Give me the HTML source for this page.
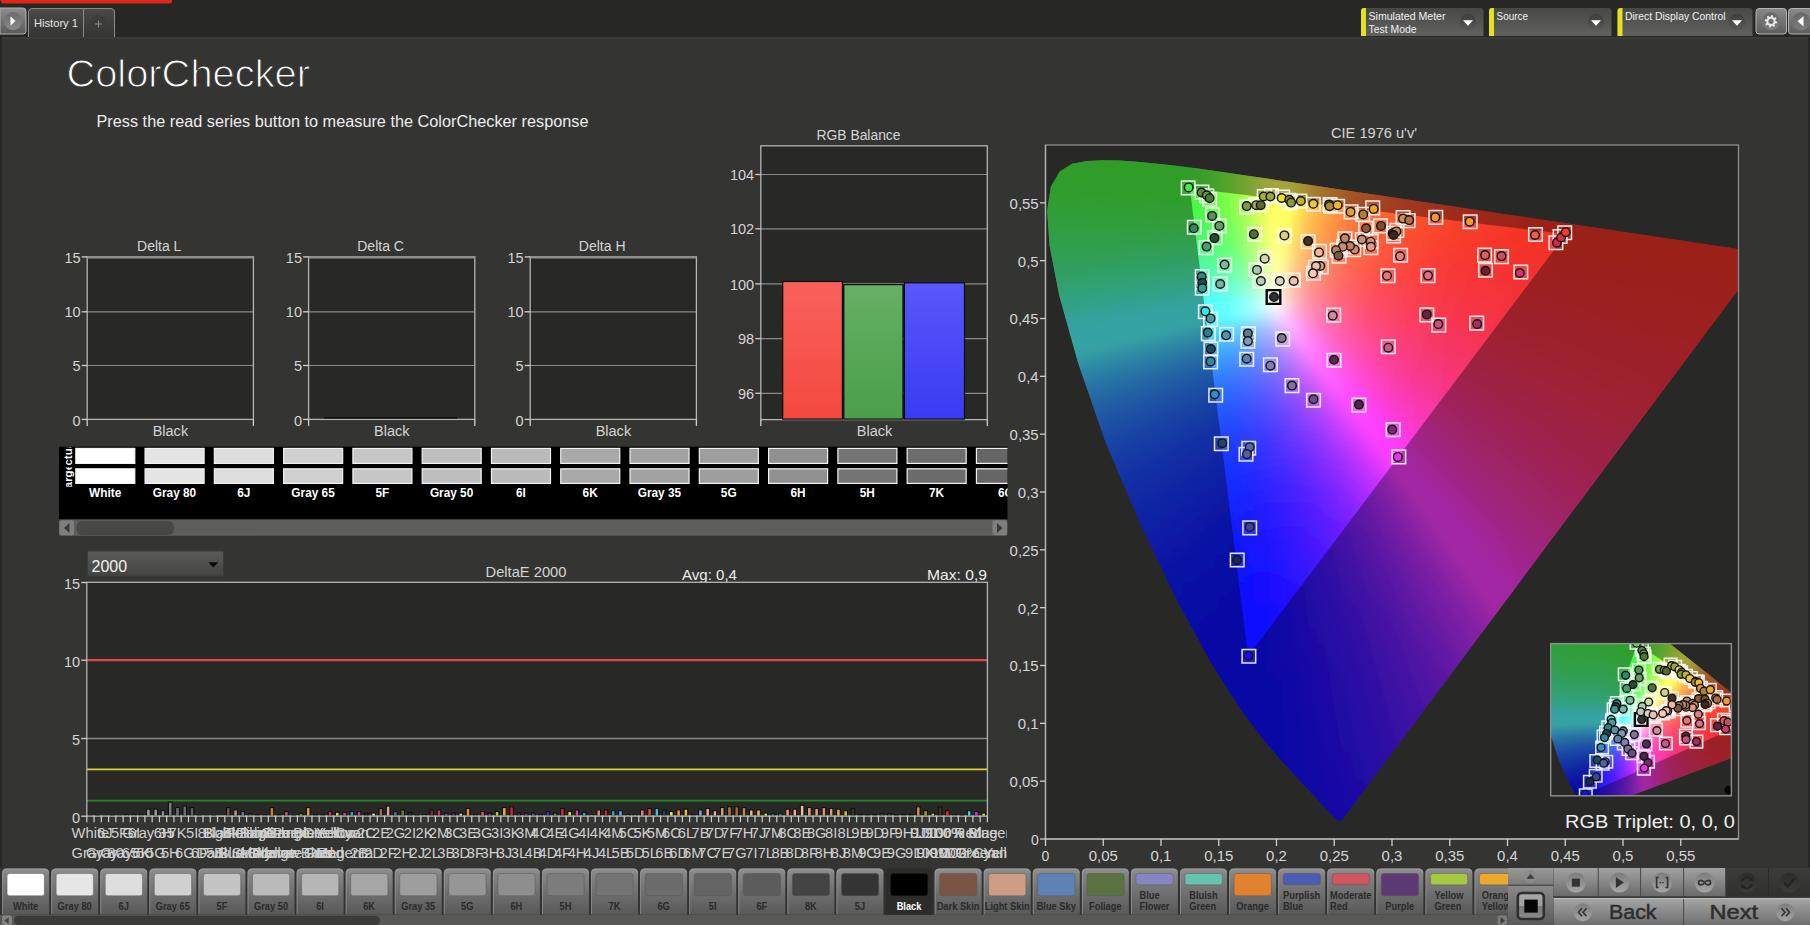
<!DOCTYPE html>
<html><head><meta charset="utf-8"><title>ColorChecker</title><style>*{margin:0;padding:0}html,body{width:1810px;height:925px;overflow:hidden;background:#343433}
svg{display:block;position:absolute;left:0;top:0}
svg text{font-family:"Liberation Sans",sans-serif}</style></head><body>
<svg width="1810" height="925" viewBox="0 0 1810 925">
<defs><linearGradient id="v1" x1="0" y1="0" x2="0" y2="1"><stop offset="0" stop-color="#8e8e8e"/><stop offset="1" stop-color="#5a5a5a"/></linearGradient>
<linearGradient id="v2" x1="0" y1="0" x2="0" y2="1"><stop offset="0" stop-color="#6a6a6a"/><stop offset="1" stop-color="#8a8a8a"/></linearGradient>
<linearGradient id="v3" x1="0" y1="0" x2="0" y2="1"><stop offset="0" stop-color="#4a4a49"/><stop offset="1" stop-color="#343433"/></linearGradient>
<linearGradient id="v4" x1="0" y1="0" x2="0" y2="1"><stop offset="0" stop-color="#484847"/><stop offset="1" stop-color="#616160"/></linearGradient>
<linearGradient id="v5" x1="0" y1="0" x2="0" y2="1"><stop offset="0" stop-color="#3e3e3d"/><stop offset="1" stop-color="#5a5a59"/></linearGradient>
<linearGradient id="v6" x1="0" y1="0" x2="0" y2="1"><stop offset="0" stop-color="#484847"/><stop offset="1" stop-color="#616160"/></linearGradient>
<linearGradient id="v7" x1="0" y1="0" x2="0" y2="1"><stop offset="0" stop-color="#3e3e3d"/><stop offset="1" stop-color="#5a5a59"/></linearGradient>
<linearGradient id="v8" x1="0" y1="0" x2="0" y2="1"><stop offset="0" stop-color="#484847"/><stop offset="1" stop-color="#616160"/></linearGradient>
<linearGradient id="v9" x1="0" y1="0" x2="0" y2="1"><stop offset="0" stop-color="#3e3e3d"/><stop offset="1" stop-color="#5a5a59"/></linearGradient>
<linearGradient id="v10" x1="0" y1="0" x2="0" y2="1"><stop offset="0" stop-color="#8a8a8a"/><stop offset="1" stop-color="#5c5c5c"/></linearGradient>
<linearGradient id="v11" x1="0" y1="0" x2="0" y2="1"><stop offset="0" stop-color="#666"/><stop offset="1" stop-color="#7c7c7c"/></linearGradient>
<linearGradient id="v12" x1="0" y1="0" x2="0" y2="1"><stop offset="0" stop-color="#666"/><stop offset="1" stop-color="#7c7c7c"/></linearGradient>
<linearGradient id="v13" x1="0" y1="0" x2="0" y2="1"><stop offset="0" stop-color="#fa615c"/><stop offset="1" stop-color="#f4483f"/></linearGradient>
<linearGradient id="v14" x1="0" y1="0" x2="0" y2="1"><stop offset="0" stop-color="#65b065"/><stop offset="1" stop-color="#4a9e4a"/></linearGradient>
<linearGradient id="v15" x1="0" y1="0" x2="0" y2="1"><stop offset="0" stop-color="#5858fb"/><stop offset="1" stop-color="#3a3af4"/></linearGradient>
<clipPath id="swc"><rect x="59" y="446.7" width="948.5" height="72.3"/></clipPath>
<clipPath id="ra"><rect x="59" y="447.4" width="16" height="18.2"/></clipPath><clipPath id="rb"><rect x="59" y="467.2" width="16" height="19.6"/></clipPath>
<linearGradient id="v16" x1="0" y1="0" x2="0" y2="1"><stop offset="0" stop-color="#5c5c5b"/><stop offset="1" stop-color="#434342"/></linearGradient>
<clipPath id="xl"><rect x="60" y="820" width="947" height="45"/></clipPath>
<linearGradient id="g0" gradientUnits="userSpaceOnUse" x1="198.7" y1="462" x2="14.2" y2="458.1"><stop offset="0" stop-color="#ffffff"/><stop offset="0.04" stop-color="#d8ffff"/><stop offset="0.083" stop-color="#b4ffff"/><stop offset="0.132" stop-color="#92ffff"/><stop offset="0.198" stop-color="#70ffff"/><stop offset="0.264" stop-color="#5affff"/><stop offset="0.331" stop-color="#52fdff"/><stop offset="0.551" stop-color="#51fcf3"/><stop offset="0.772" stop-color="#51fbe3"/><stop offset="1" stop-color="#50fbd6"/></linearGradient>
<linearGradient id="g1" gradientUnits="userSpaceOnUse" x1="198.7" y1="462" x2="16.5" y2="450.5"><stop offset="0" stop-color="#ffffff"/><stop offset="0.04" stop-color="#d8ffff"/><stop offset="0.083" stop-color="#b4ffff"/><stop offset="0.133" stop-color="#93ffff"/><stop offset="0.2" stop-color="#71ffff"/><stop offset="0.266" stop-color="#5affff"/><stop offset="0.333" stop-color="#52fdff"/><stop offset="0.553" stop-color="#52fdff"/><stop offset="0.773" stop-color="#51fcf3"/><stop offset="1" stop-color="#51fce8"/></linearGradient>
<linearGradient id="g2" gradientUnits="userSpaceOnUse" x1="198.7" y1="462" x2="18.7" y2="443.1"><stop offset="0" stop-color="#ffffff"/><stop offset="0.04" stop-color="#d8ffff"/><stop offset="0.084" stop-color="#b5ffff"/><stop offset="0.134" stop-color="#93ffff"/><stop offset="0.201" stop-color="#71ffff"/><stop offset="0.268" stop-color="#5bffff"/><stop offset="0.335" stop-color="#53feff"/><stop offset="0.555" stop-color="#52fdff"/><stop offset="0.774" stop-color="#52fdff"/><stop offset="1" stop-color="#52fcfa"/></linearGradient>
<linearGradient id="g3" gradientUnits="userSpaceOnUse" x1="198.7" y1="462" x2="20.9" y2="435.7"><stop offset="0" stop-color="#ffffff"/><stop offset="0.041" stop-color="#d9ffff"/><stop offset="0.084" stop-color="#b5ffff"/><stop offset="0.135" stop-color="#94ffff"/><stop offset="0.203" stop-color="#72ffff"/><stop offset="0.27" stop-color="#5bffff"/><stop offset="0.338" stop-color="#53feff"/><stop offset="0.556" stop-color="#53feff"/><stop offset="0.775" stop-color="#53fdff"/><stop offset="1" stop-color="#52fdff"/></linearGradient>
<linearGradient id="g4" gradientUnits="userSpaceOnUse" x1="198.7" y1="462" x2="23.1" y2="428.5"><stop offset="0" stop-color="#ffffff"/><stop offset="0.041" stop-color="#d9ffff"/><stop offset="0.085" stop-color="#b6ffff"/><stop offset="0.136" stop-color="#94ffff"/><stop offset="0.204" stop-color="#72ffff"/><stop offset="0.272" stop-color="#5cffff"/><stop offset="0.34" stop-color="#54ffff"/><stop offset="0.558" stop-color="#53feff"/><stop offset="1" stop-color="#53feff"/></linearGradient>
<linearGradient id="g5" gradientUnits="userSpaceOnUse" x1="198.7" y1="462" x2="25.3" y2="421.3"><stop offset="0" stop-color="#ffffff"/><stop offset="0.041" stop-color="#d9ffff"/><stop offset="0.086" stop-color="#b6ffff"/><stop offset="0.137" stop-color="#95ffff"/><stop offset="0.206" stop-color="#72ffff"/><stop offset="0.274" stop-color="#5cffff"/><stop offset="0.343" stop-color="#54ffff"/><stop offset="1" stop-color="#54ffff"/></linearGradient>
<linearGradient id="g6" gradientUnits="userSpaceOnUse" x1="198.7" y1="462" x2="27.5" y2="414.2"><stop offset="0" stop-color="#ffffff"/><stop offset="0.041" stop-color="#d9ffff"/><stop offset="0.086" stop-color="#b5ffff"/><stop offset="0.138" stop-color="#93ffff"/><stop offset="0.207" stop-color="#71ffff"/><stop offset="0.276" stop-color="#5afcff"/><stop offset="0.345" stop-color="#52f7ff"/><stop offset="0.561" stop-color="#50f3ff"/><stop offset="0.777" stop-color="#50f0ff"/><stop offset="1" stop-color="#4fedff"/></linearGradient>
<linearGradient id="g7" gradientUnits="userSpaceOnUse" x1="198.7" y1="462" x2="29.7" y2="407.1"><stop offset="0" stop-color="#ffffff"/><stop offset="0.042" stop-color="#d8ffff"/><stop offset="0.087" stop-color="#b4ffff"/><stop offset="0.139" stop-color="#92ffff"/><stop offset="0.209" stop-color="#6ffbff"/><stop offset="0.278" stop-color="#58f3ff"/><stop offset="0.348" stop-color="#4fedff"/><stop offset="0.563" stop-color="#4ce5ff"/><stop offset="0.778" stop-color="#4bdfff"/><stop offset="1" stop-color="#49dbff"/></linearGradient>
<linearGradient id="g8" gradientUnits="userSpaceOnUse" x1="198.7" y1="462" x2="32.1" y2="400"><stop offset="0" stop-color="#ffffff"/><stop offset="0.042" stop-color="#d7ffff"/><stop offset="0.088" stop-color="#b3ffff"/><stop offset="0.14" stop-color="#90fcff"/><stop offset="0.211" stop-color="#6df4ff"/><stop offset="0.281" stop-color="#55ebff"/><stop offset="0.351" stop-color="#4ce4ff"/><stop offset="0.565" stop-color="#49d9ff"/><stop offset="0.779" stop-color="#46d0ff"/><stop offset="1" stop-color="#44caff"/></linearGradient>
<linearGradient id="g9" gradientUnits="userSpaceOnUse" x1="198.7" y1="462" x2="34.4" y2="392.9"><stop offset="0" stop-color="#ffffff"/><stop offset="0.042" stop-color="#d6ffff"/><stop offset="0.088" stop-color="#b1fdff"/><stop offset="0.141" stop-color="#8ef7ff"/><stop offset="0.212" stop-color="#6beeff"/><stop offset="0.283" stop-color="#53e3ff"/><stop offset="0.354" stop-color="#49dbff"/><stop offset="0.567" stop-color="#45cdff"/><stop offset="0.78" stop-color="#42c2ff"/><stop offset="1" stop-color="#3fbaff"/></linearGradient>
<linearGradient id="g10" gradientUnits="userSpaceOnUse" x1="198.7" y1="462" x2="36.7" y2="385.8"><stop offset="0" stop-color="#ffffff"/><stop offset="0.043" stop-color="#d6feff"/><stop offset="0.089" stop-color="#b0faff"/><stop offset="0.143" stop-color="#8df3ff"/><stop offset="0.214" stop-color="#69e7ff"/><stop offset="0.285" stop-color="#51dcff"/><stop offset="0.357" stop-color="#46d2ff"/><stop offset="0.569" stop-color="#42c2ff"/><stop offset="0.781" stop-color="#3eb6ff"/><stop offset="1" stop-color="#3bacff"/></linearGradient>
<linearGradient id="g11" gradientUnits="userSpaceOnUse" x1="198.7" y1="462" x2="39" y2="378.5"><stop offset="0" stop-color="#ffffff"/><stop offset="0.043" stop-color="#d5fcff"/><stop offset="0.09" stop-color="#aff6ff"/><stop offset="0.144" stop-color="#8beeff"/><stop offset="0.216" stop-color="#67e1ff"/><stop offset="0.288" stop-color="#4fd4ff"/><stop offset="0.36" stop-color="#44c9ff"/><stop offset="0.571" stop-color="#3eb7ff"/><stop offset="0.782" stop-color="#3aaaff"/><stop offset="1" stop-color="#379fff"/></linearGradient>
<linearGradient id="g12" gradientUnits="userSpaceOnUse" x1="198.7" y1="462" x2="41.3" y2="371.1"><stop offset="0" stop-color="#ffffff"/><stop offset="0.044" stop-color="#d4fbff"/><stop offset="0.091" stop-color="#adf3ff"/><stop offset="0.145" stop-color="#89e9ff"/><stop offset="0.218" stop-color="#65dbff"/><stop offset="0.29" stop-color="#4dcdff"/><stop offset="0.363" stop-color="#41c1ff"/><stop offset="0.573" stop-color="#3badff"/><stop offset="0.783" stop-color="#379eff"/><stop offset="1" stop-color="#3493ff"/></linearGradient>
<linearGradient id="g13" gradientUnits="userSpaceOnUse" x1="198.7" y1="462" x2="43.7" y2="363.7"><stop offset="0" stop-color="#ffffff"/><stop offset="0.044" stop-color="#d3f9ff"/><stop offset="0.091" stop-color="#acf0ff"/><stop offset="0.146" stop-color="#87e5ff"/><stop offset="0.219" stop-color="#63d5ff"/><stop offset="0.293" stop-color="#4ac5ff"/><stop offset="0.366" stop-color="#3fb9ff"/><stop offset="0.575" stop-color="#38a3ff"/><stop offset="0.784" stop-color="#3494ff"/><stop offset="1" stop-color="#3088ff"/></linearGradient>
<linearGradient id="g14" gradientUnits="userSpaceOnUse" x1="198.7" y1="462" x2="46.2" y2="356"><stop offset="0" stop-color="#ffffff"/><stop offset="0.044" stop-color="#d2f7ff"/><stop offset="0.092" stop-color="#aaedff"/><stop offset="0.148" stop-color="#85e0ff"/><stop offset="0.221" stop-color="#61ceff"/><stop offset="0.295" stop-color="#48beff"/><stop offset="0.369" stop-color="#3db1ff"/><stop offset="0.577" stop-color="#369aff"/><stop offset="0.785" stop-color="#318aff"/><stop offset="1" stop-color="#2d7eff"/></linearGradient>
<linearGradient id="g15" gradientUnits="userSpaceOnUse" x1="198.7" y1="462" x2="48.7" y2="348.1"><stop offset="0" stop-color="#ffffff"/><stop offset="0.045" stop-color="#d1f6ff"/><stop offset="0.093" stop-color="#a9eaff"/><stop offset="0.149" stop-color="#84dbff"/><stop offset="0.224" stop-color="#5fc8ff"/><stop offset="0.298" stop-color="#46b7ff"/><stop offset="0.373" stop-color="#3aa9ff"/><stop offset="0.58" stop-color="#3391ff"/><stop offset="0.787" stop-color="#2e80ff"/><stop offset="1" stop-color="#2a74ff"/></linearGradient>
<linearGradient id="g16" gradientUnits="userSpaceOnUse" x1="198.7" y1="462" x2="51.7" y2="340.4"><stop offset="0" stop-color="#ffffff"/><stop offset="0.045" stop-color="#d0f4ff"/><stop offset="0.094" stop-color="#a7e6ff"/><stop offset="0.151" stop-color="#82d6ff"/><stop offset="0.226" stop-color="#5dc2ff"/><stop offset="0.302" stop-color="#44b0ff"/><stop offset="0.377" stop-color="#38a1ff"/><stop offset="0.583" stop-color="#3088ff"/><stop offset="0.788" stop-color="#2b78ff"/><stop offset="1" stop-color="#276bff"/></linearGradient>
<linearGradient id="g17" gradientUnits="userSpaceOnUse" x1="198.7" y1="462" x2="54.8" y2="332.4"><stop offset="0" stop-color="#ffffff"/><stop offset="0.046" stop-color="#cff2ff"/><stop offset="0.096" stop-color="#a6e3ff"/><stop offset="0.153" stop-color="#80d1ff"/><stop offset="0.229" stop-color="#5bbcff"/><stop offset="0.306" stop-color="#42a9ff"/><stop offset="0.382" stop-color="#359aff"/><stop offset="0.586" stop-color="#2e80ff"/><stop offset="0.79" stop-color="#296fff"/><stop offset="1" stop-color="#2562ff"/></linearGradient>
<linearGradient id="g18" gradientUnits="userSpaceOnUse" x1="198.7" y1="462" x2="58.1" y2="324.3"><stop offset="0" stop-color="#ffffff"/><stop offset="0.047" stop-color="#cef0ff"/><stop offset="0.097" stop-color="#a4dfff"/><stop offset="0.155" stop-color="#7eccff"/><stop offset="0.233" stop-color="#58b5ff"/><stop offset="0.31" stop-color="#40a1ff"/><stop offset="0.388" stop-color="#3392ff"/><stop offset="0.59" stop-color="#2b78ff"/><stop offset="0.792" stop-color="#2667ff"/><stop offset="1" stop-color="#225aff"/></linearGradient>
<linearGradient id="g19" gradientUnits="userSpaceOnUse" x1="198.7" y1="462" x2="61.4" y2="315.8"><stop offset="0" stop-color="#ffffff"/><stop offset="0.047" stop-color="#cdeeff"/><stop offset="0.098" stop-color="#a2dbff"/><stop offset="0.157" stop-color="#7cc7ff"/><stop offset="0.236" stop-color="#56afff"/><stop offset="0.315" stop-color="#3d9aff"/><stop offset="0.393" stop-color="#318aff"/><stop offset="0.594" stop-color="#2971ff"/><stop offset="0.794" stop-color="#245fff"/><stop offset="1" stop-color="#2053ff"/></linearGradient>
<linearGradient id="g20" gradientUnits="userSpaceOnUse" x1="198.7" y1="462" x2="64.9" y2="307"><stop offset="0" stop-color="#ffffff"/><stop offset="0.048" stop-color="#ccecff"/><stop offset="0.1" stop-color="#a0d7ff"/><stop offset="0.16" stop-color="#79c1ff"/><stop offset="0.24" stop-color="#54a8ff"/><stop offset="0.32" stop-color="#3b93ff"/><stop offset="0.4" stop-color="#2f83ff"/><stop offset="0.598" stop-color="#2769ff"/><stop offset="0.796" stop-color="#2258ff"/><stop offset="1" stop-color="#1e4cff"/></linearGradient>
<linearGradient id="g21" gradientUnits="userSpaceOnUse" x1="198.7" y1="462" x2="68.6" y2="297.8"><stop offset="0" stop-color="#ffffff"/><stop offset="0.049" stop-color="#cbe9ff"/><stop offset="0.102" stop-color="#9ed3ff"/><stop offset="0.162" stop-color="#77bcff"/><stop offset="0.244" stop-color="#52a1ff"/><stop offset="0.325" stop-color="#398cff"/><stop offset="0.406" stop-color="#2c7bff"/><stop offset="0.602" stop-color="#2562ff"/><stop offset="0.798" stop-color="#2051ff"/><stop offset="1" stop-color="#1c45ff"/></linearGradient>
<linearGradient id="g22" gradientUnits="userSpaceOnUse" x1="198.7" y1="462" x2="72.4" y2="288.2"><stop offset="0" stop-color="#ffffff"/><stop offset="0.05" stop-color="#c9e7ff"/><stop offset="0.103" stop-color="#9ccfff"/><stop offset="0.165" stop-color="#75b6ff"/><stop offset="0.248" stop-color="#4f9aff"/><stop offset="0.331" stop-color="#3784ff"/><stop offset="0.413" stop-color="#2a73ff"/><stop offset="0.607" stop-color="#225aff"/><stop offset="0.801" stop-color="#1e4aff"/><stop offset="1" stop-color="#1a3eff"/></linearGradient>
<linearGradient id="g23" gradientUnits="userSpaceOnUse" x1="198.7" y1="462" x2="76.5" y2="278"><stop offset="0" stop-color="#ffffff"/><stop offset="0.051" stop-color="#c8e4ff"/><stop offset="0.105" stop-color="#9acaff"/><stop offset="0.169" stop-color="#72b0ff"/><stop offset="0.253" stop-color="#4d93ff"/><stop offset="0.337" stop-color="#347cff"/><stop offset="0.421" stop-color="#286bff"/><stop offset="0.612" stop-color="#2053ff"/><stop offset="0.803" stop-color="#1b43ff"/><stop offset="1" stop-color="#1838ff"/></linearGradient>
<linearGradient id="g24" gradientUnits="userSpaceOnUse" x1="198.7" y1="462" x2="80.9" y2="267.6"><stop offset="0" stop-color="#ffffff"/><stop offset="0.052" stop-color="#c6e1ff"/><stop offset="0.108" stop-color="#97c5ff"/><stop offset="0.172" stop-color="#6fa9ff"/><stop offset="0.258" stop-color="#4a8bff"/><stop offset="0.345" stop-color="#3275ff"/><stop offset="0.431" stop-color="#2564ff"/><stop offset="0.619" stop-color="#1e4cff"/><stop offset="0.806" stop-color="#1a3dff"/><stop offset="1" stop-color="#1632ff"/></linearGradient>
<linearGradient id="g25" gradientUnits="userSpaceOnUse" x1="198.7" y1="462" x2="85.8" y2="256.7"><stop offset="0" stop-color="#ffffff"/><stop offset="0.053" stop-color="#c4deff"/><stop offset="0.11" stop-color="#95bfff"/><stop offset="0.177" stop-color="#6ca2ff"/><stop offset="0.265" stop-color="#4784ff"/><stop offset="0.353" stop-color="#2f6dff"/><stop offset="0.442" stop-color="#235cff"/><stop offset="0.626" stop-color="#1c45ff"/><stop offset="0.81" stop-color="#1837ff"/><stop offset="1" stop-color="#152dff"/></linearGradient>
<linearGradient id="g26" gradientUnits="userSpaceOnUse" x1="198.7" y1="462" x2="91" y2="245.1"><stop offset="0" stop-color="#ffffff"/><stop offset="0.054" stop-color="#c2dbff"/><stop offset="0.114" stop-color="#92baff"/><stop offset="0.182" stop-color="#699bff"/><stop offset="0.272" stop-color="#447bff"/><stop offset="0.363" stop-color="#2d64ff"/><stop offset="0.454" stop-color="#2054ff"/><stop offset="0.634" stop-color="#1a3fff"/><stop offset="0.814" stop-color="#1631ff"/><stop offset="1" stop-color="#1327ff"/></linearGradient>
<linearGradient id="g27" gradientUnits="userSpaceOnUse" x1="198.7" y1="462" x2="96.6" y2="232.7"><stop offset="0" stop-color="#ffffff"/><stop offset="0.056" stop-color="#c0d7ff"/><stop offset="0.117" stop-color="#8fb3ff"/><stop offset="0.187" stop-color="#6693ff"/><stop offset="0.281" stop-color="#4173ff"/><stop offset="0.374" stop-color="#2a5cff"/><stop offset="0.468" stop-color="#1e4bff"/><stop offset="0.644" stop-color="#1838ff"/><stop offset="0.819" stop-color="#142bff"/><stop offset="1" stop-color="#1222ff"/></linearGradient>
<linearGradient id="g28" gradientUnits="userSpaceOnUse" x1="198.7" y1="462" x2="102.6" y2="219.3"><stop offset="0" stop-color="#ffffff"/><stop offset="0.058" stop-color="#bed2ff"/><stop offset="0.121" stop-color="#8bacff"/><stop offset="0.194" stop-color="#628bff"/><stop offset="0.29" stop-color="#3e6aff"/><stop offset="0.387" stop-color="#2753ff"/><stop offset="0.484" stop-color="#1b43ff"/><stop offset="0.654" stop-color="#1631ff"/><stop offset="0.825" stop-color="#1326ff"/><stop offset="1" stop-color="#101eff"/></linearGradient>
<linearGradient id="g29" gradientUnits="userSpaceOnUse" x1="198.7" y1="462" x2="109.2" y2="205"><stop offset="0" stop-color="#ffffff"/><stop offset="0.06" stop-color="#bbcdff"/><stop offset="0.126" stop-color="#87a5ff"/><stop offset="0.201" stop-color="#5e82ff"/><stop offset="0.302" stop-color="#3a61ff"/><stop offset="0.403" stop-color="#244aff"/><stop offset="0.503" stop-color="#193bff"/><stop offset="0.667" stop-color="#142bff"/><stop offset="0.831" stop-color="#1120ff"/><stop offset="1" stop-color="#0f19ff"/></linearGradient>
<linearGradient id="g30" gradientUnits="userSpaceOnUse" x1="198.7" y1="462" x2="116.7" y2="190.4"><stop offset="0" stop-color="#ffffff"/><stop offset="0.063" stop-color="#b8c8ff"/><stop offset="0.132" stop-color="#839cff"/><stop offset="0.211" stop-color="#5978ff"/><stop offset="0.317" stop-color="#3657ff"/><stop offset="0.422" stop-color="#2141ff"/><stop offset="0.528" stop-color="#1632ff"/><stop offset="0.684" stop-color="#1224ff"/><stop offset="0.84" stop-color="#0f1bff"/><stop offset="1" stop-color="#0d15ff"/></linearGradient>
<linearGradient id="g31" gradientUnits="userSpaceOnUse" x1="198.7" y1="462" x2="124.9" y2="174.6"><stop offset="0" stop-color="#ffffff"/><stop offset="0.067" stop-color="#b4c1ff"/><stop offset="0.14" stop-color="#7e93ff"/><stop offset="0.223" stop-color="#546dff"/><stop offset="0.335" stop-color="#324dff"/><stop offset="0.446" stop-color="#1e37ff"/><stop offset="0.558" stop-color="#142aff"/><stop offset="0.704" stop-color="#101eff"/><stop offset="0.85" stop-color="#0e17ff"/><stop offset="1" stop-color="#0c11ff"/></linearGradient>
<linearGradient id="g32" gradientUnits="userSpaceOnUse" x1="198.7" y1="462" x2="133.9" y2="157.2"><stop offset="0" stop-color="#ffffff"/><stop offset="0.071" stop-color="#afbaff"/><stop offset="0.149" stop-color="#7888ff"/><stop offset="0.238" stop-color="#4f62ff"/><stop offset="0.357" stop-color="#2e42ff"/><stop offset="0.476" stop-color="#1b2eff"/><stop offset="0.595" stop-color="#1121ff"/><stop offset="0.729" stop-color="#0e18ff"/><stop offset="0.862" stop-color="#0d12ff"/><stop offset="1" stop-color="#0b0eff"/></linearGradient>
<linearGradient id="g33" gradientUnits="userSpaceOnUse" x1="198.7" y1="462" x2="144.2" y2="139.6"><stop offset="0" stop-color="#ffffff"/><stop offset="0.077" stop-color="#aab0ff"/><stop offset="0.161" stop-color="#717bff"/><stop offset="0.258" stop-color="#4955ff"/><stop offset="0.387" stop-color="#2936ff"/><stop offset="0.517" stop-color="#1724ff"/><stop offset="0.646" stop-color="#0f19ff"/><stop offset="0.763" stop-color="#0d12ff"/><stop offset="0.88" stop-color="#0b0eff"/><stop offset="1" stop-color="#0b0bff"/></linearGradient>
<linearGradient id="g34" gradientUnits="userSpaceOnUse" x1="198.7" y1="462" x2="155.6" y2="120.7"><stop offset="0" stop-color="#ffffff"/><stop offset="0.086" stop-color="#a3a5ff"/><stop offset="0.178" stop-color="#696dff"/><stop offset="0.286" stop-color="#4147ff"/><stop offset="0.428" stop-color="#242aff"/><stop offset="0.571" stop-color="#141aff"/><stop offset="0.714" stop-color="#0c11ff"/><stop offset="0.808" stop-color="#0b0dff"/><stop offset="0.903" stop-color="#0a0bff"/><stop offset="1" stop-color="#0a0aff"/></linearGradient>
<linearGradient id="g35" gradientUnits="userSpaceOnUse" x1="198.7" y1="462" x2="166.5" y2="107.3"><stop offset="0" stop-color="#ffffff"/><stop offset="0.096" stop-color="#9b99ff"/><stop offset="0.2" stop-color="#615fff"/><stop offset="0.32" stop-color="#3a3aff"/><stop offset="0.48" stop-color="#1f20ff"/><stop offset="0.64" stop-color="#1112ff"/><stop offset="0.8" stop-color="#0b0cff"/><stop offset="0.866" stop-color="#0a0aff"/><stop offset="1" stop-color="#0a0aff"/></linearGradient>
<linearGradient id="g36" gradientUnits="userSpaceOnUse" x1="198.7" y1="462" x2="180.2" y2="82.4"><stop offset="0" stop-color="#ffffff"/><stop offset="0.092" stop-color="#9e96ff"/><stop offset="0.192" stop-color="#655cff"/><stop offset="0.308" stop-color="#3f37ff"/><stop offset="0.462" stop-color="#241eff"/><stop offset="0.616" stop-color="#1511ff"/><stop offset="0.77" stop-color="#0d0bff"/><stop offset="0.846" stop-color="#0b0aff"/><stop offset="0.922" stop-color="#0a0aff"/><stop offset="1" stop-color="#0a0aff"/></linearGradient>
<linearGradient id="g37" gradientUnits="userSpaceOnUse" x1="198.7" y1="462" x2="198.7" y2="63"><stop offset="0" stop-color="#ffffff"/><stop offset="0.082" stop-color="#a99aff"/><stop offset="0.171" stop-color="#7360ff"/><stop offset="0.274" stop-color="#4d3bff"/><stop offset="0.411" stop-color="#3121ff"/><stop offset="0.548" stop-color="#2013ff"/><stop offset="0.685" stop-color="#170dff"/><stop offset="0.789" stop-color="#120cff"/><stop offset="0.893" stop-color="#0f0bff"/><stop offset="1" stop-color="#0d0bff"/></linearGradient>
<linearGradient id="g38" gradientUnits="userSpaceOnUse" x1="198.7" y1="462" x2="216.2" y2="43.2"><stop offset="0" stop-color="#ffffff"/><stop offset="0.074" stop-color="#b29dff"/><stop offset="0.155" stop-color="#7e64ff"/><stop offset="0.247" stop-color="#593fff"/><stop offset="0.371" stop-color="#3c24ff"/><stop offset="0.494" stop-color="#2b15ff"/><stop offset="0.618" stop-color="#200fff"/><stop offset="0.744" stop-color="#1a0dff"/><stop offset="0.87" stop-color="#150cff"/><stop offset="1" stop-color="#120cff"/></linearGradient>
<linearGradient id="g39" gradientUnits="userSpaceOnUse" x1="198.7" y1="462" x2="235.7" y2="21.1"><stop offset="0" stop-color="#ffffff"/><stop offset="0.067" stop-color="#baa0ff"/><stop offset="0.139" stop-color="#8968ff"/><stop offset="0.223" stop-color="#6642ff"/><stop offset="0.335" stop-color="#4827ff"/><stop offset="0.446" stop-color="#3618ff"/><stop offset="0.558" stop-color="#2b11ff"/><stop offset="0.704" stop-color="#230fff"/><stop offset="0.85" stop-color="#1d0eff"/><stop offset="1" stop-color="#180dff"/></linearGradient>
<linearGradient id="g40" gradientUnits="userSpaceOnUse" x1="198.7" y1="462" x2="255.1" y2="15.9"><stop offset="0" stop-color="#ffffff"/><stop offset="0.063" stop-color="#c1a3ff"/><stop offset="0.131" stop-color="#946bff"/><stop offset="0.21" stop-color="#7245ff"/><stop offset="0.315" stop-color="#5529ff"/><stop offset="0.42" stop-color="#421aff"/><stop offset="0.525" stop-color="#3713ff"/><stop offset="0.682" stop-color="#2d11ff"/><stop offset="0.838" stop-color="#2610ff"/><stop offset="1" stop-color="#210fff"/></linearGradient>
<linearGradient id="g41" gradientUnits="userSpaceOnUse" x1="198.7" y1="462" x2="272.3" y2="26.7"><stop offset="0" stop-color="#ffffff"/><stop offset="0.062" stop-color="#c9a6ff"/><stop offset="0.128" stop-color="#9f6eff"/><stop offset="0.205" stop-color="#7e49ff"/><stop offset="0.308" stop-color="#612cff"/><stop offset="0.41" stop-color="#4f1dff"/><stop offset="0.513" stop-color="#4316ff"/><stop offset="0.674" stop-color="#3814ff"/><stop offset="0.834" stop-color="#3112ff"/><stop offset="1" stop-color="#2c11ff"/></linearGradient>
<linearGradient id="g42" gradientUnits="userSpaceOnUse" x1="198.7" y1="462" x2="286.9" y2="47"><stop offset="0" stop-color="#ffffff"/><stop offset="0.062" stop-color="#cfa8ff"/><stop offset="0.128" stop-color="#a971ff"/><stop offset="0.205" stop-color="#8a4cff"/><stop offset="0.308" stop-color="#6e2fff"/><stop offset="0.411" stop-color="#5c20ff"/><stop offset="0.514" stop-color="#5019ff"/><stop offset="0.674" stop-color="#4516ff"/><stop offset="0.835" stop-color="#3e15ff"/><stop offset="1" stop-color="#3914ff"/></linearGradient>
<linearGradient id="g43" gradientUnits="userSpaceOnUse" x1="198.7" y1="462" x2="300.4" y2="65.9"><stop offset="0" stop-color="#ffffff"/><stop offset="0.062" stop-color="#d6aaff"/><stop offset="0.129" stop-color="#b374ff"/><stop offset="0.206" stop-color="#964fff"/><stop offset="0.309" stop-color="#7c32ff"/><stop offset="0.412" stop-color="#6a23ff"/><stop offset="0.515" stop-color="#5e1cff"/><stop offset="0.675" stop-color="#5319ff"/><stop offset="0.835" stop-color="#4c18ff"/><stop offset="1" stop-color="#4717ff"/></linearGradient>
<linearGradient id="g44" gradientUnits="userSpaceOnUse" x1="198.7" y1="462" x2="313" y2="83.5"><stop offset="0" stop-color="#ffffff"/><stop offset="0.062" stop-color="#ddacff"/><stop offset="0.129" stop-color="#bd77ff"/><stop offset="0.206" stop-color="#a252ff"/><stop offset="0.309" stop-color="#8935ff"/><stop offset="0.412" stop-color="#7826ff"/><stop offset="0.516" stop-color="#6d1eff"/><stop offset="0.675" stop-color="#621cff"/><stop offset="0.835" stop-color="#5b1bff"/><stop offset="1" stop-color="#561aff"/></linearGradient>
<linearGradient id="g45" gradientUnits="userSpaceOnUse" x1="198.7" y1="462" x2="324.8" y2="99.9"><stop offset="0" stop-color="#ffffff"/><stop offset="0.062" stop-color="#e3afff"/><stop offset="0.129" stop-color="#c77aff"/><stop offset="0.207" stop-color="#af55ff"/><stop offset="0.31" stop-color="#9738ff"/><stop offset="0.413" stop-color="#8629ff"/><stop offset="0.516" stop-color="#7c22ff"/><stop offset="0.676" stop-color="#7220ff"/><stop offset="0.836" stop-color="#6b1eff"/><stop offset="1" stop-color="#651dff"/></linearGradient>
<linearGradient id="g46" gradientUnits="userSpaceOnUse" x1="198.7" y1="462" x2="335.9" y2="115.5"><stop offset="0" stop-color="#ffffff"/><stop offset="0.062" stop-color="#e9b1ff"/><stop offset="0.129" stop-color="#d17dff"/><stop offset="0.207" stop-color="#bb58ff"/><stop offset="0.31" stop-color="#a53bff"/><stop offset="0.414" stop-color="#962cff"/><stop offset="0.517" stop-color="#8b25ff"/><stop offset="0.676" stop-color="#8223ff"/><stop offset="0.836" stop-color="#7b22ff"/><stop offset="1" stop-color="#7721ff"/></linearGradient>
<linearGradient id="g47" gradientUnits="userSpaceOnUse" x1="198.7" y1="462" x2="346.4" y2="130.2"><stop offset="0" stop-color="#ffffff"/><stop offset="0.062" stop-color="#efb2ff"/><stop offset="0.129" stop-color="#db7fff"/><stop offset="0.207" stop-color="#c75bff"/><stop offset="0.311" stop-color="#b33eff"/><stop offset="0.414" stop-color="#a52fff"/><stop offset="0.518" stop-color="#9c28ff"/><stop offset="0.677" stop-color="#9326ff"/><stop offset="0.836" stop-color="#8d25ff"/><stop offset="1" stop-color="#8924ff"/></linearGradient>
<linearGradient id="g48" gradientUnits="userSpaceOnUse" x1="198.7" y1="462" x2="356.5" y2="144.2"><stop offset="0" stop-color="#ffffff"/><stop offset="0.062" stop-color="#f4b4ff"/><stop offset="0.13" stop-color="#e582ff"/><stop offset="0.207" stop-color="#d45eff"/><stop offset="0.311" stop-color="#c241ff"/><stop offset="0.415" stop-color="#b532ff"/><stop offset="0.519" stop-color="#ad2cff"/><stop offset="0.677" stop-color="#a52aff"/><stop offset="0.836" stop-color="#a029ff"/><stop offset="1" stop-color="#9c28ff"/></linearGradient>
<linearGradient id="g49" gradientUnits="userSpaceOnUse" x1="198.7" y1="462" x2="366" y2="157.6"><stop offset="0" stop-color="#ffffff"/><stop offset="0.062" stop-color="#fab6ff"/><stop offset="0.13" stop-color="#ee85ff"/><stop offset="0.208" stop-color="#e161ff"/><stop offset="0.312" stop-color="#d245ff"/><stop offset="0.415" stop-color="#c635ff"/><stop offset="0.519" stop-color="#bf2fff"/><stop offset="0.678" stop-color="#b92eff"/><stop offset="0.837" stop-color="#b52dff"/><stop offset="1" stop-color="#b12dff"/></linearGradient>
<linearGradient id="g50" gradientUnits="userSpaceOnUse" x1="198.7" y1="462" x2="375.3" y2="170.4"><stop offset="0" stop-color="#ffffff"/><stop offset="0.062" stop-color="#ffb8ff"/><stop offset="0.13" stop-color="#f887ff"/><stop offset="0.208" stop-color="#ee64ff"/><stop offset="0.312" stop-color="#e148ff"/><stop offset="0.416" stop-color="#d839ff"/><stop offset="0.52" stop-color="#d133ff"/><stop offset="0.678" stop-color="#cd32ff"/><stop offset="0.837" stop-color="#ca32ff"/><stop offset="1" stop-color="#c831ff"/></linearGradient>
<linearGradient id="g51" gradientUnits="userSpaceOnUse" x1="198.7" y1="462" x2="384.2" y2="182.9"><stop offset="0" stop-color="#ffffff"/><stop offset="0.062" stop-color="#ffbaff"/><stop offset="0.13" stop-color="#ff8aff"/><stop offset="0.208" stop-color="#fb67ff"/><stop offset="0.312" stop-color="#f24bff"/><stop offset="0.416" stop-color="#ea3dff"/><stop offset="0.52" stop-color="#e537ff"/><stop offset="0.679" stop-color="#e337ff"/><stop offset="0.837" stop-color="#e137ff"/><stop offset="1" stop-color="#e036ff"/></linearGradient>
<linearGradient id="g52" gradientUnits="userSpaceOnUse" x1="198.7" y1="462" x2="392.8" y2="194.9"><stop offset="0" stop-color="#ffffff"/><stop offset="0.063" stop-color="#ffbbff"/><stop offset="0.13" stop-color="#ff8cff"/><stop offset="0.208" stop-color="#ff6aff"/><stop offset="0.313" stop-color="#ff4eff"/><stop offset="0.417" stop-color="#fd40ff"/><stop offset="0.521" stop-color="#fa3cff"/><stop offset="1" stop-color="#fa3cff"/></linearGradient>
<linearGradient id="g53" gradientUnits="userSpaceOnUse" x1="198.7" y1="462" x2="401.1" y2="206.6"><stop offset="0" stop-color="#ffffff"/><stop offset="0.063" stop-color="#ffbaff"/><stop offset="0.13" stop-color="#ff8bff"/><stop offset="0.209" stop-color="#ff68ff"/><stop offset="0.313" stop-color="#ff4eff"/><stop offset="0.417" stop-color="#ff40ff"/><stop offset="0.522" stop-color="#fc3bff"/><stop offset="0.837" stop-color="#fc3bff"/><stop offset="1" stop-color="#fb3bff"/></linearGradient>
<linearGradient id="g54" gradientUnits="userSpaceOnUse" x1="198.7" y1="462" x2="409.3" y2="218"><stop offset="0" stop-color="#ffffff"/><stop offset="0.063" stop-color="#ffb8ff"/><stop offset="0.131" stop-color="#ff89ff"/><stop offset="0.209" stop-color="#ff66ff"/><stop offset="0.313" stop-color="#ff4cff"/><stop offset="0.418" stop-color="#fe3fff"/><stop offset="0.522" stop-color="#fb3bfe"/><stop offset="0.68" stop-color="#fb3afa"/><stop offset="0.838" stop-color="#fb3af8"/><stop offset="1" stop-color="#fb3af5"/></linearGradient>
<linearGradient id="g55" gradientUnits="userSpaceOnUse" x1="198.7" y1="462" x2="417.3" y2="229.2"><stop offset="0" stop-color="#ffffff"/><stop offset="0.063" stop-color="#ffb7ff"/><stop offset="0.131" stop-color="#ff87ff"/><stop offset="0.209" stop-color="#ff65fd"/><stop offset="0.314" stop-color="#ff4bf6"/><stop offset="0.418" stop-color="#fd3ef0"/><stop offset="0.523" stop-color="#fa3aed"/><stop offset="0.68" stop-color="#fa3ae7"/><stop offset="0.838" stop-color="#fa3ae4"/><stop offset="1" stop-color="#fa39e1"/></linearGradient>
<linearGradient id="g56" gradientUnits="userSpaceOnUse" x1="198.7" y1="462" x2="425.2" y2="240.2"><stop offset="0" stop-color="#ffffff"/><stop offset="0.063" stop-color="#ffb5ff"/><stop offset="0.131" stop-color="#ff85fa"/><stop offset="0.209" stop-color="#ff63f2"/><stop offset="0.314" stop-color="#ff4ae9"/><stop offset="0.419" stop-color="#fd3de1"/><stop offset="0.523" stop-color="#fa39dd"/><stop offset="0.681" stop-color="#f939d6"/><stop offset="0.838" stop-color="#f939d2"/><stop offset="1" stop-color="#f939ce"/></linearGradient>
<linearGradient id="g57" gradientUnits="userSpaceOnUse" x1="198.7" y1="462" x2="433" y2="251"><stop offset="0" stop-color="#ffffff"/><stop offset="0.063" stop-color="#ffb4fc"/><stop offset="0.131" stop-color="#ff83f3"/><stop offset="0.21" stop-color="#ff62e8"/><stop offset="0.314" stop-color="#ff49dc"/><stop offset="0.419" stop-color="#fc3dd4"/><stop offset="0.524" stop-color="#f939ce"/><stop offset="0.681" stop-color="#f938c7"/><stop offset="0.838" stop-color="#f838c2"/><stop offset="1" stop-color="#f838be"/></linearGradient>
<linearGradient id="g58" gradientUnits="userSpaceOnUse" x1="198.7" y1="462" x2="440.7" y2="261.8"><stop offset="0" stop-color="#ffffff"/><stop offset="0.063" stop-color="#ffb2f7"/><stop offset="0.131" stop-color="#ff82eb"/><stop offset="0.21" stop-color="#ff61de"/><stop offset="0.315" stop-color="#ff48d1"/><stop offset="0.42" stop-color="#fc3cc7"/><stop offset="0.524" stop-color="#f838c1"/><stop offset="0.681" stop-color="#f838b9"/><stop offset="0.838" stop-color="#f838b3"/><stop offset="1" stop-color="#f837af"/></linearGradient>
<linearGradient id="g59" gradientUnits="userSpaceOnUse" x1="198.7" y1="462" x2="448.3" y2="272.5"><stop offset="0" stop-color="#ffffff"/><stop offset="0.063" stop-color="#ffb1f3"/><stop offset="0.131" stop-color="#ff80e4"/><stop offset="0.21" stop-color="#ff5fd5"/><stop offset="0.315" stop-color="#ff47c6"/><stop offset="0.42" stop-color="#fb3cbc"/><stop offset="0.525" stop-color="#f838b5"/><stop offset="0.682" stop-color="#f837ac"/><stop offset="0.838" stop-color="#f737a6"/><stop offset="1" stop-color="#f737a1"/></linearGradient>
<linearGradient id="g60" gradientUnits="userSpaceOnUse" x1="198.7" y1="462" x2="456.4" y2="282.9"><stop offset="0" stop-color="#ffffff"/><stop offset="0.063" stop-color="#ffafef"/><stop offset="0.131" stop-color="#ff7edd"/><stop offset="0.21" stop-color="#ff5ecd"/><stop offset="0.315" stop-color="#ff46bc"/><stop offset="0.42" stop-color="#fb3bb1"/><stop offset="0.525" stop-color="#f837a9"/><stop offset="0.682" stop-color="#f737a0"/><stop offset="0.838" stop-color="#f7379a"/><stop offset="1" stop-color="#f73695"/></linearGradient>
<linearGradient id="g61" gradientUnits="userSpaceOnUse" x1="198.7" y1="462" x2="464.6" y2="293.3"><stop offset="0" stop-color="#ffffff"/><stop offset="0.063" stop-color="#ffaeeb"/><stop offset="0.131" stop-color="#ff7dd7"/><stop offset="0.21" stop-color="#ff5dc4"/><stop offset="0.315" stop-color="#ff46b3"/><stop offset="0.419" stop-color="#fa3aa7"/><stop offset="0.524" stop-color="#f7379f"/><stop offset="0.681" stop-color="#f73695"/><stop offset="0.838" stop-color="#f6368e"/><stop offset="1" stop-color="#f63689"/></linearGradient>
<linearGradient id="g62" gradientUnits="userSpaceOnUse" x1="198.7" y1="462" x2="472.8" y2="303.7"><stop offset="0" stop-color="#ffffff"/><stop offset="0.063" stop-color="#ffade7"/><stop offset="0.131" stop-color="#ff7cd0"/><stop offset="0.209" stop-color="#ff5cbc"/><stop offset="0.314" stop-color="#ff45aa"/><stop offset="0.419" stop-color="#fa3a9d"/><stop offset="0.524" stop-color="#f73695"/><stop offset="0.681" stop-color="#f6368b"/><stop offset="0.838" stop-color="#f63684"/><stop offset="1" stop-color="#f6367f"/></linearGradient>
<linearGradient id="g63" gradientUnits="userSpaceOnUse" x1="198.7" y1="462" x2="481.2" y2="314.3"><stop offset="0" stop-color="#ffffff"/><stop offset="0.063" stop-color="#ffabe3"/><stop offset="0.131" stop-color="#ff7aca"/><stop offset="0.209" stop-color="#ff5ab5"/><stop offset="0.314" stop-color="#fe44a1"/><stop offset="0.419" stop-color="#f93994"/><stop offset="0.523" stop-color="#f6368c"/><stop offset="0.681" stop-color="#f63681"/><stop offset="0.838" stop-color="#f6357a"/><stop offset="1" stop-color="#f53575"/></linearGradient>
<linearGradient id="g64" gradientUnits="userSpaceOnUse" x1="198.7" y1="462" x2="489.7" y2="325.1"><stop offset="0" stop-color="#ffffff"/><stop offset="0.063" stop-color="#ffaadf"/><stop offset="0.131" stop-color="#ff79c4"/><stop offset="0.209" stop-color="#ff59ad"/><stop offset="0.314" stop-color="#fe4399"/><stop offset="0.418" stop-color="#f9398c"/><stop offset="0.523" stop-color="#f63683"/><stop offset="0.68" stop-color="#f63579"/><stop offset="0.838" stop-color="#f53572"/><stop offset="1" stop-color="#f5356c"/></linearGradient>
<linearGradient id="g65" gradientUnits="userSpaceOnUse" x1="198.7" y1="462" x2="498.3" y2="336"><stop offset="0" stop-color="#ffffff"/><stop offset="0.063" stop-color="#ffa8db"/><stop offset="0.131" stop-color="#ff77be"/><stop offset="0.209" stop-color="#ff58a6"/><stop offset="0.313" stop-color="#fd4391"/><stop offset="0.418" stop-color="#f83983"/><stop offset="0.522" stop-color="#f6357a"/><stop offset="0.68" stop-color="#f53570"/><stop offset="0.838" stop-color="#f53569"/><stop offset="1" stop-color="#f53464"/></linearGradient>
<linearGradient id="g66" gradientUnits="userSpaceOnUse" x1="198.7" y1="462" x2="507.2" y2="347.3"><stop offset="0" stop-color="#ffffff"/><stop offset="0.063" stop-color="#ffa7d8"/><stop offset="0.13" stop-color="#ff76b8"/><stop offset="0.209" stop-color="#ff579f"/><stop offset="0.313" stop-color="#fd4289"/><stop offset="0.417" stop-color="#f8387c"/><stop offset="0.522" stop-color="#f53573"/><stop offset="0.68" stop-color="#f53568"/><stop offset="0.837" stop-color="#f53461"/><stop offset="1" stop-color="#f4345c"/></linearGradient>
<linearGradient id="g67" gradientUnits="userSpaceOnUse" x1="198.7" y1="462" x2="516.2" y2="358.8"><stop offset="0" stop-color="#ffffff"/><stop offset="0.063" stop-color="#ffa6d4"/><stop offset="0.13" stop-color="#ff75b2"/><stop offset="0.209" stop-color="#ff5698"/><stop offset="0.313" stop-color="#fd4182"/><stop offset="0.417" stop-color="#f83874"/><stop offset="0.521" stop-color="#f5356b"/><stop offset="0.679" stop-color="#f53461"/><stop offset="0.837" stop-color="#f4345a"/><stop offset="1" stop-color="#f43455"/></linearGradient>
<linearGradient id="g68" gradientUnits="userSpaceOnUse" x1="198.7" y1="462" x2="525.6" y2="370.7"><stop offset="0" stop-color="#ffffff"/><stop offset="0.062" stop-color="#ffa4d0"/><stop offset="0.13" stop-color="#ff73ad"/><stop offset="0.208" stop-color="#ff5592"/><stop offset="0.312" stop-color="#fc417b"/><stop offset="0.417" stop-color="#f7376d"/><stop offset="0.521" stop-color="#f53464"/><stop offset="0.679" stop-color="#f4345a"/><stop offset="0.837" stop-color="#f43453"/><stop offset="1" stop-color="#f4344e"/></linearGradient>
<linearGradient id="g69" gradientUnits="userSpaceOnUse" x1="198.7" y1="462" x2="535.3" y2="383"><stop offset="0" stop-color="#ffffff"/><stop offset="0.062" stop-color="#ffa3cc"/><stop offset="0.13" stop-color="#ff72a7"/><stop offset="0.208" stop-color="#ff548b"/><stop offset="0.312" stop-color="#fc4074"/><stop offset="0.416" stop-color="#f73766"/><stop offset="0.52" stop-color="#f4345d"/><stop offset="0.679" stop-color="#f43453"/><stop offset="0.837" stop-color="#f4344c"/><stop offset="1" stop-color="#f43348"/></linearGradient>
<linearGradient id="g70" gradientUnits="userSpaceOnUse" x1="198.7" y1="462" x2="545.4" y2="395.8"><stop offset="0" stop-color="#ffffff"/><stop offset="0.062" stop-color="#ffa2c8"/><stop offset="0.13" stop-color="#ff70a1"/><stop offset="0.208" stop-color="#ff5385"/><stop offset="0.312" stop-color="#fb406e"/><stop offset="0.416" stop-color="#f7375f"/><stop offset="0.52" stop-color="#f43457"/><stop offset="0.678" stop-color="#f4344d"/><stop offset="0.837" stop-color="#f43346"/><stop offset="1" stop-color="#f33342"/></linearGradient>
<linearGradient id="g71" gradientUnits="userSpaceOnUse" x1="198.7" y1="462" x2="556" y2="409.2"><stop offset="0" stop-color="#ffffff"/><stop offset="0.062" stop-color="#ffa0c4"/><stop offset="0.13" stop-color="#ff6f9b"/><stop offset="0.208" stop-color="#ff527e"/><stop offset="0.311" stop-color="#fb3f67"/><stop offset="0.415" stop-color="#f63659"/><stop offset="0.519" stop-color="#f43450"/><stop offset="0.678" stop-color="#f43347"/><stop offset="0.836" stop-color="#f33341"/><stop offset="1" stop-color="#f3333c"/></linearGradient>
<linearGradient id="g72" gradientUnits="userSpaceOnUse" x1="198.7" y1="462" x2="567" y2="423.3"><stop offset="0" stop-color="#ffffff"/><stop offset="0.062" stop-color="#ff9fbf"/><stop offset="0.13" stop-color="#ff6e96"/><stop offset="0.207" stop-color="#ff5178"/><stop offset="0.311" stop-color="#fb3e61"/><stop offset="0.415" stop-color="#f63653"/><stop offset="0.518" stop-color="#f4334a"/><stop offset="0.677" stop-color="#f33341"/><stop offset="0.836" stop-color="#f3333b"/><stop offset="1" stop-color="#f33337"/></linearGradient>
<linearGradient id="g73" gradientUnits="userSpaceOnUse" x1="198.7" y1="462" x2="578.7" y2="438.1"><stop offset="0" stop-color="#ffffff"/><stop offset="0.062" stop-color="#ff9dbb"/><stop offset="0.129" stop-color="#ff6c90"/><stop offset="0.207" stop-color="#ff5072"/><stop offset="0.311" stop-color="#fa3e5a"/><stop offset="0.414" stop-color="#f6364d"/><stop offset="0.518" stop-color="#f33345"/><stop offset="0.677" stop-color="#f3333c"/><stop offset="0.836" stop-color="#f33336"/><stop offset="1" stop-color="#f33232"/></linearGradient>
<linearGradient id="g74" gradientUnits="userSpaceOnUse" x1="198.7" y1="462" x2="591.1" y2="453.8"><stop offset="0" stop-color="#ffffff"/><stop offset="0.062" stop-color="#ff9bb7"/><stop offset="0.129" stop-color="#ff6b8a"/><stop offset="0.207" stop-color="#ff4f6c"/><stop offset="0.31" stop-color="#fa3d54"/><stop offset="0.414" stop-color="#f63547"/><stop offset="0.517" stop-color="#f3333f"/><stop offset="0.676" stop-color="#f33337"/><stop offset="0.836" stop-color="#f33231"/><stop offset="1" stop-color="#f3322e"/></linearGradient>
<linearGradient id="g75" gradientUnits="userSpaceOnUse" x1="198.7" y1="462" x2="604.2" y2="470.5"><stop offset="0" stop-color="#ffffff"/><stop offset="0.062" stop-color="#ff9ab2"/><stop offset="0.129" stop-color="#ff6984"/><stop offset="0.207" stop-color="#ff4e65"/><stop offset="0.31" stop-color="#fa3d4e"/><stop offset="0.413" stop-color="#f53542"/><stop offset="0.516" stop-color="#f3333a"/><stop offset="0.676" stop-color="#f33232"/><stop offset="0.836" stop-color="#f3322d"/><stop offset="1" stop-color="#f2322a"/></linearGradient>
<linearGradient id="g76" gradientUnits="userSpaceOnUse" x1="198.7" y1="462" x2="618.3" y2="488.4"><stop offset="0" stop-color="#ffffff"/><stop offset="0.062" stop-color="#ff98ad"/><stop offset="0.129" stop-color="#ff687e"/><stop offset="0.206" stop-color="#ff4d5f"/><stop offset="0.309" stop-color="#f93c49"/><stop offset="0.412" stop-color="#f5353c"/><stop offset="0.516" stop-color="#f33335"/><stop offset="0.675" stop-color="#f3322e"/><stop offset="0.835" stop-color="#f2322a"/><stop offset="1" stop-color="#f23227"/></linearGradient>
<linearGradient id="g77" gradientUnits="userSpaceOnUse" x1="198.7" y1="462" x2="623.4" y2="506.6"><stop offset="0" stop-color="#ffffff"/><stop offset="0.063" stop-color="#ff96a8"/><stop offset="0.132" stop-color="#ff6678"/><stop offset="0.211" stop-color="#ff4c59"/><stop offset="0.316" stop-color="#f93c43"/><stop offset="0.422" stop-color="#f53437"/><stop offset="0.527" stop-color="#f33231"/><stop offset="0.683" stop-color="#f2322a"/><stop offset="0.839" stop-color="#f23227"/><stop offset="1" stop-color="#f23226"/></linearGradient>
<linearGradient id="g78" gradientUnits="userSpaceOnUse" x1="198.7" y1="462" x2="589" y2="519.6"><stop offset="0" stop-color="#ffffff"/><stop offset="0.071" stop-color="#ff94a3"/><stop offset="0.149" stop-color="#ff6571"/><stop offset="0.238" stop-color="#ff4b53"/><stop offset="0.356" stop-color="#f83b3d"/><stop offset="0.475" stop-color="#f53432"/><stop offset="0.594" stop-color="#f3322c"/><stop offset="0.728" stop-color="#f23228"/><stop offset="0.862" stop-color="#f23226"/><stop offset="1" stop-color="#f23226"/></linearGradient>
<linearGradient id="g79" gradientUnits="userSpaceOnUse" x1="198.7" y1="462" x2="536.3" y2="526.4"><stop offset="0" stop-color="#ffffff"/><stop offset="0.086" stop-color="#ff929e"/><stop offset="0.178" stop-color="#ff636b"/><stop offset="0.285" stop-color="#fe4a4c"/><stop offset="0.428" stop-color="#f83a38"/><stop offset="0.57" stop-color="#f4342e"/><stop offset="0.713" stop-color="#f23229"/><stop offset="0.808" stop-color="#f23227"/><stop offset="0.902" stop-color="#f23226"/><stop offset="1" stop-color="#f23226"/></linearGradient>
<linearGradient id="g80" gradientUnits="userSpaceOnUse" x1="198.7" y1="462" x2="496" y2="529.5"><stop offset="0" stop-color="#ffffff"/><stop offset="0.1" stop-color="#ff9199"/><stop offset="0.209" stop-color="#ff6265"/><stop offset="0.335" stop-color="#fe4947"/><stop offset="0.502" stop-color="#f83a34"/><stop offset="0.669" stop-color="#f4342a"/><stop offset="0.836" stop-color="#f23227"/><stop offset="0.89" stop-color="#f23226"/><stop offset="1" stop-color="#f23226"/></linearGradient>
<linearGradient id="g81" gradientUnits="userSpaceOnUse" x1="198.7" y1="462" x2="472.7" y2="536.4"><stop offset="0" stop-color="#ffffff"/><stop offset="0.102" stop-color="#ff969b"/><stop offset="0.212" stop-color="#ff6767"/><stop offset="0.34" stop-color="#ff4d48"/><stop offset="0.51" stop-color="#f93d34"/><stop offset="0.68" stop-color="#f5362a"/><stop offset="0.85" stop-color="#f33326"/><stop offset="0.899" stop-color="#f23226"/><stop offset="1" stop-color="#f23226"/></linearGradient>
<linearGradient id="g82" gradientUnits="userSpaceOnUse" x1="198.7" y1="462" x2="436.2" y2="539.2"><stop offset="0" stop-color="#ffffff"/><stop offset="0.104" stop-color="#ff9fa1"/><stop offset="0.216" stop-color="#ff706d"/><stop offset="0.345" stop-color="#ff564d"/><stop offset="0.518" stop-color="#fb4436"/><stop offset="0.69" stop-color="#f63b2c"/><stop offset="0.863" stop-color="#f43727"/><stop offset="0.908" stop-color="#f33627"/><stop offset="0.953" stop-color="#f33527"/><stop offset="1" stop-color="#f33426"/></linearGradient>
<linearGradient id="g83" gradientUnits="userSpaceOnUse" x1="198.7" y1="462" x2="413.9" y2="542"><stop offset="0" stop-color="#ffffff"/><stop offset="0.103" stop-color="#ffa6a5"/><stop offset="0.215" stop-color="#ff7871"/><stop offset="0.345" stop-color="#ff5d50"/><stop offset="0.517" stop-color="#fc4a39"/><stop offset="0.689" stop-color="#f8402d"/><stop offset="0.862" stop-color="#f53b28"/><stop offset="0.907" stop-color="#f43928"/><stop offset="0.953" stop-color="#f43827"/><stop offset="1" stop-color="#f43727"/></linearGradient>
<linearGradient id="g84" gradientUnits="userSpaceOnUse" x1="198.7" y1="462" x2="394.9" y2="544.5"><stop offset="0" stop-color="#ffffff"/><stop offset="0.103" stop-color="#ffaca9"/><stop offset="0.215" stop-color="#ff7f76"/><stop offset="0.344" stop-color="#ff6454"/><stop offset="0.517" stop-color="#fe503b"/><stop offset="0.689" stop-color="#f9452f"/><stop offset="0.861" stop-color="#f63f29"/><stop offset="0.907" stop-color="#f63d29"/><stop offset="0.953" stop-color="#f53c28"/><stop offset="1" stop-color="#f53a28"/></linearGradient>
<linearGradient id="g85" gradientUnits="userSpaceOnUse" x1="198.7" y1="462" x2="378.4" y2="546.6"><stop offset="0" stop-color="#ffffff"/><stop offset="0.103" stop-color="#ffb2ad"/><stop offset="0.215" stop-color="#ff867a"/><stop offset="0.344" stop-color="#ff6a57"/><stop offset="0.516" stop-color="#ff563d"/><stop offset="0.688" stop-color="#fb4a30"/><stop offset="0.86" stop-color="#f7432a"/><stop offset="0.906" stop-color="#f7412a"/><stop offset="0.952" stop-color="#f64029"/><stop offset="1" stop-color="#f63e29"/></linearGradient>
<linearGradient id="g86" gradientUnits="userSpaceOnUse" x1="198.7" y1="462" x2="364" y2="548.4"><stop offset="0" stop-color="#ffffff"/><stop offset="0.103" stop-color="#ffb7b0"/><stop offset="0.215" stop-color="#ff8d7d"/><stop offset="0.344" stop-color="#ff715a"/><stop offset="0.516" stop-color="#ff5c40"/><stop offset="0.687" stop-color="#fc4f32"/><stop offset="0.859" stop-color="#f9482b"/><stop offset="0.906" stop-color="#f8462b"/><stop offset="0.952" stop-color="#f8442a"/><stop offset="1" stop-color="#f7422a"/></linearGradient>
<linearGradient id="g87" gradientUnits="userSpaceOnUse" x1="198.7" y1="462" x2="351.2" y2="550.1"><stop offset="0" stop-color="#ffffff"/><stop offset="0.103" stop-color="#ffbcb3"/><stop offset="0.215" stop-color="#ff9381"/><stop offset="0.343" stop-color="#ff775d"/><stop offset="0.515" stop-color="#ff6242"/><stop offset="0.687" stop-color="#fe5533"/><stop offset="0.859" stop-color="#fa4d2d"/><stop offset="0.905" stop-color="#fa4a2c"/><stop offset="0.952" stop-color="#f9482c"/><stop offset="1" stop-color="#f8462b"/></linearGradient>
<linearGradient id="g88" gradientUnits="userSpaceOnUse" x1="198.7" y1="462" x2="339.8" y2="551.5"><stop offset="0" stop-color="#ffffff"/><stop offset="0.103" stop-color="#ffc1b6"/><stop offset="0.214" stop-color="#ff9984"/><stop offset="0.343" stop-color="#ff7e60"/><stop offset="0.515" stop-color="#ff6844"/><stop offset="0.686" stop-color="#ff5a35"/><stop offset="0.858" stop-color="#fc522e"/><stop offset="0.905" stop-color="#fb4f2d"/><stop offset="0.952" stop-color="#fa4d2d"/><stop offset="1" stop-color="#fa4b2c"/></linearGradient>
<linearGradient id="g89" gradientUnits="userSpaceOnUse" x1="198.7" y1="462" x2="329.5" y2="552.9"><stop offset="0" stop-color="#ffffff"/><stop offset="0.103" stop-color="#ffc5b8"/><stop offset="0.214" stop-color="#ff9f87"/><stop offset="0.343" stop-color="#ff8463"/><stop offset="0.514" stop-color="#ff6e46"/><stop offset="0.686" stop-color="#ff6036"/><stop offset="0.857" stop-color="#fd572f"/><stop offset="0.904" stop-color="#fd552f"/><stop offset="0.951" stop-color="#fc522e"/><stop offset="1" stop-color="#fb502d"/></linearGradient>
<linearGradient id="g90" gradientUnits="userSpaceOnUse" x1="198.7" y1="462" x2="320" y2="554.1"><stop offset="0" stop-color="#ffffff"/><stop offset="0.103" stop-color="#ffc9bb"/><stop offset="0.214" stop-color="#ffa58a"/><stop offset="0.343" stop-color="#ff8a66"/><stop offset="0.514" stop-color="#ff7449"/><stop offset="0.685" stop-color="#ff6638"/><stop offset="0.857" stop-color="#ff5d31"/><stop offset="0.904" stop-color="#fe5a30"/><stop offset="0.951" stop-color="#fe572f"/><stop offset="1" stop-color="#fd552f"/></linearGradient>
<linearGradient id="g91" gradientUnits="userSpaceOnUse" x1="198.7" y1="462" x2="311.3" y2="555.2"><stop offset="0" stop-color="#ffffff"/><stop offset="0.103" stop-color="#ffcdbd"/><stop offset="0.214" stop-color="#ffaa8d"/><stop offset="0.343" stop-color="#ff9069"/><stop offset="0.514" stop-color="#ff7a4b"/><stop offset="0.685" stop-color="#ff6c3a"/><stop offset="0.856" stop-color="#ff6232"/><stop offset="0.904" stop-color="#ff5f31"/><stop offset="0.951" stop-color="#ff5d31"/><stop offset="1" stop-color="#fe5a30"/></linearGradient>
<linearGradient id="g92" gradientUnits="userSpaceOnUse" x1="198.7" y1="462" x2="303.3" y2="556.2"><stop offset="0" stop-color="#ffffff"/><stop offset="0.103" stop-color="#ffd1bf"/><stop offset="0.214" stop-color="#ffb090"/><stop offset="0.342" stop-color="#ff966c"/><stop offset="0.514" stop-color="#ff804d"/><stop offset="0.685" stop-color="#ff723c"/><stop offset="0.856" stop-color="#ff6834"/><stop offset="0.904" stop-color="#ff6533"/><stop offset="0.951" stop-color="#ff6232"/><stop offset="1" stop-color="#ff6031"/></linearGradient>
<linearGradient id="g93" gradientUnits="userSpaceOnUse" x1="198.7" y1="462" x2="295.9" y2="557.2"><stop offset="0" stop-color="#ffffff"/><stop offset="0.103" stop-color="#ffd4c1"/><stop offset="0.214" stop-color="#ffb593"/><stop offset="0.342" stop-color="#ff9c6e"/><stop offset="0.513" stop-color="#ff874f"/><stop offset="0.685" stop-color="#ff783d"/><stop offset="0.856" stop-color="#ff6e35"/><stop offset="0.903" stop-color="#ff6b34"/><stop offset="0.951" stop-color="#ff6834"/><stop offset="1" stop-color="#ff6533"/></linearGradient>
<linearGradient id="g94" gradientUnits="userSpaceOnUse" x1="198.7" y1="462" x2="288.9" y2="558.1"><stop offset="0" stop-color="#ffffff"/><stop offset="0.103" stop-color="#ffd8c3"/><stop offset="0.214" stop-color="#ffba95"/><stop offset="0.342" stop-color="#ffa271"/><stop offset="0.513" stop-color="#ff8d51"/><stop offset="0.684" stop-color="#ff7f3f"/><stop offset="0.855" stop-color="#ff7537"/><stop offset="0.903" stop-color="#ff7136"/><stop offset="0.951" stop-color="#ff6e35"/><stop offset="1" stop-color="#ff6c34"/></linearGradient>
<linearGradient id="g95" gradientUnits="userSpaceOnUse" x1="198.7" y1="462" x2="282.3" y2="558.9"><stop offset="0" stop-color="#ffffff"/><stop offset="0.103" stop-color="#ffdbc5"/><stop offset="0.214" stop-color="#ffbf98"/><stop offset="0.342" stop-color="#ffa873"/><stop offset="0.513" stop-color="#ff9354"/><stop offset="0.684" stop-color="#ff8541"/><stop offset="0.855" stop-color="#ff7b38"/><stop offset="0.903" stop-color="#ff7837"/><stop offset="0.951" stop-color="#ff7537"/><stop offset="1" stop-color="#ff7236"/></linearGradient>
<linearGradient id="g96" gradientUnits="userSpaceOnUse" x1="198.7" y1="462" x2="276.1" y2="559.7"><stop offset="0" stop-color="#ffffff"/><stop offset="0.103" stop-color="#ffdec6"/><stop offset="0.214" stop-color="#ffc49a"/><stop offset="0.342" stop-color="#ffae76"/><stop offset="0.513" stop-color="#ff9a56"/><stop offset="0.684" stop-color="#ff8c43"/><stop offset="0.855" stop-color="#ff823a"/><stop offset="0.903" stop-color="#ff7f39"/><stop offset="0.951" stop-color="#ff7c38"/><stop offset="1" stop-color="#ff7938"/></linearGradient>
<linearGradient id="g97" gradientUnits="userSpaceOnUse" x1="198.7" y1="462" x2="270.2" y2="560.5"><stop offset="0" stop-color="#ffffff"/><stop offset="0.103" stop-color="#ffe1c8"/><stop offset="0.214" stop-color="#ffc99c"/><stop offset="0.342" stop-color="#ffb578"/><stop offset="0.513" stop-color="#ffa158"/><stop offset="0.683" stop-color="#ff9345"/><stop offset="0.854" stop-color="#ff893c"/><stop offset="0.902" stop-color="#ff863b"/><stop offset="0.95" stop-color="#ff833a"/><stop offset="1" stop-color="#ff8039"/></linearGradient>
<linearGradient id="g98" gradientUnits="userSpaceOnUse" x1="198.7" y1="462" x2="264.6" y2="561.2"><stop offset="0" stop-color="#ffffff"/><stop offset="0.102" stop-color="#ffe4ca"/><stop offset="0.213" stop-color="#ffce9f"/><stop offset="0.342" stop-color="#ffbb7b"/><stop offset="0.512" stop-color="#ffa85a"/><stop offset="0.683" stop-color="#ff9b47"/><stop offset="0.854" stop-color="#ff913e"/><stop offset="0.902" stop-color="#ff8d3d"/><stop offset="0.95" stop-color="#ff8a3c"/><stop offset="1" stop-color="#ff873b"/></linearGradient>
<linearGradient id="g99" gradientUnits="userSpaceOnUse" x1="198.7" y1="462" x2="259.2" y2="561.9"><stop offset="0" stop-color="#ffffff"/><stop offset="0.102" stop-color="#ffe7cb"/><stop offset="0.213" stop-color="#ffd3a1"/><stop offset="0.341" stop-color="#ffc17d"/><stop offset="0.512" stop-color="#ffaf5d"/><stop offset="0.683" stop-color="#ffa249"/><stop offset="0.854" stop-color="#ff9940"/><stop offset="0.902" stop-color="#ff953f"/><stop offset="0.95" stop-color="#ff923e"/><stop offset="1" stop-color="#ff8f3d"/></linearGradient>
<linearGradient id="g100" gradientUnits="userSpaceOnUse" x1="198.7" y1="462" x2="254" y2="562.5"><stop offset="0" stop-color="#ffffff"/><stop offset="0.102" stop-color="#ffeacd"/><stop offset="0.213" stop-color="#ffd8a3"/><stop offset="0.341" stop-color="#ffc780"/><stop offset="0.512" stop-color="#ffb75f"/><stop offset="0.683" stop-color="#ffaa4b"/><stop offset="0.853" stop-color="#ffa142"/><stop offset="0.902" stop-color="#ff9e41"/><stop offset="0.95" stop-color="#ff9b40"/><stop offset="1" stop-color="#ff983f"/></linearGradient>
<linearGradient id="g101" gradientUnits="userSpaceOnUse" x1="198.7" y1="462" x2="248.9" y2="563.2"><stop offset="0" stop-color="#ffffff"/><stop offset="0.102" stop-color="#ffedce"/><stop offset="0.213" stop-color="#ffdca6"/><stop offset="0.341" stop-color="#ffce82"/><stop offset="0.512" stop-color="#ffbe62"/><stop offset="0.683" stop-color="#ffb34d"/><stop offset="0.853" stop-color="#ffaa44"/><stop offset="0.902" stop-color="#ffa743"/><stop offset="0.95" stop-color="#ffa442"/><stop offset="1" stop-color="#ffa142"/></linearGradient>
<linearGradient id="g102" gradientUnits="userSpaceOnUse" x1="198.7" y1="462" x2="244" y2="563.8"><stop offset="0" stop-color="#ffffff"/><stop offset="0.102" stop-color="#ffefd0"/><stop offset="0.213" stop-color="#ffe1a8"/><stop offset="0.341" stop-color="#ffd485"/><stop offset="0.512" stop-color="#ffc664"/><stop offset="0.682" stop-color="#ffbc50"/><stop offset="0.853" stop-color="#ffb446"/><stop offset="0.901" stop-color="#ffb046"/><stop offset="0.95" stop-color="#ffad45"/><stop offset="1" stop-color="#ffaa44"/></linearGradient>
<linearGradient id="g103" gradientUnits="userSpaceOnUse" x1="198.7" y1="462" x2="239.2" y2="564.4"><stop offset="0" stop-color="#ffffff"/><stop offset="0.102" stop-color="#fff2d1"/><stop offset="0.213" stop-color="#ffe6aa"/><stop offset="0.341" stop-color="#ffdb88"/><stop offset="0.512" stop-color="#ffcf67"/><stop offset="0.682" stop-color="#ffc552"/><stop offset="0.853" stop-color="#ffbe49"/><stop offset="0.901" stop-color="#ffbb48"/><stop offset="0.95" stop-color="#ffb847"/><stop offset="1" stop-color="#ffb547"/></linearGradient>
<linearGradient id="g104" gradientUnits="userSpaceOnUse" x1="198.7" y1="462" x2="234.6" y2="565"><stop offset="0" stop-color="#ffffff"/><stop offset="0.102" stop-color="#fff5d3"/><stop offset="0.213" stop-color="#ffebac"/><stop offset="0.341" stop-color="#ffe28a"/><stop offset="0.511" stop-color="#ffd869"/><stop offset="0.682" stop-color="#ffcf55"/><stop offset="0.852" stop-color="#ffc94c"/><stop offset="0.901" stop-color="#ffc64b"/><stop offset="0.95" stop-color="#ffc34a"/><stop offset="1" stop-color="#ffc04a"/></linearGradient>
<linearGradient id="g105" gradientUnits="userSpaceOnUse" x1="198.7" y1="462" x2="230" y2="565.6"><stop offset="0" stop-color="#ffffff"/><stop offset="0.102" stop-color="#fff8d4"/><stop offset="0.213" stop-color="#fff0af"/><stop offset="0.341" stop-color="#ffe98d"/><stop offset="0.511" stop-color="#ffe16c"/><stop offset="0.682" stop-color="#ffda57"/><stop offset="0.852" stop-color="#ffd54f"/><stop offset="0.901" stop-color="#ffd24e"/><stop offset="0.95" stop-color="#ffcf4d"/><stop offset="1" stop-color="#ffcd4d"/></linearGradient>
<linearGradient id="g106" gradientUnits="userSpaceOnUse" x1="198.7" y1="462" x2="225.4" y2="566.2"><stop offset="0" stop-color="#ffffff"/><stop offset="0.102" stop-color="#fffad6"/><stop offset="0.213" stop-color="#fff6b1"/><stop offset="0.341" stop-color="#fff090"/><stop offset="0.511" stop-color="#ffeb6f"/><stop offset="0.682" stop-color="#ffe55a"/><stop offset="0.852" stop-color="#ffe152"/><stop offset="0.901" stop-color="#ffdf51"/><stop offset="0.95" stop-color="#ffdd51"/><stop offset="1" stop-color="#ffdb50"/></linearGradient>
<linearGradient id="g107" gradientUnits="userSpaceOnUse" x1="198.7" y1="462" x2="221" y2="566.8"><stop offset="0" stop-color="#ffffff"/><stop offset="0.102" stop-color="#fffdd7"/><stop offset="0.213" stop-color="#fffbb3"/><stop offset="0.341" stop-color="#fff892"/><stop offset="0.511" stop-color="#fff572"/><stop offset="0.681" stop-color="#fff25d"/><stop offset="0.852" stop-color="#fff055"/><stop offset="0.901" stop-color="#ffee55"/><stop offset="0.95" stop-color="#ffec54"/><stop offset="1" stop-color="#ffea54"/></linearGradient>
<linearGradient id="g108" gradientUnits="userSpaceOnUse" x1="198.7" y1="462" x2="216.5" y2="567.3"><stop offset="0" stop-color="#ffffff"/><stop offset="0.102" stop-color="#ffffd8"/><stop offset="0.213" stop-color="#ffffb6"/><stop offset="0.341" stop-color="#ffff95"/><stop offset="0.511" stop-color="#ffff75"/><stop offset="0.681" stop-color="#ffff61"/><stop offset="0.851" stop-color="#ffff59"/><stop offset="0.901" stop-color="#fffd59"/><stop offset="0.95" stop-color="#fffc58"/><stop offset="1" stop-color="#fffa58"/></linearGradient>
<linearGradient id="g109" gradientUnits="userSpaceOnUse" x1="198.7" y1="462" x2="212.1" y2="568"><stop offset="0" stop-color="#ffffff"/><stop offset="0.102" stop-color="#ffffda"/><stop offset="0.213" stop-color="#ffffb8"/><stop offset="0.34" stop-color="#ffff98"/><stop offset="0.51" stop-color="#ffff79"/><stop offset="0.68" stop-color="#ffff64"/><stop offset="0.85" stop-color="#ffff5e"/><stop offset="0.9" stop-color="#ffff5d"/><stop offset="1" stop-color="#ffff5d"/></linearGradient>
<linearGradient id="g110" gradientUnits="userSpaceOnUse" x1="198.7" y1="462" x2="207.7" y2="568.8"><stop offset="0" stop-color="#ffffff"/><stop offset="0.102" stop-color="#ffffdb"/><stop offset="0.212" stop-color="#ffffba"/><stop offset="0.339" stop-color="#ffff9b"/><stop offset="0.509" stop-color="#ffff7c"/><stop offset="0.679" stop-color="#ffff68"/><stop offset="0.849" stop-color="#ffff62"/><stop offset="1" stop-color="#ffff62"/></linearGradient>
<linearGradient id="g111" gradientUnits="userSpaceOnUse" x1="198.7" y1="462" x2="203.2" y2="569.6"><stop offset="0" stop-color="#ffffff"/><stop offset="0.102" stop-color="#ffffdb"/><stop offset="0.212" stop-color="#ffffba"/><stop offset="0.339" stop-color="#ffff9b"/><stop offset="0.508" stop-color="#ffff7b"/><stop offset="0.677" stop-color="#ffff67"/><stop offset="0.847" stop-color="#ffff61"/><stop offset="0.897" stop-color="#ffff61"/><stop offset="0.948" stop-color="#ffff60"/><stop offset="1" stop-color="#ffff60"/></linearGradient>
<linearGradient id="g112" gradientUnits="userSpaceOnUse" x1="198.7" y1="462" x2="198.7" y2="570.3"><stop offset="0" stop-color="#ffffff"/><stop offset="0.101" stop-color="#ffffdb"/><stop offset="0.211" stop-color="#ffffb9"/><stop offset="0.338" stop-color="#ffff99"/><stop offset="0.507" stop-color="#ffff79"/><stop offset="0.676" stop-color="#ffff65"/><stop offset="0.845" stop-color="#ffff5e"/><stop offset="0.896" stop-color="#ffff5d"/><stop offset="1" stop-color="#ffff5d"/></linearGradient>
<linearGradient id="g113" gradientUnits="userSpaceOnUse" x1="198.7" y1="462" x2="194.1" y2="571.1"><stop offset="0" stop-color="#ffffff"/><stop offset="0.101" stop-color="#ffffda"/><stop offset="0.211" stop-color="#ffffb8"/><stop offset="0.337" stop-color="#ffff98"/><stop offset="0.506" stop-color="#ffff78"/><stop offset="0.675" stop-color="#ffff62"/><stop offset="0.843" stop-color="#ffff5b"/><stop offset="0.895" stop-color="#ffff5a"/><stop offset="1" stop-color="#ffff5a"/></linearGradient>
<linearGradient id="g114" gradientUnits="userSpaceOnUse" x1="198.7" y1="462" x2="189.5" y2="571.9"><stop offset="0" stop-color="#ffffff"/><stop offset="0.101" stop-color="#feffda"/><stop offset="0.21" stop-color="#fcffb7"/><stop offset="0.337" stop-color="#faff97"/><stop offset="0.505" stop-color="#f8ff76"/><stop offset="0.673" stop-color="#f6ff60"/><stop offset="0.841" stop-color="#f5ff58"/><stop offset="0.894" stop-color="#f2ff57"/><stop offset="0.946" stop-color="#efff57"/><stop offset="1" stop-color="#ecff57"/></linearGradient>
<linearGradient id="g115" gradientUnits="userSpaceOnUse" x1="198.7" y1="462" x2="184.7" y2="572.7"><stop offset="0" stop-color="#ffffff"/><stop offset="0.101" stop-color="#fbffd9"/><stop offset="0.21" stop-color="#f6ffb6"/><stop offset="0.336" stop-color="#f1ff95"/><stop offset="0.504" stop-color="#ecff74"/><stop offset="0.672" stop-color="#e7ff5e"/><stop offset="0.839" stop-color="#e4ff55"/><stop offset="0.892" stop-color="#e0ff55"/><stop offset="0.945" stop-color="#dcff54"/><stop offset="1" stop-color="#d9ff54"/></linearGradient>
<linearGradient id="g116" gradientUnits="userSpaceOnUse" x1="198.7" y1="462" x2="179.8" y2="573.6"><stop offset="0" stop-color="#ffffff"/><stop offset="0.101" stop-color="#f7ffd8"/><stop offset="0.209" stop-color="#f0ffb5"/><stop offset="0.335" stop-color="#e8ff94"/><stop offset="0.503" stop-color="#e0ff72"/><stop offset="0.67" stop-color="#d9ff5c"/><stop offset="0.838" stop-color="#d3ff53"/><stop offset="0.891" stop-color="#cfff52"/><stop offset="0.945" stop-color="#cbff51"/><stop offset="1" stop-color="#c7ff51"/></linearGradient>
<linearGradient id="g117" gradientUnits="userSpaceOnUse" x1="198.7" y1="462" x2="174.8" y2="574.4"><stop offset="0" stop-color="#ffffff"/><stop offset="0.1" stop-color="#f4ffd8"/><stop offset="0.209" stop-color="#eaffb4"/><stop offset="0.334" stop-color="#e0ff93"/><stop offset="0.501" stop-color="#d4ff71"/><stop offset="0.669" stop-color="#cbff5a"/><stop offset="0.836" stop-color="#c4ff50"/><stop offset="0.89" stop-color="#bfff50"/><stop offset="0.944" stop-color="#baff4f"/><stop offset="1" stop-color="#b6ff4e"/></linearGradient>
<linearGradient id="g118" gradientUnits="userSpaceOnUse" x1="198.7" y1="462" x2="169.6" y2="575.3"><stop offset="0" stop-color="#ffffff"/><stop offset="0.1" stop-color="#f1ffd7"/><stop offset="0.208" stop-color="#e4ffb3"/><stop offset="0.333" stop-color="#d7ff91"/><stop offset="0.5" stop-color="#c8ff6f"/><stop offset="0.667" stop-color="#bdff58"/><stop offset="0.834" stop-color="#b4ff4e"/><stop offset="0.889" stop-color="#afff4d"/><stop offset="0.943" stop-color="#aaff4c"/><stop offset="1" stop-color="#a5ff4c"/></linearGradient>
<linearGradient id="g119" gradientUnits="userSpaceOnUse" x1="198.7" y1="462" x2="164.2" y2="576.3"><stop offset="0" stop-color="#ffffff"/><stop offset="0.1" stop-color="#eeffd7"/><stop offset="0.208" stop-color="#ddffb2"/><stop offset="0.333" stop-color="#ceff90"/><stop offset="0.499" stop-color="#bdff6d"/><stop offset="0.665" stop-color="#b0ff56"/><stop offset="0.832" stop-color="#a6ff4c"/><stop offset="0.887" stop-color="#a0ff4b"/><stop offset="0.943" stop-color="#9bff4a"/><stop offset="1" stop-color="#95ff49"/></linearGradient>
<linearGradient id="g120" gradientUnits="userSpaceOnUse" x1="198.7" y1="462" x2="158.6" y2="577.2"><stop offset="0" stop-color="#ffffff"/><stop offset="0.1" stop-color="#eaffd6"/><stop offset="0.207" stop-color="#d7ffb1"/><stop offset="0.332" stop-color="#c5ff8e"/><stop offset="0.498" stop-color="#b2ff6b"/><stop offset="0.664" stop-color="#a3ff54"/><stop offset="0.83" stop-color="#98ff49"/><stop offset="0.886" stop-color="#92ff48"/><stop offset="0.942" stop-color="#8cff48"/><stop offset="1" stop-color="#87ff47"/></linearGradient>
<linearGradient id="g121" gradientUnits="userSpaceOnUse" x1="198.7" y1="462" x2="152.7" y2="578.2"><stop offset="0" stop-color="#ffffff"/><stop offset="0.099" stop-color="#e7ffd5"/><stop offset="0.207" stop-color="#d1ffb0"/><stop offset="0.331" stop-color="#bcff8d"/><stop offset="0.497" stop-color="#a6ff6a"/><stop offset="0.662" stop-color="#96ff52"/><stop offset="0.828" stop-color="#8aff47"/><stop offset="0.884" stop-color="#84ff46"/><stop offset="0.941" stop-color="#7eff45"/><stop offset="1" stop-color="#78fe44"/></linearGradient>
<linearGradient id="g122" gradientUnits="userSpaceOnUse" x1="198.7" y1="462" x2="146.5" y2="579.2"><stop offset="0" stop-color="#ffffff"/><stop offset="0.099" stop-color="#e3ffd5"/><stop offset="0.206" stop-color="#caffaf"/><stop offset="0.33" stop-color="#b3ff8b"/><stop offset="0.495" stop-color="#9bff68"/><stop offset="0.66" stop-color="#89ff50"/><stop offset="0.826" stop-color="#7dff45"/><stop offset="0.883" stop-color="#77fe44"/><stop offset="0.941" stop-color="#71fd43"/><stop offset="1" stop-color="#6bfc42"/></linearGradient>
<linearGradient id="g123" gradientUnits="userSpaceOnUse" x1="198.7" y1="462" x2="140" y2="580.3"><stop offset="0" stop-color="#ffffff"/><stop offset="0.099" stop-color="#dfffd4"/><stop offset="0.206" stop-color="#c3ffae"/><stop offset="0.329" stop-color="#aaff8a"/><stop offset="0.494" stop-color="#90ff66"/><stop offset="0.659" stop-color="#7dff4e"/><stop offset="0.824" stop-color="#71fd43"/><stop offset="0.882" stop-color="#6afb42"/><stop offset="0.94" stop-color="#64fa41"/><stop offset="1" stop-color="#5ff940"/></linearGradient>
<linearGradient id="g124" gradientUnits="userSpaceOnUse" x1="198.7" y1="462" x2="133" y2="581.4"><stop offset="0" stop-color="#ffffff"/><stop offset="0.099" stop-color="#dbffd3"/><stop offset="0.205" stop-color="#bcffac"/><stop offset="0.329" stop-color="#a0ff88"/><stop offset="0.493" stop-color="#85ff64"/><stop offset="0.657" stop-color="#71ff4c"/><stop offset="0.821" stop-color="#65fa41"/><stop offset="0.88" stop-color="#5ff940"/><stop offset="0.939" stop-color="#59f840"/><stop offset="1" stop-color="#54f73f"/></linearGradient>
<linearGradient id="g125" gradientUnits="userSpaceOnUse" x1="198.7" y1="462" x2="125.7" y2="582.6"><stop offset="0" stop-color="#ffffff"/><stop offset="0.098" stop-color="#d7ffd3"/><stop offset="0.205" stop-color="#b5ffab"/><stop offset="0.328" stop-color="#97ff86"/><stop offset="0.492" stop-color="#7aff62"/><stop offset="0.656" stop-color="#66fd4b"/><stop offset="0.819" stop-color="#5af840"/><stop offset="0.879" stop-color="#54f73f"/><stop offset="0.939" stop-color="#50f63e"/><stop offset="1" stop-color="#4cf53e"/></linearGradient>
<linearGradient id="g126" gradientUnits="userSpaceOnUse" x1="198.7" y1="462" x2="117.7" y2="583.8"><stop offset="0" stop-color="#ffffff"/><stop offset="0.098" stop-color="#d3ffd2"/><stop offset="0.204" stop-color="#adffaa"/><stop offset="0.327" stop-color="#8dff85"/><stop offset="0.49" stop-color="#6eff61"/><stop offset="0.654" stop-color="#5bfb49"/><stop offset="0.817" stop-color="#51f63e"/><stop offset="0.878" stop-color="#4cf53e"/><stop offset="0.938" stop-color="#4af53d"/><stop offset="1" stop-color="#4af53d"/></linearGradient>
<linearGradient id="g127" gradientUnits="userSpaceOnUse" x1="198.7" y1="462" x2="111.7" y2="583.9"><stop offset="0" stop-color="#ffffff"/><stop offset="0.099" stop-color="#cfffd1"/><stop offset="0.206" stop-color="#a7ffa8"/><stop offset="0.329" stop-color="#85ff83"/><stop offset="0.494" stop-color="#66ff5f"/><stop offset="0.658" stop-color="#53fa48"/><stop offset="0.823" stop-color="#4bf53d"/><stop offset="0.881" stop-color="#4af53d"/><stop offset="1" stop-color="#4af53d"/></linearGradient>
<linearGradient id="g128" gradientUnits="userSpaceOnUse" x1="198.7" y1="462" x2="107.7" y2="583.9"><stop offset="0" stop-color="#ffffff"/><stop offset="0.097" stop-color="#ceffd2"/><stop offset="0.202" stop-color="#a5ffaa"/><stop offset="0.323" stop-color="#82ff85"/><stop offset="0.484" stop-color="#63ff61"/><stop offset="0.646" stop-color="#50f949"/><stop offset="0.807" stop-color="#4af53e"/><stop offset="0.871" stop-color="#4af53d"/><stop offset="1" stop-color="#4af53d"/></linearGradient>
<linearGradient id="g129" gradientUnits="userSpaceOnUse" x1="198.7" y1="462" x2="100.1" y2="586.4"><stop offset="0" stop-color="#ffffff"/><stop offset="0.088" stop-color="#ceffd5"/><stop offset="0.184" stop-color="#a6ffaf"/><stop offset="0.294" stop-color="#83ff8c"/><stop offset="0.442" stop-color="#63ff69"/><stop offset="0.589" stop-color="#51fa50"/><stop offset="0.736" stop-color="#4af543"/><stop offset="0.823" stop-color="#4af53d"/><stop offset="1" stop-color="#4af53d"/></linearGradient>
<linearGradient id="g130" gradientUnits="userSpaceOnUse" x1="198.7" y1="462" x2="90.3" y2="587.6"><stop offset="0" stop-color="#ffffff"/><stop offset="0.079" stop-color="#cfffd9"/><stop offset="0.165" stop-color="#a7ffb7"/><stop offset="0.264" stop-color="#84ff95"/><stop offset="0.396" stop-color="#64ff73"/><stop offset="0.528" stop-color="#51fa5b"/><stop offset="0.659" stop-color="#4bf54b"/><stop offset="0.772" stop-color="#4af53f"/><stop offset="0.884" stop-color="#4af53d"/><stop offset="1" stop-color="#4af53d"/></linearGradient>
<linearGradient id="g131" gradientUnits="userSpaceOnUse" x1="198.7" y1="462" x2="79.7" y2="588.8"><stop offset="0" stop-color="#ffffff"/><stop offset="0.071" stop-color="#d0ffdd"/><stop offset="0.148" stop-color="#a8ffbd"/><stop offset="0.237" stop-color="#85ff9e"/><stop offset="0.355" stop-color="#65ff7d"/><stop offset="0.474" stop-color="#52fb65"/><stop offset="0.592" stop-color="#4bf654"/><stop offset="0.727" stop-color="#4af543"/><stop offset="0.861" stop-color="#4af53d"/><stop offset="1" stop-color="#4af53d"/></linearGradient>
<linearGradient id="g132" gradientUnits="userSpaceOnUse" x1="198.7" y1="462" x2="68.2" y2="589.7"><stop offset="0" stop-color="#ffffff"/><stop offset="0.064" stop-color="#d1ffe0"/><stop offset="0.134" stop-color="#a9ffc3"/><stop offset="0.214" stop-color="#86ffa6"/><stop offset="0.32" stop-color="#66ff87"/><stop offset="0.427" stop-color="#52fb6f"/><stop offset="0.534" stop-color="#4bf65e"/><stop offset="0.688" stop-color="#4af547"/><stop offset="0.842" stop-color="#4af53d"/><stop offset="1" stop-color="#4af53d"/></linearGradient>
<linearGradient id="g133" gradientUnits="userSpaceOnUse" x1="198.7" y1="462" x2="56.2" y2="590.3"><stop offset="0" stop-color="#ffffff"/><stop offset="0.058" stop-color="#d1ffe4"/><stop offset="0.121" stop-color="#aaffc9"/><stop offset="0.193" stop-color="#87ffae"/><stop offset="0.29" stop-color="#67ff90"/><stop offset="0.387" stop-color="#53fb79"/><stop offset="0.484" stop-color="#4cf668"/><stop offset="0.654" stop-color="#4bf54b"/><stop offset="0.824" stop-color="#4af53d"/><stop offset="1" stop-color="#4af53d"/></linearGradient>
<linearGradient id="g134" gradientUnits="userSpaceOnUse" x1="198.7" y1="462" x2="43.7" y2="590.2"><stop offset="0" stop-color="#ffffff"/><stop offset="0.053" stop-color="#d2ffe6"/><stop offset="0.11" stop-color="#abffce"/><stop offset="0.176" stop-color="#88ffb5"/><stop offset="0.264" stop-color="#67ff99"/><stop offset="0.352" stop-color="#53fc82"/><stop offset="0.44" stop-color="#4cf771"/><stop offset="0.625" stop-color="#4bf650"/><stop offset="0.81" stop-color="#4af53e"/><stop offset="1" stop-color="#4af53d"/></linearGradient>
<linearGradient id="g135" gradientUnits="userSpaceOnUse" x1="198.7" y1="462" x2="31.6" y2="588.9"><stop offset="0" stop-color="#ffffff"/><stop offset="0.049" stop-color="#d2ffe9"/><stop offset="0.101" stop-color="#acffd3"/><stop offset="0.162" stop-color="#89ffbc"/><stop offset="0.243" stop-color="#68ffa1"/><stop offset="0.323" stop-color="#54fc8b"/><stop offset="0.404" stop-color="#4cf77b"/><stop offset="0.601" stop-color="#4bf655"/><stop offset="0.797" stop-color="#4af540"/><stop offset="1" stop-color="#4af53d"/></linearGradient>
<linearGradient id="g136" gradientUnits="userSpaceOnUse" x1="198.7" y1="462" x2="21.5" y2="585.2"><stop offset="0" stop-color="#ffffff"/><stop offset="0.045" stop-color="#d3ffeb"/><stop offset="0.094" stop-color="#acffd7"/><stop offset="0.151" stop-color="#8affc2"/><stop offset="0.227" stop-color="#69ffa9"/><stop offset="0.302" stop-color="#54fd94"/><stop offset="0.378" stop-color="#4df884"/><stop offset="0.583" stop-color="#4bf65a"/><stop offset="0.788" stop-color="#4af543"/><stop offset="1" stop-color="#4af53d"/></linearGradient>
<linearGradient id="g137" gradientUnits="userSpaceOnUse" x1="198.7" y1="462" x2="13.8" y2="579.3"><stop offset="0" stop-color="#ffffff"/><stop offset="0.043" stop-color="#d3ffee"/><stop offset="0.09" stop-color="#adffdb"/><stop offset="0.144" stop-color="#8affc8"/><stop offset="0.216" stop-color="#69ffb1"/><stop offset="0.287" stop-color="#55fd9d"/><stop offset="0.359" stop-color="#4df88e"/><stop offset="0.571" stop-color="#4bf661"/><stop offset="0.782" stop-color="#4af548"/><stop offset="1" stop-color="#4af53d"/></linearGradient>
<linearGradient id="g138" gradientUnits="userSpaceOnUse" x1="198.7" y1="462" x2="9.1" y2="571.5"><stop offset="0" stop-color="#ffffff"/><stop offset="0.042" stop-color="#d4fff0"/><stop offset="0.087" stop-color="#aeffdf"/><stop offset="0.139" stop-color="#8bffce"/><stop offset="0.209" stop-color="#6affb8"/><stop offset="0.278" stop-color="#55fda5"/><stop offset="0.348" stop-color="#4ef897"/><stop offset="0.563" stop-color="#4cf768"/><stop offset="0.778" stop-color="#4bf54e"/><stop offset="1" stop-color="#4af53f"/></linearGradient>
<linearGradient id="g139" gradientUnits="userSpaceOnUse" x1="198.7" y1="462" x2="4.5" y2="563.5"><stop offset="0" stop-color="#ffffff"/><stop offset="0.04" stop-color="#d4fff2"/><stop offset="0.084" stop-color="#aeffe3"/><stop offset="0.135" stop-color="#8cffd3"/><stop offset="0.202" stop-color="#6bffbf"/><stop offset="0.27" stop-color="#56feae"/><stop offset="0.337" stop-color="#4ef9a0"/><stop offset="0.556" stop-color="#4cf770"/><stop offset="0.775" stop-color="#4bf654"/><stop offset="1" stop-color="#4af543"/></linearGradient>
<linearGradient id="g140" gradientUnits="userSpaceOnUse" x1="198.7" y1="462" x2="1.9" y2="554.6"><stop offset="0" stop-color="#ffffff"/><stop offset="0.04" stop-color="#d4fff4"/><stop offset="0.083" stop-color="#afffe7"/><stop offset="0.132" stop-color="#8cffd8"/><stop offset="0.198" stop-color="#6bffc6"/><stop offset="0.264" stop-color="#56feb6"/><stop offset="0.33" stop-color="#4ef9a9"/><stop offset="0.551" stop-color="#4cf779"/><stop offset="0.772" stop-color="#4bf65c"/><stop offset="1" stop-color="#4af54a"/></linearGradient>
<linearGradient id="g141" gradientUnits="userSpaceOnUse" x1="198.7" y1="462" x2="0.7" y2="545.2"><stop offset="0" stop-color="#ffffff"/><stop offset="0.039" stop-color="#d5fff6"/><stop offset="0.081" stop-color="#afffea"/><stop offset="0.13" stop-color="#8dffdd"/><stop offset="0.196" stop-color="#6cffcd"/><stop offset="0.261" stop-color="#56febe"/><stop offset="0.326" stop-color="#4ff9b1"/><stop offset="0.548" stop-color="#4df883"/><stop offset="0.771" stop-color="#4cf665"/><stop offset="1" stop-color="#4bf652"/></linearGradient>
<linearGradient id="g142" gradientUnits="userSpaceOnUse" x1="198.7" y1="462" x2="0.1" y2="535.8"><stop offset="0" stop-color="#ffffff"/><stop offset="0.039" stop-color="#d5fff7"/><stop offset="0.081" stop-color="#b0ffee"/><stop offset="0.129" stop-color="#8effe2"/><stop offset="0.194" stop-color="#6cffd3"/><stop offset="0.258" stop-color="#57ffc6"/><stop offset="0.323" stop-color="#4ffaba"/><stop offset="0.546" stop-color="#4df88c"/><stop offset="0.77" stop-color="#4cf76f"/><stop offset="1" stop-color="#4bf65b"/></linearGradient>
<linearGradient id="g143" gradientUnits="userSpaceOnUse" x1="198.7" y1="462" x2="1" y2="526.2"><stop offset="0" stop-color="#ffffff"/><stop offset="0.039" stop-color="#d6fff9"/><stop offset="0.081" stop-color="#b0fff1"/><stop offset="0.129" stop-color="#8effe7"/><stop offset="0.193" stop-color="#6dffda"/><stop offset="0.258" stop-color="#57ffcd"/><stop offset="0.322" stop-color="#4ffac3"/><stop offset="0.546" stop-color="#4ef897"/><stop offset="0.77" stop-color="#4cf77a"/><stop offset="1" stop-color="#4cf666"/></linearGradient>
<linearGradient id="g144" gradientUnits="userSpaceOnUse" x1="198.7" y1="462" x2="1.8" y2="517"><stop offset="0" stop-color="#ffffff"/><stop offset="0.039" stop-color="#d6fffb"/><stop offset="0.08" stop-color="#b1fff4"/><stop offset="0.129" stop-color="#8fffec"/><stop offset="0.193" stop-color="#6dffe0"/><stop offset="0.257" stop-color="#57ffd5"/><stop offset="0.322" stop-color="#50facc"/><stop offset="0.546" stop-color="#4ef9a1"/><stop offset="0.769" stop-color="#4df885"/><stop offset="1" stop-color="#4cf771"/></linearGradient>
<linearGradient id="g145" gradientUnits="userSpaceOnUse" x1="198.7" y1="462" x2="2.7" y2="508"><stop offset="0" stop-color="#ffffff"/><stop offset="0.039" stop-color="#d6fffc"/><stop offset="0.08" stop-color="#b1fff7"/><stop offset="0.129" stop-color="#8ffff0"/><stop offset="0.193" stop-color="#6dffe6"/><stop offset="0.257" stop-color="#58ffdc"/><stop offset="0.321" stop-color="#50fbd4"/><stop offset="0.545" stop-color="#4ef9ac"/><stop offset="0.769" stop-color="#4df891"/><stop offset="1" stop-color="#4cf77d"/></linearGradient>
<linearGradient id="g146" gradientUnits="userSpaceOnUse" x1="198.7" y1="462" x2="4.6" y2="499"><stop offset="0" stop-color="#ffffff"/><stop offset="0.039" stop-color="#d6fffe"/><stop offset="0.081" stop-color="#b2fffa"/><stop offset="0.129" stop-color="#90fff5"/><stop offset="0.194" stop-color="#6effed"/><stop offset="0.258" stop-color="#58ffe4"/><stop offset="0.323" stop-color="#50fbdd"/><stop offset="0.546" stop-color="#4ffab7"/><stop offset="0.77" stop-color="#4ef99d"/><stop offset="1" stop-color="#4df88a"/></linearGradient>
<linearGradient id="g147" gradientUnits="userSpaceOnUse" x1="198.7" y1="462" x2="6.5" y2="490.4"><stop offset="0" stop-color="#ffffff"/><stop offset="0.039" stop-color="#d7ffff"/><stop offset="0.081" stop-color="#b2fffd"/><stop offset="0.13" stop-color="#90fff9"/><stop offset="0.195" stop-color="#6efff3"/><stop offset="0.259" stop-color="#59ffec"/><stop offset="0.324" stop-color="#51fce6"/><stop offset="0.547" stop-color="#4ffac3"/><stop offset="0.77" stop-color="#4ef9aa"/><stop offset="1" stop-color="#4ef898"/></linearGradient>
<linearGradient id="g148" gradientUnits="userSpaceOnUse" x1="198.7" y1="462" x2="8.3" y2="482"><stop offset="0" stop-color="#ffffff"/><stop offset="0.039" stop-color="#d7ffff"/><stop offset="0.081" stop-color="#b3ffff"/><stop offset="0.13" stop-color="#91fffe"/><stop offset="0.195" stop-color="#6ffff9"/><stop offset="0.26" stop-color="#59fff3"/><stop offset="0.326" stop-color="#51fcee"/><stop offset="0.548" stop-color="#50fbce"/><stop offset="0.771" stop-color="#4ffab8"/><stop offset="1" stop-color="#4ef9a6"/></linearGradient>
<linearGradient id="g149" gradientUnits="userSpaceOnUse" x1="198.7" y1="462" x2="10.1" y2="473.9"><stop offset="0" stop-color="#ffffff"/><stop offset="0.039" stop-color="#d7ffff"/><stop offset="0.082" stop-color="#b3ffff"/><stop offset="0.131" stop-color="#91ffff"/><stop offset="0.196" stop-color="#6fffff"/><stop offset="0.261" stop-color="#59fffb"/><stop offset="0.327" stop-color="#51fcf7"/><stop offset="0.549" stop-color="#50fbda"/><stop offset="0.771" stop-color="#4ffac5"/><stop offset="1" stop-color="#4ffab5"/></linearGradient>
<linearGradient id="g150" gradientUnits="userSpaceOnUse" x1="198.7" y1="462" x2="11.8" y2="465.9"><stop offset="0" stop-color="#ffffff"/><stop offset="0.039" stop-color="#d8ffff"/><stop offset="0.082" stop-color="#b4ffff"/><stop offset="0.131" stop-color="#92ffff"/><stop offset="0.197" stop-color="#70ffff"/><stop offset="0.263" stop-color="#5affff"/><stop offset="0.328" stop-color="#52fdff"/><stop offset="0.55" stop-color="#51fce7"/><stop offset="0.772" stop-color="#50fbd4"/><stop offset="1" stop-color="#4ffac5"/></linearGradient>
<clipPath id="cp"><rect x="1045.5" y="145.0" width="693.0" height="694.0"/></clipPath>
<filter id="bl" x="-5%" y="-5%" width="110%" height="110%"><feGaussianBlur stdDeviation="3.5"/></filter>
<linearGradient id="v17" x1="0" y1="0" x2="0" y2="1"><stop offset="0" stop-color="#929292"/><stop offset="0.12" stop-color="#848484"/><stop offset="1" stop-color="#585858"/></linearGradient>
<linearGradient id="v18" x1="0" y1="0" x2="0" y2="1"><stop offset="0" stop-color="#2c2c2b"/><stop offset="1" stop-color="#2c2c2b"/></linearGradient>
<clipPath id="thc"><rect x="0" y="866" width="1508" height="49"/></clipPath>
<linearGradient id="v19" x1="0" y1="0" x2="0" y2="1"><stop offset="0" stop-color="#a2a2a2"/><stop offset="1" stop-color="#6a6a6a"/></linearGradient>
<linearGradient id="v20" x1="0" y1="0" x2="0" y2="1"><stop offset="0" stop-color="#3c3c3b"/><stop offset="1" stop-color="#30302f"/></linearGradient>
<linearGradient id="v21" x1="0" y1="0" x2="0" y2="1"><stop offset="0" stop-color="#9a9a9a"/><stop offset="1" stop-color="#7a7a7a"/></linearGradient>
<linearGradient id="v22" x1="0" y1="0" x2="0" y2="1"><stop offset="0" stop-color="#8a8a8a"/><stop offset="1" stop-color="#5a5a5a"/></linearGradient>
<linearGradient id="v23" x1="0" y1="0" x2="0" y2="1"><stop offset="0" stop-color="#a8a8a8"/><stop offset="0.5" stop-color="#a0a0a0"/><stop offset="0.5" stop-color="#7a7a7a"/><stop offset="1" stop-color="#8a8a8a"/></linearGradient>
<linearGradient id="v24" x1="0" y1="0" x2="0" y2="1"><stop offset="0" stop-color="#7c7c7c"/><stop offset="1" stop-color="#a6a6a6"/></linearGradient>
<linearGradient id="v25" x1="0" y1="0" x2="0" y2="1"><stop offset="0" stop-color="#2c2c2b"/><stop offset="1" stop-color="#3c3c3b"/></linearGradient>
<linearGradient id="v26" x1="0" y1="0" x2="0" y2="1"><stop offset="0" stop-color="#a6a6a6"/><stop offset="1" stop-color="#6e6e6e"/></linearGradient></defs>
<rect x="0" y="0" width="1810" height="37" fill="#272726"/>
<rect x="0" y="37" width="1810" height="2.2" fill="#3a3a39"/>
<rect x="0" y="37" width="1.8" height="888" fill="#242423"/>
<rect x="1808" y="37" width="2" height="831" fill="#262625"/>
<path d="M0 0H172V1Q172 3.5 169 3.5H3Q1 3.5 1 1z" fill="#e0261c"/>
<path d="M0 8H23Q26 8 26 11V31Q26 34 23 34H0z" fill="url(#v1)" stroke="#b0b0b0" stroke-width="1"/>
<circle cx="13" cy="21" r="9" fill="url(#v2)"/>
<path d="M10.5 16.3L15.4 21L10.5 25.7z" fill="#fff"/>
<path d="M28.5 37V12Q28.5 8.5 32 8.5H111Q114.5 8.5 114.5 12V37" fill="url(#v3)" stroke="#8c8c8c" stroke-width="1"/>
<path d="M83.5 9L83.5 37" stroke="#8c8c8c" stroke-width="1"/>
<text x="34" y="27" font-size="11" fill="#e6e6e6" textLength="44" lengthAdjust="spacingAndGlyphs">History 1</text>
<circle cx="98" cy="23" r="8" fill="#3c3c3b"/>
<path d="M95 24H102M98.5 20.5V27.5" stroke="#8a8a8a" stroke-width="1" fill="none"/>
<path d="M1361 36V11Q1361 8 1364 8H1480.5Q1483.5 8 1483.5 11V36z" fill="url(#v4)"/>
<path d="M1361 36V11Q1361 8 1364 8H1366V36z" fill="#e6e01e"/>
<text x="1368.5" y="19.5" font-size="10.5" fill="#f0f0f0" textLength="77" lengthAdjust="spacingAndGlyphs">Simulated Meter</text>
<text x="1368.5" y="32.8" font-size="10.5" fill="#f0f0f0" textLength="48" lengthAdjust="spacingAndGlyphs">Test Mode</text>
<circle cx="1468.0" cy="22.3" r="8.5" fill="url(#v5)"/>
<path d="M1463.0 20.3H1473.0L1468.0 25.8z" fill="#fff"/>
<path d="M1489 36V11Q1489 8 1492 8H1608.5Q1611.5 8 1611.5 11V36z" fill="url(#v6)"/>
<path d="M1489 36V11Q1489 8 1492 8H1494V36z" fill="#e6e01e"/>
<text x="1496.5" y="19.5" font-size="10.5" fill="#f0f0f0" textLength="31.5" lengthAdjust="spacingAndGlyphs">Source</text>
<circle cx="1596.0" cy="22.3" r="8.5" fill="url(#v7)"/>
<path d="M1591.0 20.3H1601.0L1596.0 25.8z" fill="#fff"/>
<path d="M1617.5 36V11Q1617.5 8 1620.5 8H1749.5Q1752.5 8 1752.5 11V36z" fill="url(#v8)"/>
<path d="M1617.5 36V11Q1617.5 8 1620.5 8H1622.5V36z" fill="#e6e01e"/>
<text x="1625" y="19.5" font-size="10.5" fill="#f0f0f0" textLength="100.5" lengthAdjust="spacingAndGlyphs">Direct Display Control</text>
<circle cx="1737.0" cy="22.3" r="8.5" fill="url(#v9)"/>
<path d="M1732.0 20.3H1742.0L1737.0 25.8z" fill="#fff"/>
<rect x="1756" y="8.5" width="30.5" height="25.5" fill="url(#v10)" rx="3" stroke="#b4b4b4" stroke-width="1"/>
<rect x="1788.5" y="8.5" width="26" height="25.5" fill="url(#v10)" rx="3" stroke="#b4b4b4" stroke-width="1"/>
<circle cx="1771" cy="21.3" r="9" fill="url(#v11)"/>
<circle cx="1801" cy="21.3" r="9" fill="url(#v12)"/>
<path d="M1777.28 21.78L1776.99 23.26L1775.1 23.38L1774.49 24.3L1775.1 26.08L1773.85 26.92L1772.43 25.67L1771.35 25.89L1770.52 27.58L1769.04 27.29L1768.92 25.4L1768 24.79L1766.22 25.4L1765.38 24.15L1766.63 22.73L1766.41 21.65L1764.72 20.82L1765.01 19.34L1766.9 19.22L1767.51 18.3L1766.9 16.52L1768.15 15.68L1769.57 16.93L1770.65 16.71L1771.48 15.02L1772.96 15.31L1773.08 17.2L1774 17.81L1775.78 17.2L1776.62 18.45L1775.37 19.87L1775.59 20.95z" fill="#e8e8e8"/>
<circle cx="1771" cy="21.3" r="2.6" fill="#707070"/>
<path d="M1803.5 16L1797.5 21.3L1803.5 26.6z" fill="#fff"/>
<text x="66.4" y="86.9" font-size="39.5" fill="#ffffff" textLength="243.6" lengthAdjust="spacingAndGlyphs" stroke="#343433" stroke-width="1.1">ColorChecker</text>
<text x="96.5" y="126.6" font-size="16" fill="#ececec" textLength="492" lengthAdjust="spacingAndGlyphs">Press the read series button to measure the ColorChecker response</text>
<rect x="87.2" y="256.7" width="166.2" height="162.7" fill="#282827"/>
<path d="M87.2 365.5L253.4 365.5" stroke="#8a8a8a" stroke-width="1.2"/>
<path d="M87.2 311.8L253.4 311.8" stroke="#8a8a8a" stroke-width="1.2"/>
<rect x="87.2" y="256.7" width="166.2" height="162.7" fill="none" stroke="#b4b4b4" stroke-width="1.3"/>
<path d="M87.2 257.3L253.4 257.3" stroke="#909090" stroke-width="2.4"/>
<path d="M81.7 419.4L87.2 419.4" stroke="#d0d0d0" stroke-width="1.3"/>
<text x="80.6" y="426.42" font-size="14.5" fill="#d4d4d4" text-anchor="end">0</text>
<path d="M81.7 365.5L87.2 365.5" stroke="#d0d0d0" stroke-width="1.3"/>
<text x="80.6" y="371.12" font-size="14.5" fill="#d4d4d4" text-anchor="end">5</text>
<path d="M81.7 311.8L87.2 311.8" stroke="#d0d0d0" stroke-width="1.3"/>
<text x="80.6" y="317.42" font-size="14.5" fill="#d4d4d4" text-anchor="end">10</text>
<path d="M81.7 256.9L87.2 256.9" stroke="#d0d0d0" stroke-width="1.3"/>
<text x="80.6" y="262.52" font-size="14.5" fill="#d4d4d4" text-anchor="end">15</text>
<path d="M87.2 419.4L87.2 425.9" stroke="#d0d0d0" stroke-width="1.3"/>
<path d="M253.4 419.4L253.4 425.9" stroke="#d0d0d0" stroke-width="1.3"/>
<text x="159.2" y="251.3" font-size="14" fill="#d4d4d4" text-anchor="middle">Delta L</text>
<text x="170.4" y="436.3" font-size="14" fill="#d4d4d4" text-anchor="middle" textLength="35.5" lengthAdjust="spacingAndGlyphs">Black</text>
<rect x="308.6" y="256.7" width="166.2" height="162.7" fill="#282827"/>
<path d="M308.6 365.5L474.8 365.5" stroke="#8a8a8a" stroke-width="1.2"/>
<path d="M308.6 311.8L474.8 311.8" stroke="#8a8a8a" stroke-width="1.2"/>
<rect x="308.6" y="256.7" width="166.2" height="162.7" fill="none" stroke="#b4b4b4" stroke-width="1.3"/>
<path d="M308.6 257.3L474.8 257.3" stroke="#909090" stroke-width="2.4"/>
<path d="M303.1 419.4L308.6 419.4" stroke="#d0d0d0" stroke-width="1.3"/>
<text x="302" y="426.42" font-size="14.5" fill="#d4d4d4" text-anchor="end">0</text>
<path d="M303.1 365.5L308.6 365.5" stroke="#d0d0d0" stroke-width="1.3"/>
<text x="302" y="371.12" font-size="14.5" fill="#d4d4d4" text-anchor="end">5</text>
<path d="M303.1 311.8L308.6 311.8" stroke="#d0d0d0" stroke-width="1.3"/>
<text x="302" y="317.42" font-size="14.5" fill="#d4d4d4" text-anchor="end">10</text>
<path d="M303.1 256.9L308.6 256.9" stroke="#d0d0d0" stroke-width="1.3"/>
<text x="302" y="262.52" font-size="14.5" fill="#d4d4d4" text-anchor="end">15</text>
<path d="M308.6 419.4L308.6 425.9" stroke="#d0d0d0" stroke-width="1.3"/>
<path d="M474.8 419.4L474.8 425.9" stroke="#d0d0d0" stroke-width="1.3"/>
<text x="380.6" y="251.3" font-size="14" fill="#d4d4d4" text-anchor="middle">Delta C</text>
<text x="391.8" y="436.3" font-size="14" fill="#d4d4d4" text-anchor="middle" textLength="35.5" lengthAdjust="spacingAndGlyphs">Black</text>
<rect x="530.2" y="256.7" width="166.2" height="162.7" fill="#282827"/>
<path d="M530.2 365.5L696.4 365.5" stroke="#8a8a8a" stroke-width="1.2"/>
<path d="M530.2 311.8L696.4 311.8" stroke="#8a8a8a" stroke-width="1.2"/>
<rect x="530.2" y="256.7" width="166.2" height="162.7" fill="none" stroke="#b4b4b4" stroke-width="1.3"/>
<path d="M530.2 257.3L696.4 257.3" stroke="#909090" stroke-width="2.4"/>
<path d="M524.7 419.4L530.2 419.4" stroke="#d0d0d0" stroke-width="1.3"/>
<text x="523.6" y="426.42" font-size="14.5" fill="#d4d4d4" text-anchor="end">0</text>
<path d="M524.7 365.5L530.2 365.5" stroke="#d0d0d0" stroke-width="1.3"/>
<text x="523.6" y="371.12" font-size="14.5" fill="#d4d4d4" text-anchor="end">5</text>
<path d="M524.7 311.8L530.2 311.8" stroke="#d0d0d0" stroke-width="1.3"/>
<text x="523.6" y="317.42" font-size="14.5" fill="#d4d4d4" text-anchor="end">10</text>
<path d="M524.7 256.9L530.2 256.9" stroke="#d0d0d0" stroke-width="1.3"/>
<text x="523.6" y="262.52" font-size="14.5" fill="#d4d4d4" text-anchor="end">15</text>
<path d="M530.2 419.4L530.2 425.9" stroke="#d0d0d0" stroke-width="1.3"/>
<path d="M696.4 419.4L696.4 425.9" stroke="#d0d0d0" stroke-width="1.3"/>
<text x="602.2" y="251.3" font-size="14" fill="#d4d4d4" text-anchor="middle">Delta H</text>
<text x="613.4" y="436.3" font-size="14" fill="#d4d4d4" text-anchor="middle" textLength="35.5" lengthAdjust="spacingAndGlyphs">Black</text>
<path d="M324 417.8L457 417.8" stroke="#0c0c0c" stroke-width="1.4"/>
<rect x="760.8" y="145.8" width="226.5" height="273.8" fill="#282827"/>
<path d="M760.8 174.5L987.3 174.5" stroke="#8a8a8a" stroke-width="1.2"/>
<path d="M760.8 228.8L987.3 228.8" stroke="#8a8a8a" stroke-width="1.2"/>
<path d="M760.8 283.9L987.3 283.9" stroke="#8a8a8a" stroke-width="1.2"/>
<path d="M760.8 338.6L987.3 338.6" stroke="#8a8a8a" stroke-width="1.2"/>
<path d="M760.8 393.3L987.3 393.3" stroke="#8a8a8a" stroke-width="1.2"/>
<rect x="760.8" y="145.8" width="226.5" height="273.8" fill="none" stroke="#b4b4b4" stroke-width="1.3"/>
<path d="M755.3 174.5L760.8 174.5" stroke="#d0d0d0" stroke-width="1.3"/>
<text x="754.2" y="180.12" font-size="14.5" fill="#d4d4d4" text-anchor="end">104</text>
<path d="M755.3 228.8L760.8 228.8" stroke="#d0d0d0" stroke-width="1.3"/>
<text x="754.2" y="234.42" font-size="14.5" fill="#d4d4d4" text-anchor="end">102</text>
<path d="M755.3 283.9L760.8 283.9" stroke="#d0d0d0" stroke-width="1.3"/>
<text x="754.2" y="289.52" font-size="14.5" fill="#d4d4d4" text-anchor="end">100</text>
<path d="M755.3 338.6L760.8 338.6" stroke="#d0d0d0" stroke-width="1.3"/>
<text x="754.2" y="344.22" font-size="14.5" fill="#d4d4d4" text-anchor="end">98</text>
<path d="M755.3 393.3L760.8 393.3" stroke="#d0d0d0" stroke-width="1.3"/>
<text x="754.2" y="398.92" font-size="14.5" fill="#d4d4d4" text-anchor="end">96</text>
<path d="M760.8 419.6L760.8 426.1" stroke="#d0d0d0" stroke-width="1.3"/>
<path d="M987.3 419.6L987.3 426.1" stroke="#d0d0d0" stroke-width="1.3"/>
<rect x="782.7" y="281.5" width="59.7" height="137.6" fill="url(#v13)" stroke="#0a0a0a" stroke-width="1.2"/>
<rect x="843.8" y="284.6" width="59.2" height="134.5" fill="url(#v14)" stroke="#0a0a0a" stroke-width="1.2"/>
<rect x="904.4" y="282.8" width="60.1" height="136.3" fill="url(#v15)" stroke="#0a0a0a" stroke-width="1.2"/>
<text x="858.5" y="140.4" font-size="14" fill="#d4d4d4" text-anchor="middle" textLength="84" lengthAdjust="spacingAndGlyphs">RGB Balance</text>
<text x="874.5" y="436.3" font-size="14" fill="#d4d4d4" text-anchor="middle" textLength="35.5" lengthAdjust="spacingAndGlyphs">Black</text>
<rect x="59" y="446.7" width="948.5" height="72.3" fill="#000"/>
<g clip-path="url(#swc)">
<rect x="75.8" y="448.4" width="59" height="15" fill="#ffffff" stroke="#f2f2f2" stroke-width="1.2"/>
<rect x="75.8" y="468.8" width="59" height="14.6" fill="#ffffff" stroke="#f2f2f2" stroke-width="1.2"/>
<text x="105.2" y="496.7" font-size="12" fill="#fff" text-anchor="middle" font-weight="bold" textLength="32.17" lengthAdjust="spacingAndGlyphs">White</text>
<rect x="145.08" y="448.4" width="59" height="15" fill="#e4e4e4" stroke="#f2f2f2" stroke-width="1.2"/>
<rect x="145.08" y="468.8" width="59" height="14.6" fill="#e4e4e4" stroke="#f2f2f2" stroke-width="1.2"/>
<text x="174.48" y="496.7" font-size="12" fill="#fff" text-anchor="middle" font-weight="bold" textLength="43.37" lengthAdjust="spacingAndGlyphs">Gray 80</text>
<rect x="214.36" y="448.4" width="59" height="15" fill="#dddddd" stroke="#f2f2f2" stroke-width="1.2"/>
<rect x="214.36" y="468.8" width="59" height="14.6" fill="#dddddd" stroke="#f2f2f2" stroke-width="1.2"/>
<text x="243.76" y="496.7" font-size="12" fill="#fff" text-anchor="middle" font-weight="bold" textLength="13.15" lengthAdjust="spacingAndGlyphs">6J</text>
<rect x="283.64" y="448.4" width="59" height="15" fill="#d0d0d0" stroke="#f2f2f2" stroke-width="1.2"/>
<rect x="283.64" y="468.8" width="59" height="14.6" fill="#d0d0d0" stroke="#f2f2f2" stroke-width="1.2"/>
<text x="313.04" y="496.7" font-size="12" fill="#fff" text-anchor="middle" font-weight="bold" textLength="43.37" lengthAdjust="spacingAndGlyphs">Gray 65</text>
<rect x="352.92" y="448.4" width="59" height="15" fill="#c6c6c6" stroke="#f2f2f2" stroke-width="1.2"/>
<rect x="352.92" y="468.8" width="59" height="14.6" fill="#c6c6c6" stroke="#f2f2f2" stroke-width="1.2"/>
<text x="382.32" y="496.7" font-size="12" fill="#fff" text-anchor="middle" font-weight="bold" textLength="13.79" lengthAdjust="spacingAndGlyphs">5F</text>
<rect x="422.2" y="448.4" width="59" height="15" fill="#bebebe" stroke="#f2f2f2" stroke-width="1.2"/>
<rect x="422.2" y="468.8" width="59" height="14.6" fill="#bebebe" stroke="#f2f2f2" stroke-width="1.2"/>
<text x="451.6" y="496.7" font-size="12" fill="#fff" text-anchor="middle" font-weight="bold" textLength="43.37" lengthAdjust="spacingAndGlyphs">Gray 50</text>
<rect x="491.48" y="448.4" width="59" height="15" fill="#bababa" stroke="#f2f2f2" stroke-width="1.2"/>
<rect x="491.48" y="468.8" width="59" height="14.6" fill="#bababa" stroke="#f2f2f2" stroke-width="1.2"/>
<text x="520.88" y="496.7" font-size="12" fill="#fff" text-anchor="middle" font-weight="bold" textLength="9.86" lengthAdjust="spacingAndGlyphs">6I</text>
<rect x="560.76" y="448.4" width="59" height="15" fill="#a9a9a9" stroke="#f2f2f2" stroke-width="1.2"/>
<rect x="560.76" y="468.8" width="59" height="14.6" fill="#a9a9a9" stroke="#f2f2f2" stroke-width="1.2"/>
<text x="590.16" y="496.7" font-size="12" fill="#fff" text-anchor="middle" font-weight="bold" textLength="15.11" lengthAdjust="spacingAndGlyphs">6K</text>
<rect x="630.04" y="448.4" width="59" height="15" fill="#a2a2a2" stroke="#f2f2f2" stroke-width="1.2"/>
<rect x="630.04" y="468.8" width="59" height="14.6" fill="#a2a2a2" stroke="#f2f2f2" stroke-width="1.2"/>
<text x="659.44" y="496.7" font-size="12" fill="#fff" text-anchor="middle" font-weight="bold" textLength="43.37" lengthAdjust="spacingAndGlyphs">Gray 35</text>
<rect x="699.32" y="448.4" width="59" height="15" fill="#9e9e9e" stroke="#f2f2f2" stroke-width="1.2"/>
<rect x="699.32" y="468.8" width="59" height="14.6" fill="#9e9e9e" stroke="#f2f2f2" stroke-width="1.2"/>
<text x="728.72" y="496.7" font-size="12" fill="#fff" text-anchor="middle" font-weight="bold" textLength="15.77" lengthAdjust="spacingAndGlyphs">5G</text>
<rect x="768.6" y="448.4" width="59" height="15" fill="#909090" stroke="#f2f2f2" stroke-width="1.2"/>
<rect x="768.6" y="468.8" width="59" height="14.6" fill="#909090" stroke="#f2f2f2" stroke-width="1.2"/>
<text x="798" y="496.7" font-size="12" fill="#fff" text-anchor="middle" font-weight="bold" textLength="15.11" lengthAdjust="spacingAndGlyphs">6H</text>
<rect x="837.88" y="448.4" width="59" height="15" fill="#747474" stroke="#f2f2f2" stroke-width="1.2"/>
<rect x="837.88" y="468.8" width="59" height="14.6" fill="#747474" stroke="#f2f2f2" stroke-width="1.2"/>
<text x="867.28" y="496.7" font-size="12" fill="#fff" text-anchor="middle" font-weight="bold" textLength="15.11" lengthAdjust="spacingAndGlyphs">5H</text>
<rect x="907.16" y="448.4" width="59" height="15" fill="#6c6c6c" stroke="#f2f2f2" stroke-width="1.2"/>
<rect x="907.16" y="468.8" width="59" height="14.6" fill="#6c6c6c" stroke="#f2f2f2" stroke-width="1.2"/>
<text x="936.56" y="496.7" font-size="12" fill="#fff" text-anchor="middle" font-weight="bold" textLength="15.11" lengthAdjust="spacingAndGlyphs">7K</text>
<rect x="976.44" y="448.4" width="59" height="15" fill="#666666" stroke="#f2f2f2" stroke-width="1.2"/>
<rect x="976.44" y="468.8" width="59" height="14.6" fill="#666666" stroke="#f2f2f2" stroke-width="1.2"/>
<text x="1005.84" y="496.7" font-size="12" fill="#fff" text-anchor="middle" font-weight="bold" textLength="15.77" lengthAdjust="spacingAndGlyphs">6G</text>
<g clip-path="url(#ra)"><text transform="translate(72.3 456.3) rotate(-90)" font-size="11.5" font-weight="bold" fill="#fff" text-anchor="middle">Actual</text></g>
<g clip-path="url(#rb)"><text transform="translate(72.3 477.3) rotate(-90)" font-size="11.5" font-weight="bold" fill="#fff" text-anchor="middle">Target</text></g>
</g>
<rect x="59" y="519.8" width="948.5" height="16" fill="#5d5d5c" rx="2"/>
<rect x="59.5" y="520.3" width="14.5" height="15" fill="#7e7e7d" rx="2"/>
<path d="M69.5 523L64 528L69.5 533z" fill="#3a3a3a"/>
<rect x="76.5" y="521" width="97.5" height="14" fill="#474746" rx="6"/>
<rect x="992.5" y="520.3" width="14.5" height="15" fill="#7e7e7d" rx="2"/>
<path d="M997 523L1002.5 528L997 533z" fill="#3a3a3a"/>
<rect x="87.3" y="551" width="136.3" height="25.2" fill="url(#v16)" stroke="#3a3a39" stroke-width="1"/>
<text x="91.5" y="572.2" font-size="16" fill="#f2f2f2" textLength="35.5" lengthAdjust="spacingAndGlyphs">2000</text>
<path d="M208.3 562.2H218.3L213.3 567.6z" fill="#0a0a0a"/>
<text x="526" y="576.6" font-size="14" fill="#d4d4d4" text-anchor="middle" textLength="81" lengthAdjust="spacingAndGlyphs">DeltaE 2000</text>
<text x="682" y="579.6" font-size="14.5" fill="#ececec" textLength="55" lengthAdjust="spacingAndGlyphs">Avg: 0,4</text>
<text x="927" y="579.6" font-size="14.5" fill="#ececec" textLength="60" lengthAdjust="spacingAndGlyphs">Max: 0,9</text>
<rect x="86.8" y="582.3" width="900.6" height="233.9" fill="#282827"/>
<path d="M86.8 738.5L987.4 738.5" stroke="#8a8a8a" stroke-width="1.3"/>
<path d="M86.8 660.2L987.4 660.2" stroke="#e04846" stroke-width="2.2"/>
<path d="M86.8 769.4L987.4 769.4" stroke="#d8d432" stroke-width="1.8"/>
<path d="M86.8 800.6L987.4 800.6" stroke="#1e8a1e" stroke-width="1.8"/>
<rect x="86.8" y="582.3" width="900.6" height="233.9" fill="none" stroke="#b4b4b4" stroke-width="1.3"/>
<path d="M81.3 816.2L86.8 816.2" stroke="#d0d0d0" stroke-width="1.3"/>
<text x="80.2" y="823.42" font-size="14.5" fill="#d4d4d4" text-anchor="end">0</text>
<path d="M81.3 738.5L86.8 738.5" stroke="#d0d0d0" stroke-width="1.3"/>
<text x="80.2" y="745.12" font-size="14.5" fill="#d4d4d4" text-anchor="end">5</text>
<path d="M81.3 660.2L86.8 660.2" stroke="#d0d0d0" stroke-width="1.3"/>
<text x="80.2" y="666.82" font-size="14.5" fill="#d4d4d4" text-anchor="end">10</text>
<path d="M81.3 582.5L86.8 582.5" stroke="#d0d0d0" stroke-width="1.3"/>
<text x="80.2" y="589.12" font-size="14.5" fill="#d4d4d4" text-anchor="end">15</text>
<path d="M94.06 816.2L94.06 822.2" stroke="#d0d0d0" stroke-width="1.2"/>
<path d="M101.33 816.2L101.33 822.2" stroke="#d0d0d0" stroke-width="1.2"/>
<path d="M108.59 816.2L108.59 822.2" stroke="#d0d0d0" stroke-width="1.2"/>
<path d="M115.85 816.2L115.85 822.2" stroke="#d0d0d0" stroke-width="1.2"/>
<path d="M123.11 816.2L123.11 822.2" stroke="#d0d0d0" stroke-width="1.2"/>
<path d="M130.38 816.2L130.38 822.2" stroke="#d0d0d0" stroke-width="1.2"/>
<path d="M137.64 816.2L137.64 822.2" stroke="#d0d0d0" stroke-width="1.2"/>
<path d="M144.9 816.2L144.9 822.2" stroke="#d0d0d0" stroke-width="1.2"/>
<path d="M152.17 816.2L152.17 822.2" stroke="#d0d0d0" stroke-width="1.2"/>
<path d="M159.43 816.2L159.43 822.2" stroke="#d0d0d0" stroke-width="1.2"/>
<path d="M166.69 816.2L166.69 822.2" stroke="#d0d0d0" stroke-width="1.2"/>
<path d="M173.95 816.2L173.95 822.2" stroke="#d0d0d0" stroke-width="1.2"/>
<path d="M181.22 816.2L181.22 822.2" stroke="#d0d0d0" stroke-width="1.2"/>
<path d="M188.48 816.2L188.48 822.2" stroke="#d0d0d0" stroke-width="1.2"/>
<path d="M195.74 816.2L195.74 822.2" stroke="#d0d0d0" stroke-width="1.2"/>
<path d="M203.01 816.2L203.01 822.2" stroke="#d0d0d0" stroke-width="1.2"/>
<path d="M210.27 816.2L210.27 822.2" stroke="#d0d0d0" stroke-width="1.2"/>
<path d="M217.53 816.2L217.53 822.2" stroke="#d0d0d0" stroke-width="1.2"/>
<path d="M224.8 816.2L224.8 822.2" stroke="#d0d0d0" stroke-width="1.2"/>
<path d="M232.06 816.2L232.06 822.2" stroke="#d0d0d0" stroke-width="1.2"/>
<path d="M239.32 816.2L239.32 822.2" stroke="#d0d0d0" stroke-width="1.2"/>
<path d="M246.58 816.2L246.58 822.2" stroke="#d0d0d0" stroke-width="1.2"/>
<path d="M253.85 816.2L253.85 822.2" stroke="#d0d0d0" stroke-width="1.2"/>
<path d="M261.11 816.2L261.11 822.2" stroke="#d0d0d0" stroke-width="1.2"/>
<path d="M268.37 816.2L268.37 822.2" stroke="#d0d0d0" stroke-width="1.2"/>
<path d="M275.64 816.2L275.64 822.2" stroke="#d0d0d0" stroke-width="1.2"/>
<path d="M282.9 816.2L282.9 822.2" stroke="#d0d0d0" stroke-width="1.2"/>
<path d="M290.16 816.2L290.16 822.2" stroke="#d0d0d0" stroke-width="1.2"/>
<path d="M297.42 816.2L297.42 822.2" stroke="#d0d0d0" stroke-width="1.2"/>
<path d="M304.69 816.2L304.69 822.2" stroke="#d0d0d0" stroke-width="1.2"/>
<path d="M311.95 816.2L311.95 822.2" stroke="#d0d0d0" stroke-width="1.2"/>
<path d="M319.21 816.2L319.21 822.2" stroke="#d0d0d0" stroke-width="1.2"/>
<path d="M326.48 816.2L326.48 822.2" stroke="#d0d0d0" stroke-width="1.2"/>
<path d="M333.74 816.2L333.74 822.2" stroke="#d0d0d0" stroke-width="1.2"/>
<path d="M341 816.2L341 822.2" stroke="#d0d0d0" stroke-width="1.2"/>
<path d="M348.26 816.2L348.26 822.2" stroke="#d0d0d0" stroke-width="1.2"/>
<path d="M355.53 816.2L355.53 822.2" stroke="#d0d0d0" stroke-width="1.2"/>
<path d="M362.79 816.2L362.79 822.2" stroke="#d0d0d0" stroke-width="1.2"/>
<path d="M370.05 816.2L370.05 822.2" stroke="#d0d0d0" stroke-width="1.2"/>
<path d="M377.32 816.2L377.32 822.2" stroke="#d0d0d0" stroke-width="1.2"/>
<path d="M384.58 816.2L384.58 822.2" stroke="#d0d0d0" stroke-width="1.2"/>
<path d="M391.84 816.2L391.84 822.2" stroke="#d0d0d0" stroke-width="1.2"/>
<path d="M399.1 816.2L399.1 822.2" stroke="#d0d0d0" stroke-width="1.2"/>
<path d="M406.37 816.2L406.37 822.2" stroke="#d0d0d0" stroke-width="1.2"/>
<path d="M413.63 816.2L413.63 822.2" stroke="#d0d0d0" stroke-width="1.2"/>
<path d="M420.89 816.2L420.89 822.2" stroke="#d0d0d0" stroke-width="1.2"/>
<path d="M428.16 816.2L428.16 822.2" stroke="#d0d0d0" stroke-width="1.2"/>
<path d="M435.42 816.2L435.42 822.2" stroke="#d0d0d0" stroke-width="1.2"/>
<path d="M442.68 816.2L442.68 822.2" stroke="#d0d0d0" stroke-width="1.2"/>
<path d="M449.95 816.2L449.95 822.2" stroke="#d0d0d0" stroke-width="1.2"/>
<path d="M457.21 816.2L457.21 822.2" stroke="#d0d0d0" stroke-width="1.2"/>
<path d="M464.47 816.2L464.47 822.2" stroke="#d0d0d0" stroke-width="1.2"/>
<path d="M471.73 816.2L471.73 822.2" stroke="#d0d0d0" stroke-width="1.2"/>
<path d="M479 816.2L479 822.2" stroke="#d0d0d0" stroke-width="1.2"/>
<path d="M486.26 816.2L486.26 822.2" stroke="#d0d0d0" stroke-width="1.2"/>
<path d="M493.52 816.2L493.52 822.2" stroke="#d0d0d0" stroke-width="1.2"/>
<path d="M500.79 816.2L500.79 822.2" stroke="#d0d0d0" stroke-width="1.2"/>
<path d="M508.05 816.2L508.05 822.2" stroke="#d0d0d0" stroke-width="1.2"/>
<path d="M515.31 816.2L515.31 822.2" stroke="#d0d0d0" stroke-width="1.2"/>
<path d="M522.57 816.2L522.57 822.2" stroke="#d0d0d0" stroke-width="1.2"/>
<path d="M529.84 816.2L529.84 822.2" stroke="#d0d0d0" stroke-width="1.2"/>
<path d="M537.1 816.2L537.1 822.2" stroke="#d0d0d0" stroke-width="1.2"/>
<path d="M544.36 816.2L544.36 822.2" stroke="#d0d0d0" stroke-width="1.2"/>
<path d="M551.63 816.2L551.63 822.2" stroke="#d0d0d0" stroke-width="1.2"/>
<path d="M558.89 816.2L558.89 822.2" stroke="#d0d0d0" stroke-width="1.2"/>
<path d="M566.15 816.2L566.15 822.2" stroke="#d0d0d0" stroke-width="1.2"/>
<path d="M573.41 816.2L573.41 822.2" stroke="#d0d0d0" stroke-width="1.2"/>
<path d="M580.68 816.2L580.68 822.2" stroke="#d0d0d0" stroke-width="1.2"/>
<path d="M587.94 816.2L587.94 822.2" stroke="#d0d0d0" stroke-width="1.2"/>
<path d="M595.2 816.2L595.2 822.2" stroke="#d0d0d0" stroke-width="1.2"/>
<path d="M602.47 816.2L602.47 822.2" stroke="#d0d0d0" stroke-width="1.2"/>
<path d="M609.73 816.2L609.73 822.2" stroke="#d0d0d0" stroke-width="1.2"/>
<path d="M616.99 816.2L616.99 822.2" stroke="#d0d0d0" stroke-width="1.2"/>
<path d="M624.25 816.2L624.25 822.2" stroke="#d0d0d0" stroke-width="1.2"/>
<path d="M631.52 816.2L631.52 822.2" stroke="#d0d0d0" stroke-width="1.2"/>
<path d="M638.78 816.2L638.78 822.2" stroke="#d0d0d0" stroke-width="1.2"/>
<path d="M646.04 816.2L646.04 822.2" stroke="#d0d0d0" stroke-width="1.2"/>
<path d="M653.31 816.2L653.31 822.2" stroke="#d0d0d0" stroke-width="1.2"/>
<path d="M660.57 816.2L660.57 822.2" stroke="#d0d0d0" stroke-width="1.2"/>
<path d="M667.83 816.2L667.83 822.2" stroke="#d0d0d0" stroke-width="1.2"/>
<path d="M675.1 816.2L675.1 822.2" stroke="#d0d0d0" stroke-width="1.2"/>
<path d="M682.36 816.2L682.36 822.2" stroke="#d0d0d0" stroke-width="1.2"/>
<path d="M689.62 816.2L689.62 822.2" stroke="#d0d0d0" stroke-width="1.2"/>
<path d="M696.88 816.2L696.88 822.2" stroke="#d0d0d0" stroke-width="1.2"/>
<path d="M704.15 816.2L704.15 822.2" stroke="#d0d0d0" stroke-width="1.2"/>
<path d="M711.41 816.2L711.41 822.2" stroke="#d0d0d0" stroke-width="1.2"/>
<path d="M718.67 816.2L718.67 822.2" stroke="#d0d0d0" stroke-width="1.2"/>
<path d="M725.94 816.2L725.94 822.2" stroke="#d0d0d0" stroke-width="1.2"/>
<path d="M733.2 816.2L733.2 822.2" stroke="#d0d0d0" stroke-width="1.2"/>
<path d="M740.46 816.2L740.46 822.2" stroke="#d0d0d0" stroke-width="1.2"/>
<path d="M747.72 816.2L747.72 822.2" stroke="#d0d0d0" stroke-width="1.2"/>
<path d="M754.99 816.2L754.99 822.2" stroke="#d0d0d0" stroke-width="1.2"/>
<path d="M762.25 816.2L762.25 822.2" stroke="#d0d0d0" stroke-width="1.2"/>
<path d="M769.51 816.2L769.51 822.2" stroke="#d0d0d0" stroke-width="1.2"/>
<path d="M776.78 816.2L776.78 822.2" stroke="#d0d0d0" stroke-width="1.2"/>
<path d="M784.04 816.2L784.04 822.2" stroke="#d0d0d0" stroke-width="1.2"/>
<path d="M791.3 816.2L791.3 822.2" stroke="#d0d0d0" stroke-width="1.2"/>
<path d="M798.56 816.2L798.56 822.2" stroke="#d0d0d0" stroke-width="1.2"/>
<path d="M805.83 816.2L805.83 822.2" stroke="#d0d0d0" stroke-width="1.2"/>
<path d="M813.09 816.2L813.09 822.2" stroke="#d0d0d0" stroke-width="1.2"/>
<path d="M820.35 816.2L820.35 822.2" stroke="#d0d0d0" stroke-width="1.2"/>
<path d="M827.62 816.2L827.62 822.2" stroke="#d0d0d0" stroke-width="1.2"/>
<path d="M834.88 816.2L834.88 822.2" stroke="#d0d0d0" stroke-width="1.2"/>
<path d="M842.14 816.2L842.14 822.2" stroke="#d0d0d0" stroke-width="1.2"/>
<path d="M849.4 816.2L849.4 822.2" stroke="#d0d0d0" stroke-width="1.2"/>
<path d="M856.67 816.2L856.67 822.2" stroke="#d0d0d0" stroke-width="1.2"/>
<path d="M863.93 816.2L863.93 822.2" stroke="#d0d0d0" stroke-width="1.2"/>
<path d="M871.19 816.2L871.19 822.2" stroke="#d0d0d0" stroke-width="1.2"/>
<path d="M878.46 816.2L878.46 822.2" stroke="#d0d0d0" stroke-width="1.2"/>
<path d="M885.72 816.2L885.72 822.2" stroke="#d0d0d0" stroke-width="1.2"/>
<path d="M892.98 816.2L892.98 822.2" stroke="#d0d0d0" stroke-width="1.2"/>
<path d="M900.25 816.2L900.25 822.2" stroke="#d0d0d0" stroke-width="1.2"/>
<path d="M907.51 816.2L907.51 822.2" stroke="#d0d0d0" stroke-width="1.2"/>
<path d="M914.77 816.2L914.77 822.2" stroke="#d0d0d0" stroke-width="1.2"/>
<path d="M922.03 816.2L922.03 822.2" stroke="#d0d0d0" stroke-width="1.2"/>
<path d="M929.3 816.2L929.3 822.2" stroke="#d0d0d0" stroke-width="1.2"/>
<path d="M936.56 816.2L936.56 822.2" stroke="#d0d0d0" stroke-width="1.2"/>
<path d="M943.82 816.2L943.82 822.2" stroke="#d0d0d0" stroke-width="1.2"/>
<path d="M951.09 816.2L951.09 822.2" stroke="#d0d0d0" stroke-width="1.2"/>
<path d="M958.35 816.2L958.35 822.2" stroke="#d0d0d0" stroke-width="1.2"/>
<path d="M965.61 816.2L965.61 822.2" stroke="#d0d0d0" stroke-width="1.2"/>
<path d="M972.87 816.2L972.87 822.2" stroke="#d0d0d0" stroke-width="1.2"/>
<path d="M980.14 816.2L980.14 822.2" stroke="#d0d0d0" stroke-width="1.2"/>
<path d="M987.4 816.2L987.4 822.2" stroke="#d0d0d0" stroke-width="1.2"/>
<path d="M86.8 816.2L86.8 822.2" stroke="#d0d0d0" stroke-width="1.2"/>
<rect x="88.53" y="815.89" width="3.6" height="0.31" fill="#f4f4f4" stroke="#0a0a0a" stroke-width="1"/><rect x="95.79" y="815.42" width="3.6" height="0.78" fill="#e4e4e4" stroke="#0a0a0a" stroke-width="1"/><rect x="103.06" y="815.89" width="3.6" height="0.31" fill="#dcdcdc" stroke="#0a0a0a" stroke-width="1"/><rect x="110.32" y="815.42" width="3.6" height="0.78" fill="#d0d0d0" stroke="#0a0a0a" stroke-width="1"/><rect x="117.58" y="815.89" width="3.6" height="0.31" fill="#c6c6c6" stroke="#0a0a0a" stroke-width="1"/><rect x="124.85" y="814.64" width="3.6" height="1.56" fill="#bcbcbc" stroke="#0a0a0a" stroke-width="1"/><rect x="132.11" y="814.64" width="3.6" height="1.56" fill="#b8b8b8" stroke="#0a0a0a" stroke-width="1"/><rect x="139.37" y="814.64" width="3.6" height="1.56" fill="#a8a8a8" stroke="#0a0a0a" stroke-width="1"/><rect x="146.63" y="809.18" width="3.6" height="7.02" fill="#a0a0a0" stroke="#0a0a0a" stroke-width="1"/><rect x="153.9" y="809.18" width="3.6" height="7.02" fill="#999" stroke="#0a0a0a" stroke-width="1"/><rect x="161.16" y="810.74" width="3.6" height="5.46" fill="#909090" stroke="#0a0a0a" stroke-width="1"/><rect x="168.42" y="802.16" width="3.6" height="14.04" fill="#7c7c7c" stroke="#0a0a0a" stroke-width="1"/><rect x="175.69" y="807.62" width="3.6" height="8.58" fill="#747474" stroke="#0a0a0a" stroke-width="1"/><rect x="182.95" y="806.06" width="3.6" height="10.14" fill="#6c6c6c" stroke="#0a0a0a" stroke-width="1"/><rect x="190.21" y="807.62" width="3.6" height="8.58" fill="#626262" stroke="#0a0a0a" stroke-width="1"/><rect x="197.47" y="815.42" width="3.6" height="0.78" fill="#585858" stroke="#0a0a0a" stroke-width="1"/><rect x="204.74" y="815.89" width="3.6" height="0.31" fill="#424242" stroke="#0a0a0a" stroke-width="1"/><rect x="212" y="815.42" width="3.6" height="0.78" fill="#323232" stroke="#0a0a0a" stroke-width="1"/><rect x="226.53" y="807.62" width="3.6" height="8.58" fill="#73524a" stroke="#0a0a0a" stroke-width="1"/><rect x="233.79" y="809.96" width="3.6" height="6.24" fill="#c29682" stroke="#0a0a0a" stroke-width="1"/><rect x="241.05" y="811.52" width="3.6" height="4.68" fill="#627a9d" stroke="#0a0a0a" stroke-width="1"/><rect x="248.32" y="813.86" width="3.6" height="2.34" fill="#576c43" stroke="#0a0a0a" stroke-width="1"/><rect x="255.58" y="814.95" width="3.6" height="1.25" fill="#8580b1" stroke="#0a0a0a" stroke-width="1"/><rect x="262.84" y="814.95" width="3.6" height="1.25" fill="#67bdaa" stroke="#0a0a0a" stroke-width="1"/><rect x="270.1" y="807.62" width="3.6" height="8.58" fill="#d67e2c" stroke="#0a0a0a" stroke-width="1"/><rect x="277.37" y="814.95" width="3.6" height="1.25" fill="#505ba6" stroke="#0a0a0a" stroke-width="1"/><rect x="284.63" y="811.52" width="3.6" height="4.68" fill="#c15a63" stroke="#0a0a0a" stroke-width="1"/><rect x="291.89" y="815.42" width="3.6" height="0.78" fill="#5e3c6c" stroke="#0a0a0a" stroke-width="1"/><rect x="299.16" y="813.86" width="3.6" height="2.34" fill="#9dbc40" stroke="#0a0a0a" stroke-width="1"/><rect x="306.42" y="807.62" width="3.6" height="8.58" fill="#e0a32e" stroke="#0a0a0a" stroke-width="1"/><rect x="313.68" y="814.64" width="3.6" height="1.56" fill="#383d96" stroke="#0a0a0a" stroke-width="1"/><rect x="320.94" y="814.95" width="3.6" height="1.25" fill="#469449" stroke="#0a0a0a" stroke-width="1"/><rect x="328.21" y="811.52" width="3.6" height="4.68" fill="#c8384a" stroke="#0a0a0a" stroke-width="1"/><rect x="335.47" y="812.3" width="3.6" height="3.9" fill="#e8d040" stroke="#0a0a0a" stroke-width="1"/><rect x="342.73" y="812.3" width="3.6" height="3.9" fill="#c04a9a" stroke="#0a0a0a" stroke-width="1"/><rect x="350" y="811.52" width="3.6" height="4.68" fill="#30a0c8" stroke="#0a0a0a" stroke-width="1"/><rect x="357.26" y="811.52" width="3.6" height="4.68" fill="#c04a8a" stroke="#0a0a0a" stroke-width="1"/><rect x="364.52" y="813.08" width="3.6" height="3.12" fill="#2a2a2a" stroke="#0a0a0a" stroke-width="1"/><rect x="371.78" y="813.08" width="3.6" height="3.12" fill="#e8e8e8" stroke="#0a0a0a" stroke-width="1"/><rect x="379.05" y="808.4" width="3.6" height="7.8" fill="#a86a4a" stroke="#0a0a0a" stroke-width="1"/><rect x="386.31" y="806.06" width="3.6" height="10.14" fill="#e0a890" stroke="#0a0a0a" stroke-width="1"/><rect x="393.57" y="811.52" width="3.6" height="4.68" fill="#5a7090" stroke="#0a0a0a" stroke-width="1"/><rect x="400.84" y="809.96" width="3.6" height="6.24" fill="#6a7a3a" stroke="#0a0a0a" stroke-width="1"/><rect x="408.1" y="812.3" width="3.6" height="3.9" fill="#303030" stroke="#0a0a0a" stroke-width="1"/><rect x="415.36" y="815.42" width="3.6" height="0.78" fill="#888" stroke="#0a0a0a" stroke-width="1"/><rect x="422.62" y="814.64" width="3.6" height="1.56" fill="#e0e0e0" stroke="#0a0a0a" stroke-width="1"/><rect x="429.89" y="809.96" width="3.6" height="6.24" fill="#7a2a3a" stroke="#0a0a0a" stroke-width="1"/><rect x="437.15" y="809.96" width="3.6" height="6.24" fill="#c83a60" stroke="#0a0a0a" stroke-width="1"/><rect x="444.41" y="813.08" width="3.6" height="3.12" fill="#8a3a7a" stroke="#0a0a0a" stroke-width="1"/><rect x="451.68" y="813.08" width="3.6" height="3.12" fill="#3a3a8a" stroke="#0a0a0a" stroke-width="1"/><rect x="458.94" y="813.08" width="3.6" height="3.12" fill="#f0c8b0" stroke="#0a0a0a" stroke-width="1"/><rect x="466.2" y="808.4" width="3.6" height="7.8" fill="#f09030" stroke="#0a0a0a" stroke-width="1"/><rect x="473.47" y="814.64" width="3.6" height="1.56" fill="#888" stroke="#0a0a0a" stroke-width="1"/><rect x="480.73" y="811.52" width="3.6" height="4.68" fill="#e05060" stroke="#0a0a0a" stroke-width="1"/><rect x="487.99" y="813.08" width="3.6" height="3.12" fill="#5a3a7a" stroke="#0a0a0a" stroke-width="1"/><rect x="495.25" y="811.52" width="3.6" height="4.68" fill="#b0d030" stroke="#0a0a0a" stroke-width="1"/><rect x="502.52" y="807.62" width="3.6" height="8.58" fill="#f0a828" stroke="#0a0a0a" stroke-width="1"/><rect x="509.78" y="806.84" width="3.6" height="9.36" fill="#d02828" stroke="#0a0a0a" stroke-width="1"/><rect x="517.04" y="813.08" width="3.6" height="3.12" fill="#5a2a5a" stroke="#0a0a0a" stroke-width="1"/><rect x="524.31" y="813.08" width="3.6" height="3.12" fill="#7a3a8a" stroke="#0a0a0a" stroke-width="1"/><rect x="531.57" y="813.08" width="3.6" height="3.12" fill="#1a6a9a" stroke="#0a0a0a" stroke-width="1"/><rect x="538.83" y="814.64" width="3.6" height="1.56" fill="#888" stroke="#0a0a0a" stroke-width="1"/><rect x="546.09" y="811.52" width="3.6" height="4.68" fill="#2a48b0" stroke="#0a0a0a" stroke-width="1"/><rect x="553.36" y="813.08" width="3.6" height="3.12" fill="#3a9a4a" stroke="#0a0a0a" stroke-width="1"/><rect x="560.62" y="808.4" width="3.6" height="7.8" fill="#c82838" stroke="#0a0a0a" stroke-width="1"/><rect x="567.88" y="811.52" width="3.6" height="4.68" fill="#e8d838" stroke="#0a0a0a" stroke-width="1"/><rect x="575.15" y="809.96" width="3.6" height="6.24" fill="#c848a8" stroke="#0a0a0a" stroke-width="1"/><rect x="582.41" y="812.3" width="3.6" height="3.9" fill="#30a8c0" stroke="#0a0a0a" stroke-width="1"/><rect x="589.67" y="814.64" width="3.6" height="1.56" fill="#f0f0f0" stroke="#0a0a0a" stroke-width="1"/><rect x="596.93" y="809.96" width="3.6" height="6.24" fill="#e88878" stroke="#0a0a0a" stroke-width="1"/><rect x="604.2" y="809.96" width="3.6" height="6.24" fill="#c02838" stroke="#0a0a0a" stroke-width="1"/><rect x="611.46" y="810.74" width="3.6" height="5.46" fill="#30a0d0" stroke="#0a0a0a" stroke-width="1"/><rect x="618.72" y="810.74" width="3.6" height="5.46" fill="#5ab0e0" stroke="#0a0a0a" stroke-width="1"/><rect x="625.99" y="814.64" width="3.6" height="1.56" fill="#f0f0f0" stroke="#0a0a0a" stroke-width="1"/><rect x="633.25" y="814.64" width="3.6" height="1.56" fill="#f0f0f0" stroke="#0a0a0a" stroke-width="1"/><rect x="640.51" y="809.96" width="3.6" height="6.24" fill="#e88070" stroke="#0a0a0a" stroke-width="1"/><rect x="647.77" y="808.4" width="3.6" height="7.8" fill="#e04838" stroke="#0a0a0a" stroke-width="1"/><rect x="655.04" y="808.4" width="3.6" height="7.8" fill="#40c0d0" stroke="#0a0a0a" stroke-width="1"/><rect x="662.3" y="809.96" width="3.6" height="6.24" fill="#1a4a5a" stroke="#0a0a0a" stroke-width="1"/><rect x="669.56" y="811.52" width="3.6" height="4.68" fill="#f0e070" stroke="#0a0a0a" stroke-width="1"/><rect x="676.83" y="809.96" width="3.6" height="6.24" fill="#f09838" stroke="#0a0a0a" stroke-width="1"/><rect x="684.09" y="809.18" width="3.6" height="7.02" fill="#f0c030" stroke="#0a0a0a" stroke-width="1"/><rect x="691.35" y="814.64" width="3.6" height="1.56" fill="#888" stroke="#0a0a0a" stroke-width="1"/><rect x="698.62" y="809.96" width="3.6" height="6.24" fill="#7aa8d0" stroke="#0a0a0a" stroke-width="1"/><rect x="705.88" y="808.4" width="3.6" height="7.8" fill="#f0a880" stroke="#0a0a0a" stroke-width="1"/><rect x="713.14" y="810.74" width="3.6" height="5.46" fill="#f0b090" stroke="#0a0a0a" stroke-width="1"/><rect x="720.4" y="807.62" width="3.6" height="8.58" fill="#d8a070" stroke="#0a0a0a" stroke-width="1"/><rect x="727.67" y="806.84" width="3.6" height="9.36" fill="#b07840" stroke="#0a0a0a" stroke-width="1"/><rect x="734.93" y="806.84" width="3.6" height="9.36" fill="#a06a3a" stroke="#0a0a0a" stroke-width="1"/><rect x="742.19" y="807.62" width="3.6" height="8.58" fill="#c08850" stroke="#0a0a0a" stroke-width="1"/><rect x="749.46" y="809.96" width="3.6" height="6.24" fill="#f0b080" stroke="#0a0a0a" stroke-width="1"/><rect x="756.72" y="809.96" width="3.6" height="6.24" fill="#e8c040" stroke="#0a0a0a" stroke-width="1"/><rect x="763.98" y="813.08" width="3.6" height="3.12" fill="#e8e040" stroke="#0a0a0a" stroke-width="1"/><rect x="771.24" y="813.86" width="3.6" height="2.34" fill="#30a090" stroke="#0a0a0a" stroke-width="1"/><rect x="778.51" y="813.86" width="3.6" height="2.34" fill="#40b0a0" stroke="#0a0a0a" stroke-width="1"/><rect x="785.77" y="809.18" width="3.6" height="7.02" fill="#e89878" stroke="#0a0a0a" stroke-width="1"/><rect x="793.03" y="809.18" width="3.6" height="7.02" fill="#f0a888" stroke="#0a0a0a" stroke-width="1"/><rect x="800.3" y="805.28" width="3.6" height="10.92" fill="#f0c0a0" stroke="#0a0a0a" stroke-width="1"/><rect x="807.56" y="807.62" width="3.6" height="8.58" fill="#e8a080" stroke="#0a0a0a" stroke-width="1"/><rect x="814.82" y="808.4" width="3.6" height="7.8" fill="#e0a078" stroke="#0a0a0a" stroke-width="1"/><rect x="822.08" y="807.62" width="3.6" height="8.58" fill="#d89868" stroke="#0a0a0a" stroke-width="1"/><rect x="829.35" y="808.4" width="3.6" height="7.8" fill="#e0a070" stroke="#0a0a0a" stroke-width="1"/><rect x="836.61" y="809.18" width="3.6" height="7.02" fill="#e0b040" stroke="#0a0a0a" stroke-width="1"/><rect x="843.87" y="810.74" width="3.6" height="5.46" fill="#c8c030" stroke="#0a0a0a" stroke-width="1"/><rect x="851.14" y="808.4" width="3.6" height="7.8" fill="#3a3a20" stroke="#0a0a0a" stroke-width="1"/><rect x="858.4" y="814.64" width="3.6" height="1.56" fill="#285838" stroke="#0a0a0a" stroke-width="1"/><rect x="865.66" y="814.95" width="3.6" height="1.25" fill="#306848" stroke="#0a0a0a" stroke-width="1"/><rect x="872.92" y="814.64" width="3.6" height="1.56" fill="#205040" stroke="#0a0a0a" stroke-width="1"/><rect x="880.19" y="813.86" width="3.6" height="2.34" fill="#387850" stroke="#0a0a0a" stroke-width="1"/><rect x="887.45" y="813.86" width="3.6" height="2.34" fill="#2a6a4a" stroke="#0a0a0a" stroke-width="1"/><rect x="894.71" y="814.95" width="3.6" height="1.25" fill="#1e4a3a" stroke="#0a0a0a" stroke-width="1"/><rect x="901.98" y="814.64" width="3.6" height="1.56" fill="#305a40" stroke="#0a0a0a" stroke-width="1"/><rect x="909.24" y="814.64" width="3.6" height="1.56" fill="#2a5038" stroke="#0a0a0a" stroke-width="1"/><rect x="916.5" y="806.84" width="3.6" height="9.36" fill="#c89038" stroke="#0a0a0a" stroke-width="1"/><rect x="923.77" y="810.74" width="3.6" height="5.46" fill="#a0a030" stroke="#0a0a0a" stroke-width="1"/><rect x="931.03" y="813.08" width="3.6" height="3.12" fill="#c8d030" stroke="#0a0a0a" stroke-width="1"/><rect x="938.29" y="806.84" width="3.6" height="9.36" fill="#4a3020" stroke="#0a0a0a" stroke-width="1"/><rect x="945.55" y="810.74" width="3.6" height="5.46" fill="#e02828" stroke="#0a0a0a" stroke-width="1"/><rect x="952.82" y="814.64" width="3.6" height="1.56" fill="#28c828" stroke="#0a0a0a" stroke-width="1"/><rect x="960.08" y="815.26" width="3.6" height="0.94" fill="#2828d0" stroke="#0a0a0a" stroke-width="1"/><rect x="967.34" y="810.74" width="3.6" height="5.46" fill="#28e0e0" stroke="#0a0a0a" stroke-width="1"/><rect x="974.61" y="811.52" width="3.6" height="4.68" fill="#e028e0" stroke="#0a0a0a" stroke-width="1"/><rect x="981.87" y="813.08" width="3.6" height="3.12" fill="#e0e028" stroke="#0a0a0a" stroke-width="1"/>
<path d="M86.8 816.2L987.4 816.2" stroke="#b4b4b4" stroke-width="1.3"/>
<g clip-path="url(#xl)" font-size="14" fill="#cfcfcf" text-anchor="middle">
<text x="90.43" y="838.4" textLength="37.58" lengthAdjust="spacingAndGlyphs">White</text>
<text x="97.69" y="858.4" textLength="52.29" lengthAdjust="spacingAndGlyphs">Gray 80</text>
<text x="104.96" y="838.4" textLength="15.53" lengthAdjust="spacingAndGlyphs">6J</text>
<text x="112.22" y="858.4" textLength="52.29" lengthAdjust="spacingAndGlyphs">Gray 65</text>
<text x="119.48" y="838.4" textLength="17.15" lengthAdjust="spacingAndGlyphs">5F</text>
<text x="126.75" y="858.4" textLength="52.29" lengthAdjust="spacingAndGlyphs">Gray 50</text>
<text x="134.01" y="838.4" textLength="12.26" lengthAdjust="spacingAndGlyphs">6I</text>
<text x="141.27" y="858.4" textLength="17.98" lengthAdjust="spacingAndGlyphs">6K</text>
<text x="148.53" y="838.4" textLength="52.29" lengthAdjust="spacingAndGlyphs">Gray 35</text>
<text x="155.8" y="858.4" textLength="19.61" lengthAdjust="spacingAndGlyphs">5G</text>
<text x="163.06" y="838.4" textLength="18.79" lengthAdjust="spacingAndGlyphs">6H</text>
<text x="170.32" y="858.4" textLength="18.79" lengthAdjust="spacingAndGlyphs">5H</text>
<text x="177.59" y="838.4" textLength="17.98" lengthAdjust="spacingAndGlyphs">7K</text>
<text x="184.85" y="858.4" textLength="19.61" lengthAdjust="spacingAndGlyphs">6G</text>
<text x="192.11" y="838.4" textLength="12.26" lengthAdjust="spacingAndGlyphs">5I</text>
<text x="199.38" y="858.4" textLength="17.15" lengthAdjust="spacingAndGlyphs">6F</text>
<text x="206.64" y="838.4" textLength="17.98" lengthAdjust="spacingAndGlyphs">8K</text>
<text x="213.9" y="858.4" textLength="15.53" lengthAdjust="spacingAndGlyphs">5J</text>
<text x="221.16" y="838.4" textLength="35.95" lengthAdjust="spacingAndGlyphs">Black</text>
<text x="228.43" y="858.4" textLength="63.72" lengthAdjust="spacingAndGlyphs">Dark Skin</text>
<text x="235.69" y="838.4" textLength="64.56" lengthAdjust="spacingAndGlyphs">Light Skin</text>
<text x="242.95" y="858.4" textLength="58.01" lengthAdjust="spacingAndGlyphs">Blue Sky</text>
<text x="250.22" y="838.4" textLength="48.21" lengthAdjust="spacingAndGlyphs">Foliage</text>
<text x="257.48" y="858.4" textLength="77.61" lengthAdjust="spacingAndGlyphs">Blue Flower</text>
<text x="264.74" y="838.4" textLength="84.98" lengthAdjust="spacingAndGlyphs">Bluish Green</text>
<text x="272" y="858.4" textLength="49.03" lengthAdjust="spacingAndGlyphs">Orange</text>
<text x="279.27" y="838.4" textLength="86.61" lengthAdjust="spacingAndGlyphs">Purplish Blue</text>
<text x="286.53" y="858.4" textLength="93.15" lengthAdjust="spacingAndGlyphs">Moderate Red</text>
<text x="293.79" y="838.4" textLength="42.49" lengthAdjust="spacingAndGlyphs">Purple</text>
<text x="301.06" y="858.4" textLength="86.89" lengthAdjust="spacingAndGlyphs">Yellow Green</text>
<text x="308.32" y="838.4" textLength="94.8" lengthAdjust="spacingAndGlyphs">Orange Yellow</text>
<text x="315.58" y="858.4" textLength="29.42" lengthAdjust="spacingAndGlyphs">Blue</text>
<text x="322.84" y="838.4" textLength="40.85" lengthAdjust="spacingAndGlyphs">Green</text>
<text x="330.11" y="858.4" textLength="26.97" lengthAdjust="spacingAndGlyphs">Red</text>
<text x="337.37" y="838.4" textLength="41.96" lengthAdjust="spacingAndGlyphs">Yellow</text>
<text x="344.63" y="858.4" textLength="57.21" lengthAdjust="spacingAndGlyphs">Magenta</text>
<text x="351.9" y="838.4" textLength="34.32" lengthAdjust="spacingAndGlyphs">Cyan</text>
<text x="359.16" y="858.4" textLength="17.98" lengthAdjust="spacingAndGlyphs">2B</text>
<text x="366.42" y="838.4" textLength="18.79" lengthAdjust="spacingAndGlyphs">2C</text>
<text x="373.68" y="858.4" textLength="18.79" lengthAdjust="spacingAndGlyphs">2D</text>
<text x="380.95" y="838.4" textLength="17.98" lengthAdjust="spacingAndGlyphs">2E</text>
<text x="388.21" y="858.4" textLength="17.15" lengthAdjust="spacingAndGlyphs">2F</text>
<text x="395.47" y="838.4" textLength="19.61" lengthAdjust="spacingAndGlyphs">2G</text>
<text x="402.74" y="858.4" textLength="18.79" lengthAdjust="spacingAndGlyphs">2H</text>
<text x="410" y="838.4" textLength="12.26" lengthAdjust="spacingAndGlyphs">2I</text>
<text x="417.26" y="858.4" textLength="15.53" lengthAdjust="spacingAndGlyphs">2J</text>
<text x="424.52" y="838.4" textLength="17.98" lengthAdjust="spacingAndGlyphs">2K</text>
<text x="431.79" y="858.4" textLength="16.35" lengthAdjust="spacingAndGlyphs">2L</text>
<text x="439.05" y="838.4" textLength="20.42" lengthAdjust="spacingAndGlyphs">2M</text>
<text x="446.31" y="858.4" textLength="17.98" lengthAdjust="spacingAndGlyphs">3B</text>
<text x="453.58" y="838.4" textLength="18.79" lengthAdjust="spacingAndGlyphs">3C</text>
<text x="460.84" y="858.4" textLength="18.79" lengthAdjust="spacingAndGlyphs">3D</text>
<text x="468.1" y="838.4" textLength="17.98" lengthAdjust="spacingAndGlyphs">3E</text>
<text x="475.37" y="858.4" textLength="17.15" lengthAdjust="spacingAndGlyphs">3F</text>
<text x="482.63" y="838.4" textLength="19.61" lengthAdjust="spacingAndGlyphs">3G</text>
<text x="489.89" y="858.4" textLength="18.79" lengthAdjust="spacingAndGlyphs">3H</text>
<text x="497.15" y="838.4" textLength="12.26" lengthAdjust="spacingAndGlyphs">3I</text>
<text x="504.42" y="858.4" textLength="15.53" lengthAdjust="spacingAndGlyphs">3J</text>
<text x="511.68" y="838.4" textLength="17.98" lengthAdjust="spacingAndGlyphs">3K</text>
<text x="518.94" y="858.4" textLength="16.35" lengthAdjust="spacingAndGlyphs">3L</text>
<text x="526.21" y="838.4" textLength="20.42" lengthAdjust="spacingAndGlyphs">3M</text>
<text x="533.47" y="858.4" textLength="17.98" lengthAdjust="spacingAndGlyphs">4B</text>
<text x="540.73" y="838.4" textLength="18.79" lengthAdjust="spacingAndGlyphs">4C</text>
<text x="547.99" y="858.4" textLength="18.79" lengthAdjust="spacingAndGlyphs">4D</text>
<text x="555.26" y="838.4" textLength="17.98" lengthAdjust="spacingAndGlyphs">4E</text>
<text x="562.52" y="858.4" textLength="17.15" lengthAdjust="spacingAndGlyphs">4F</text>
<text x="569.78" y="838.4" textLength="19.61" lengthAdjust="spacingAndGlyphs">4G</text>
<text x="577.05" y="858.4" textLength="18.79" lengthAdjust="spacingAndGlyphs">4H</text>
<text x="584.31" y="838.4" textLength="12.26" lengthAdjust="spacingAndGlyphs">4I</text>
<text x="591.57" y="858.4" textLength="15.53" lengthAdjust="spacingAndGlyphs">4J</text>
<text x="598.83" y="838.4" textLength="17.98" lengthAdjust="spacingAndGlyphs">4K</text>
<text x="606.1" y="858.4" textLength="16.35" lengthAdjust="spacingAndGlyphs">4L</text>
<text x="613.36" y="838.4" textLength="20.42" lengthAdjust="spacingAndGlyphs">4M</text>
<text x="620.62" y="858.4" textLength="17.98" lengthAdjust="spacingAndGlyphs">5B</text>
<text x="627.89" y="838.4" textLength="18.79" lengthAdjust="spacingAndGlyphs">5C</text>
<text x="635.15" y="858.4" textLength="18.79" lengthAdjust="spacingAndGlyphs">5D</text>
<text x="642.41" y="838.4" textLength="17.98" lengthAdjust="spacingAndGlyphs">5K</text>
<text x="649.67" y="858.4" textLength="16.35" lengthAdjust="spacingAndGlyphs">5L</text>
<text x="656.94" y="838.4" textLength="20.42" lengthAdjust="spacingAndGlyphs">5M</text>
<text x="664.2" y="858.4" textLength="17.98" lengthAdjust="spacingAndGlyphs">6B</text>
<text x="671.46" y="838.4" textLength="18.79" lengthAdjust="spacingAndGlyphs">6C</text>
<text x="678.73" y="858.4" textLength="18.79" lengthAdjust="spacingAndGlyphs">6D</text>
<text x="685.99" y="838.4" textLength="16.35" lengthAdjust="spacingAndGlyphs">6L</text>
<text x="693.25" y="858.4" textLength="20.42" lengthAdjust="spacingAndGlyphs">6M</text>
<text x="700.52" y="838.4" textLength="17.98" lengthAdjust="spacingAndGlyphs">7B</text>
<text x="707.78" y="858.4" textLength="18.79" lengthAdjust="spacingAndGlyphs">7C</text>
<text x="715.04" y="838.4" textLength="18.79" lengthAdjust="spacingAndGlyphs">7D</text>
<text x="722.3" y="858.4" textLength="17.98" lengthAdjust="spacingAndGlyphs">7E</text>
<text x="729.57" y="838.4" textLength="17.15" lengthAdjust="spacingAndGlyphs">7F</text>
<text x="736.83" y="858.4" textLength="19.61" lengthAdjust="spacingAndGlyphs">7G</text>
<text x="744.09" y="838.4" textLength="18.79" lengthAdjust="spacingAndGlyphs">7H</text>
<text x="751.36" y="858.4" textLength="12.26" lengthAdjust="spacingAndGlyphs">7I</text>
<text x="758.62" y="838.4" textLength="15.53" lengthAdjust="spacingAndGlyphs">7J</text>
<text x="765.88" y="858.4" textLength="16.35" lengthAdjust="spacingAndGlyphs">7L</text>
<text x="773.14" y="838.4" textLength="20.42" lengthAdjust="spacingAndGlyphs">7M</text>
<text x="780.41" y="858.4" textLength="17.98" lengthAdjust="spacingAndGlyphs">8B</text>
<text x="787.67" y="838.4" textLength="18.79" lengthAdjust="spacingAndGlyphs">8C</text>
<text x="794.93" y="858.4" textLength="18.79" lengthAdjust="spacingAndGlyphs">8D</text>
<text x="802.2" y="838.4" textLength="17.98" lengthAdjust="spacingAndGlyphs">8E</text>
<text x="809.46" y="858.4" textLength="17.15" lengthAdjust="spacingAndGlyphs">8F</text>
<text x="816.72" y="838.4" textLength="19.61" lengthAdjust="spacingAndGlyphs">8G</text>
<text x="823.98" y="858.4" textLength="18.79" lengthAdjust="spacingAndGlyphs">8H</text>
<text x="831.25" y="838.4" textLength="12.26" lengthAdjust="spacingAndGlyphs">8I</text>
<text x="838.51" y="858.4" textLength="15.53" lengthAdjust="spacingAndGlyphs">8J</text>
<text x="845.77" y="838.4" textLength="16.35" lengthAdjust="spacingAndGlyphs">8L</text>
<text x="853.04" y="858.4" textLength="20.42" lengthAdjust="spacingAndGlyphs">8M</text>
<text x="860.3" y="838.4" textLength="17.98" lengthAdjust="spacingAndGlyphs">9B</text>
<text x="867.56" y="858.4" textLength="18.79" lengthAdjust="spacingAndGlyphs">9C</text>
<text x="874.82" y="838.4" textLength="18.79" lengthAdjust="spacingAndGlyphs">9D</text>
<text x="882.09" y="858.4" textLength="17.98" lengthAdjust="spacingAndGlyphs">9E</text>
<text x="889.35" y="838.4" textLength="17.15" lengthAdjust="spacingAndGlyphs">9F</text>
<text x="896.61" y="858.4" textLength="19.61" lengthAdjust="spacingAndGlyphs">9G</text>
<text x="903.88" y="838.4" textLength="18.79" lengthAdjust="spacingAndGlyphs">9H</text>
<text x="911.14" y="858.4" textLength="12.26" lengthAdjust="spacingAndGlyphs">9I</text>
<text x="918.4" y="838.4" textLength="15.53" lengthAdjust="spacingAndGlyphs">9J</text>
<text x="925.67" y="858.4" textLength="17.98" lengthAdjust="spacingAndGlyphs">9K</text>
<text x="932.93" y="838.4" textLength="16.35" lengthAdjust="spacingAndGlyphs">9L</text>
<text x="940.19" y="858.4" textLength="20.42" lengthAdjust="spacingAndGlyphs">9M</text>
<text x="947.45" y="838.4" textLength="68.65" lengthAdjust="spacingAndGlyphs">100% Red</text>
<text x="954.72" y="858.4" textLength="82.53" lengthAdjust="spacingAndGlyphs">100% Green</text>
<text x="961.98" y="838.4" textLength="71.1" lengthAdjust="spacingAndGlyphs">100% Blue</text>
<text x="969.24" y="858.4" textLength="76" lengthAdjust="spacingAndGlyphs">100% Cyan</text>
<text x="976.51" y="838.4" textLength="98.89" lengthAdjust="spacingAndGlyphs">100% Magenta</text>
<text x="983.77" y="858.4" textLength="83.37" lengthAdjust="spacingAndGlyphs">100% Yellow</text>
</g>
<rect x="1045.5" y="145" width="693" height="694" fill="#282827"/>
<g clip-path="url(#cp)"><g transform="translate(1045.5 839.0) scale(1.15500 -1.15667)">
<clipPath id="lc"><path d="M256.8 16.6L256.6 16.6L256.4 16.3L256.1 16.3L255.7 15.9L255.2 15.9L254.5 15.9L253.7 15.9L252.2 16.9L249.6 19.1L246.1 22.6L241.1 27.9L234.7 35L226.6 43.7L216.1 54.9L203.3 68.8L187.7 87.1L169 111.9L144.1 151L114.7 204.4L82.8 270.8L52.1 342.7L28.2 411.7L11.9 469.8L3.5 513.1L1.4 543.2L4.6 563.8L12.3 577L23.1 583.7L36 586.1L50.1 586.8L64.3 586.5L79.2 585.6L95.3 584.1L112.7 582.1L131.9 579.6L153.1 576.6L176.6 573.2L202.6 569.4L231.2 565.1L262.3 560.4L296 555.4L331.5 550.1L368.1 544.6L403.5 539.3L437.9 534.2L469.2 529.6L496.8 525.4L520.3 521.9L539.9 519L556.5 516.5L570.9 514.3L583 512.5L592.9 511.1L600.5 509.9L606.4 509L610.9 508.4L613.8 507.9L616.2 507.6L618 507.3L619.9 507L621.5 506.8L622.6 506.6L623.1 506.5L623.4 506.5z"/></clipPath>
<g clip-path="url(#lc)"><g filter="url(#bl)" shape-rendering="crispEdges"><path fill="url(#g0)" d="M198.7 462L3 462L3.2 453z"/><path fill="url(#g1)" d="M198.7 462L5.3 453.9L5.9 445z"/><path fill="url(#g2)" d="M198.7 462L7.5 445.9L8.4 437.2z"/><path fill="url(#g3)" d="M198.7 462L9.7 438.1L11 429.5z"/><path fill="url(#g4)" d="M198.7 462L11.8 430.4L13.5 421.9z"/><path fill="url(#g5)" d="M198.7 462L14 422.7L16 414.3z"/><path fill="url(#g6)" d="M198.7 462L16.1 415.1L18.5 406.8z"/><path fill="url(#g7)" d="M198.7 462L18.3 407.5L21 399.3z"/><path fill="url(#g8)" d="M198.7 462L20.7 400L23.7 391.9z"/><path fill="url(#g9)" d="M198.7 462L23 392.4L26.3 384.4z"/><path fill="url(#g10)" d="M198.7 462L25.2 384.8L29 376.9z"/><path fill="url(#g11)" d="M198.7 462L27.5 377L31.6 369.3z"/><path fill="url(#g12)" d="M198.7 462L29.9 369.2L34.3 361.5z"/><path fill="url(#g13)" d="M198.7 462L32.2 361.2L37 353.7z"/><path fill="url(#g14)" d="M198.7 462L34.7 353L39.8 345.6z"/><path fill="url(#g15)" d="M198.7 462L37.2 344.6L42.7 337.3z"/><path fill="url(#g16)" d="M198.7 462L40.1 336.3L46.1 329.2z"/><path fill="url(#g17)" d="M198.7 462L43.3 327.8L49.6 320.9z"/><path fill="url(#g18)" d="M198.7 462L46.5 319.1L53.3 312.3z"/><path fill="url(#g19)" d="M198.7 462L49.9 310.1L57.1 303.4z"/><path fill="url(#g20)" d="M198.7 462L53.4 300.7L61 294.2z"/><path fill="url(#g21)" d="M198.7 462L57.1 290.9L65.1 284.5z"/><path fill="url(#g22)" d="M198.7 462L61 280.5L69.4 274.4z"/><path fill="url(#g23)" d="M198.7 462L65 269.7L74 263.7z"/><path fill="url(#g24)" d="M198.7 462L69.5 258.5L79 252.8z"/><path fill="url(#g25)" d="M198.7 462L74.5 246.9L84.5 241.4z"/><path fill="url(#g26)" d="M198.7 462L79.7 234.5L90.3 229.2z"/><path fill="url(#g27)" d="M198.7 462L85.4 221.2L96.5 216.2z"/><path fill="url(#g28)" d="M198.7 462L91.5 206.9L103.3 202.2z"/><path fill="url(#g29)" d="M198.7 462L98.1 191.5L110.6 187.2z"/><path fill="url(#g30)" d="M198.7 462L105.8 175.9L119 172z"/><path fill="url(#g31)" d="M198.7 462L114.1 159L128.1 155.4z"/><path fill="url(#g32)" d="M198.7 462L123.3 140.4L138.1 137.2z"/><path fill="url(#g33)" d="M198.7 462L133.7 121.4L149.4 118.8z"/><path fill="url(#g34)" d="M198.7 462L145.4 101.1L162 99z"/><path fill="url(#g35)" d="M198.7 462L159.2 86.4L171.4 85.3z"/><path fill="url(#g36)" d="M198.7 462L168 60.1L191.9 59z"/><path fill="url(#g37)" d="M198.7 462L189.8 39L209.2 39.1z"/><path fill="url(#g38)" d="M198.7 462L208 17.6L228.4 18.5z"/><path fill="url(#g39)" d="M198.7 462L228.1 -6.2L249.6 -4.4z"/><path fill="url(#g40)" d="M198.7 462L248.5 -12.1L270.2 -9.3z"/><path fill="url(#g41)" d="M198.7 462L267.1 -1.1L288.2 2.6z"/><path fill="url(#g42)" d="M198.7 462L283 20.2L303.1 24.5z"/><path fill="url(#g43)" d="M198.7 462L297.7 39.9L317 44.9z"/><path fill="url(#g44)" d="M198.7 462L311.4 58.2L329.8 63.8z"/><path fill="url(#g45)" d="M198.7 462L324.3 75.4L341.9 81.6z"/><path fill="url(#g46)" d="M198.7 462L336.4 91.6L353.3 98.3z"/><path fill="url(#g47)" d="M198.7 462L347.9 107L364.1 114.2z"/><path fill="url(#g48)" d="M198.7 462L358.9 121.6L374.3 129.3z"/><path fill="url(#g49)" d="M198.7 462L369.3 135.6L384.1 143.8z"/><path fill="url(#g50)" d="M198.7 462L379.4 149L393.6 157.6z"/><path fill="url(#g51)" d="M198.7 462L389.1 162L402.6 171z"/><path fill="url(#g52)" d="M198.7 462L398.5 174.5L411.5 184z"/><path fill="url(#g53)" d="M198.7 462L407.6 186.7L420 196.6z"/><path fill="url(#g54)" d="M198.7 462L416.5 198.7L428.4 208.9z"/><path fill="url(#g55)" d="M198.7 462L425.3 210.3L436.6 221z"/><path fill="url(#g56)" d="M198.7 462L433.9 221.8L444.6 232.9z"/><path fill="url(#g57)" d="M198.7 462L442.4 233.2L452.6 244.6z"/><path fill="url(#g58)" d="M198.7 462L450.8 244.4L460.5 256.2z"/><path fill="url(#g59)" d="M198.7 462L459.1 255.6L468.3 267.7z"/><path fill="url(#g60)" d="M198.7 462L467.9 266.4L476.6 278.9z"/><path fill="url(#g61)" d="M198.7 462L476.8 277.2L485 290.2z"/><path fill="url(#g62)" d="M198.7 462L485.8 288.1L493.5 301.5z"/><path fill="url(#g63)" d="M198.7 462L494.9 299.2L502 312.9z"/><path fill="url(#g64)" d="M198.7 462L504.1 310.4L510.7 324.6z"/><path fill="url(#g65)" d="M198.7 462L513.5 321.8L519.6 336.4z"/><path fill="url(#g66)" d="M198.7 462L523.1 333.5L528.7 348.6z"/><path fill="url(#g67)" d="M198.7 462L533 345.6L538 361z"/><path fill="url(#g68)" d="M198.7 462L543.2 358L547.6 373.9z"/><path fill="url(#g69)" d="M198.7 462L553.8 370.8L557.6 387.2z"/><path fill="url(#g70)" d="M198.7 462L564.8 384.2L568 401.1z"/><path fill="url(#g71)" d="M198.7 462L576.3 398.1L578.8 415.5z"/><path fill="url(#g72)" d="M198.7 462L588.3 412.8L590.2 430.7z"/><path fill="url(#g73)" d="M198.7 462L601 428.2L602.1 446.7z"/><path fill="url(#g74)" d="M198.7 462L614.5 444.6L614.8 463.7z"/><path fill="url(#g75)" d="M198.7 462L628.8 462L628.3 481.7z"/><path fill="url(#g76)" d="M198.7 462L644.2 480.7L642.8 501.1z"/><path fill="url(#g77)" d="M198.7 462L649.8 499.9L647.5 520.5z"/><path fill="url(#g78)" d="M198.7 462L613.7 514.4L610.9 533.4z"/><path fill="url(#g79)" d="M198.7 462L558 522.8L554.8 539.2z"/><path fill="url(#g80)" d="M198.7 462L514.9 529.2L512.6 539.2z"/><path fill="url(#g81)" d="M198.7 462L491.4 532.7L486.6 550.2z"/><path fill="url(#g82)" d="M198.7 462L452.2 538.5L448.4 550.1z"/><path fill="url(#g83)" d="M198.7 462L428.6 542.1L424.7 552.5z"/><path fill="url(#g84)" d="M198.7 462L408.5 545.1L404.5 554.6z"/><path fill="url(#g85)" d="M198.7 462L391.1 547.7L387 556.4z"/><path fill="url(#g86)" d="M198.7 462L375.9 549.9L371.6 558z"/><path fill="url(#g87)" d="M198.7 462L362.4 552L358.1 559.4z"/><path fill="url(#g88)" d="M198.7 462L350.3 553.8L345.9 560.6z"/><path fill="url(#g89)" d="M198.7 462L339.3 555.4L334.9 561.8z"/><path fill="url(#g90)" d="M198.7 462L329.3 556.9L324.8 562.8z"/><path fill="url(#g91)" d="M198.7 462L320.2 558.3L315.6 563.8z"/><path fill="url(#g92)" d="M198.7 462L311.7 559.5L307.1 564.6z"/><path fill="url(#g93)" d="M198.7 462L303.8 560.7L299.2 565.4z"/><path fill="url(#g94)" d="M198.7 462L296.4 561.8L291.8 566.2z"/><path fill="url(#g95)" d="M198.7 462L289.5 562.9L284.8 566.9z"/><path fill="url(#g96)" d="M198.7 462L282.9 563.8L278.2 567.6z"/><path fill="url(#g97)" d="M198.7 462L276.7 564.8L271.9 568.2z"/><path fill="url(#g98)" d="M198.7 462L270.7 565.7L265.9 568.9z"/><path fill="url(#g99)" d="M198.7 462L265 566.5L260.2 569.5z"/><path fill="url(#g100)" d="M198.7 462L259.5 567.3L254.6 570z"/><path fill="url(#g101)" d="M198.7 462L254.2 568.1L249.3 570.6z"/><path fill="url(#g102)" d="M198.7 462L249 568.9L244 571.1z"/><path fill="url(#g103)" d="M198.7 462L244 569.7L239 571.6z"/><path fill="url(#g104)" d="M198.7 462L239 570.4L234 572.1z"/><path fill="url(#g105)" d="M198.7 462L234.2 571.1L229.1 572.7z"/><path fill="url(#g106)" d="M198.7 462L229.4 571.9L224.3 573.1z"/><path fill="url(#g107)" d="M198.7 462L224.6 572.6L219.5 573.6z"/><path fill="url(#g108)" d="M198.7 462L219.9 573.3L214.8 574.1z"/><path fill="url(#g109)" d="M198.7 462L215.2 574.1L210.1 574.7z"/><path fill="url(#g110)" d="M198.7 462L210.6 575L205.4 575.4z"/><path fill="url(#g111)" d="M198.7 462L205.9 575.9L200.6 576.1z"/><path fill="url(#g112)" d="M198.7 462L201.1 576.8L195.8 576.8z"/><path fill="url(#g113)" d="M198.7 462L196.3 577.8L191 577.5z"/><path fill="url(#g114)" d="M198.7 462L191.3 578.7L186 578.3z"/><path fill="url(#g115)" d="M198.7 462L186.3 579.7L180.9 579z"/><path fill="url(#g116)" d="M198.7 462L181.2 580.7L175.7 579.8z"/><path fill="url(#g117)" d="M198.7 462L175.8 581.7L170.4 580.6z"/><path fill="url(#g118)" d="M198.7 462L170.4 582.8L164.8 581.4z"/><path fill="url(#g119)" d="M198.7 462L164.7 583.9L159.1 582.2z"/><path fill="url(#g120)" d="M198.7 462L158.7 585L153.1 583.1z"/><path fill="url(#g121)" d="M198.7 462L152.5 586.2L146.8 584z"/><path fill="url(#g122)" d="M198.7 462L146 587.4L140.3 584.9z"/><path fill="url(#g123)" d="M198.7 462L139.1 588.7L133.3 585.8z"/><path fill="url(#g124)" d="M198.7 462L131.7 590.1L125.9 586.9z"/><path fill="url(#g125)" d="M198.7 462L123.9 591.5L118.1 587.9z"/><path fill="url(#g126)" d="M198.7 462L115.6 592.9L109.7 589z"/><path fill="url(#g127)" d="M198.7 462L108.1 592.4L104.3 589.7z"/><path fill="url(#g128)" d="M198.7 462L103.3 592.1L100.7 590.1z"/><path fill="url(#g129)" d="M198.7 462L96.9 596L90.9 591.2z"/><path fill="url(#g130)" d="M198.7 462L86.6 597.5L80.5 592.2z"/><path fill="url(#g131)" d="M198.7 462L75.3 599L69.2 593.2z"/><path fill="url(#g132)" d="M198.7 462L63.2 600.3L57 593.9z"/><path fill="url(#g133)" d="M198.7 462L50.5 601.1L44.3 594.2z"/><path fill="url(#g134)" d="M198.7 462L37.2 601.4L31 593.8z"/><path fill="url(#g135)" d="M198.7 462L24.3 600.2L18.2 592z"/><path fill="url(#g136)" d="M198.7 462L13.6 596.5L7.6 587.9z"/><path fill="url(#g137)" d="M198.7 462L5.3 590.5L-0.4 581.5z"/><path fill="url(#g138)" d="M198.7 462L0.1 582.3L-5.2 573z"/><path fill="url(#g139)" d="M198.7 462L-4.9 573.9L-9.8 564.4z"/><path fill="url(#g140)" d="M198.7 462L-7.8 564.5L-12.3 554.9z"/><path fill="url(#g141)" d="M198.7 462L-9.4 554.6L-13.4 545z"/><path fill="url(#g142)" d="M198.7 462L-10.2 544.7L-13.7 535z"/><path fill="url(#g143)" d="M198.7 462L-9.5 534.5L-12.6 524.9z"/><path fill="url(#g144)" d="M198.7 462L-8.8 524.6L-11.5 515.1z"/><path fill="url(#g145)" d="M198.7 462L-8 515.1L-10.3 505.5z"/><path fill="url(#g146)" d="M198.7 462L-6.2 505.5L-8 496.1z"/><path fill="url(#g147)" d="M198.7 462L-4.4 496.3L-5.7 487z"/><path fill="url(#g148)" d="M198.7 462L-2.7 487.4L-3.6 478.2z"/><path fill="url(#g149)" d="M198.7 462L-1 478.8L-1.5 469.6z"/><path fill="url(#g150)" d="M198.7 462L0.7 470.3L0.5 461.2z"/></g></g>
<path d="M256.8 16.6L256.6 16.6L256.4 16.3L256.1 16.3L255.7 15.9L255.2 15.9L254.5 15.9L253.7 15.9L252.2 16.9L249.6 19.1L246.1 22.6L241.1 27.9L234.7 35L226.6 43.7L216.1 54.9L203.3 68.8L187.7 87.1L169 111.9L144.1 151L114.7 204.4L82.8 270.8L52.1 342.7L28.2 411.7L11.9 469.8L3.5 513.1L1.4 543.2L4.6 563.8L12.3 577L23.1 583.7L36 586.1L50.1 586.8L64.3 586.5L79.2 585.6L95.3 584.1L112.7 582.1L131.9 579.6L153.1 576.6L176.6 573.2L202.6 569.4L231.2 565.1L262.3 560.4L296 555.4L331.5 550.1L368.1 544.6L403.5 539.3L437.9 534.2L469.2 529.6L496.8 525.4L520.3 521.9L539.9 519L556.5 516.5L570.9 514.3L583 512.5L592.9 511.1L600.5 509.9L606.4 509L610.9 508.4L613.8 507.9L616.2 507.6L618 507.3L619.9 507L621.5 506.8L622.6 506.6L623.1 506.5L623.4 506.5zM450.7 522.9L125 562.5L175.4 157.9z" fill-rule="evenodd" fill="#000" fill-opacity="0.355"/>
</g></g>
<rect x="1045.5" y="145" width="693" height="694" fill="none" stroke="#8e8e8e" stroke-width="1.3"/>
<path d="M1045.5 145L1045.5 839" stroke="#b4b4b4" stroke-width="1.3"/>
<path d="M1045.5 839L1738.5 839" stroke="#b4b4b4" stroke-width="1.3"/>
<path d="M1045.5 839L1045.5 846" stroke="#d0d0d0" stroke-width="1.3"/>
<text x="1045.5" y="861" font-size="14" fill="#d4d4d4" text-anchor="middle">0</text>
<path d="M1040 839L1045.5 839" stroke="#d0d0d0" stroke-width="1.3"/>
<text x="1038.7" y="844.91" font-size="14" fill="#d4d4d4" text-anchor="end">0</text>
<path d="M1103.25 839L1103.25 846" stroke="#d0d0d0" stroke-width="1.3"/>
<text x="1103.25" y="861" font-size="14" fill="#d4d4d4" text-anchor="middle" textLength="29.15" lengthAdjust="spacingAndGlyphs">0,05</text>
<path d="M1040 781.17L1045.5 781.17" stroke="#d0d0d0" stroke-width="1.3"/>
<text x="1038.7" y="787.08" font-size="14" fill="#d4d4d4" text-anchor="end" textLength="29.15" lengthAdjust="spacingAndGlyphs">0,05</text>
<path d="M1161 839L1161 846" stroke="#d0d0d0" stroke-width="1.3"/>
<text x="1161" y="861" font-size="14" fill="#d4d4d4" text-anchor="middle" textLength="20.82" lengthAdjust="spacingAndGlyphs">0,1</text>
<path d="M1040 723.33L1045.5 723.33" stroke="#d0d0d0" stroke-width="1.3"/>
<text x="1038.7" y="729.25" font-size="14" fill="#d4d4d4" text-anchor="end" textLength="20.82" lengthAdjust="spacingAndGlyphs">0,1</text>
<path d="M1218.75 839L1218.75 846" stroke="#d0d0d0" stroke-width="1.3"/>
<text x="1218.75" y="861" font-size="14" fill="#d4d4d4" text-anchor="middle" textLength="29.15" lengthAdjust="spacingAndGlyphs">0,15</text>
<path d="M1040 665.5L1045.5 665.5" stroke="#d0d0d0" stroke-width="1.3"/>
<text x="1038.7" y="671.41" font-size="14" fill="#d4d4d4" text-anchor="end" textLength="29.15" lengthAdjust="spacingAndGlyphs">0,15</text>
<path d="M1276.5 839L1276.5 846" stroke="#d0d0d0" stroke-width="1.3"/>
<text x="1276.5" y="861" font-size="14" fill="#d4d4d4" text-anchor="middle" textLength="20.82" lengthAdjust="spacingAndGlyphs">0,2</text>
<path d="M1040 607.67L1045.5 607.67" stroke="#d0d0d0" stroke-width="1.3"/>
<text x="1038.7" y="613.58" font-size="14" fill="#d4d4d4" text-anchor="end" textLength="20.82" lengthAdjust="spacingAndGlyphs">0,2</text>
<path d="M1334.25 839L1334.25 846" stroke="#d0d0d0" stroke-width="1.3"/>
<text x="1334.25" y="861" font-size="14" fill="#d4d4d4" text-anchor="middle" textLength="29.15" lengthAdjust="spacingAndGlyphs">0,25</text>
<path d="M1040 549.83L1045.5 549.83" stroke="#d0d0d0" stroke-width="1.3"/>
<text x="1038.7" y="555.75" font-size="14" fill="#d4d4d4" text-anchor="end" textLength="29.15" lengthAdjust="spacingAndGlyphs">0,25</text>
<path d="M1392 839L1392 846" stroke="#d0d0d0" stroke-width="1.3"/>
<text x="1392" y="861" font-size="14" fill="#d4d4d4" text-anchor="middle" textLength="20.82" lengthAdjust="spacingAndGlyphs">0,3</text>
<path d="M1040 492L1045.5 492" stroke="#d0d0d0" stroke-width="1.3"/>
<text x="1038.7" y="497.91" font-size="14" fill="#d4d4d4" text-anchor="end" textLength="20.82" lengthAdjust="spacingAndGlyphs">0,3</text>
<path d="M1449.75 839L1449.75 846" stroke="#d0d0d0" stroke-width="1.3"/>
<text x="1449.75" y="861" font-size="14" fill="#d4d4d4" text-anchor="middle" textLength="29.15" lengthAdjust="spacingAndGlyphs">0,35</text>
<path d="M1040 434.17L1045.5 434.17" stroke="#d0d0d0" stroke-width="1.3"/>
<text x="1038.7" y="440.08" font-size="14" fill="#d4d4d4" text-anchor="end" textLength="29.15" lengthAdjust="spacingAndGlyphs">0,35</text>
<path d="M1507.5 839L1507.5 846" stroke="#d0d0d0" stroke-width="1.3"/>
<text x="1507.5" y="861" font-size="14" fill="#d4d4d4" text-anchor="middle" textLength="20.82" lengthAdjust="spacingAndGlyphs">0,4</text>
<path d="M1040 376.33L1045.5 376.33" stroke="#d0d0d0" stroke-width="1.3"/>
<text x="1038.7" y="382.25" font-size="14" fill="#d4d4d4" text-anchor="end" textLength="20.82" lengthAdjust="spacingAndGlyphs">0,4</text>
<path d="M1565.25 839L1565.25 846" stroke="#d0d0d0" stroke-width="1.3"/>
<text x="1565.25" y="861" font-size="14" fill="#d4d4d4" text-anchor="middle" textLength="29.15" lengthAdjust="spacingAndGlyphs">0,45</text>
<path d="M1040 318.5L1045.5 318.5" stroke="#d0d0d0" stroke-width="1.3"/>
<text x="1038.7" y="324.41" font-size="14" fill="#d4d4d4" text-anchor="end" textLength="29.15" lengthAdjust="spacingAndGlyphs">0,45</text>
<path d="M1623 839L1623 846" stroke="#d0d0d0" stroke-width="1.3"/>
<text x="1623" y="861" font-size="14" fill="#d4d4d4" text-anchor="middle" textLength="20.82" lengthAdjust="spacingAndGlyphs">0,5</text>
<path d="M1040 260.67L1045.5 260.67" stroke="#d0d0d0" stroke-width="1.3"/>
<text x="1038.7" y="266.58" font-size="14" fill="#d4d4d4" text-anchor="end" textLength="20.82" lengthAdjust="spacingAndGlyphs">0,5</text>
<path d="M1680.75 839L1680.75 846" stroke="#d0d0d0" stroke-width="1.3"/>
<text x="1680.75" y="861" font-size="14" fill="#d4d4d4" text-anchor="middle" textLength="29.15" lengthAdjust="spacingAndGlyphs">0,55</text>
<path d="M1040 202.83L1045.5 202.83" stroke="#d0d0d0" stroke-width="1.3"/>
<text x="1038.7" y="208.75" font-size="14" fill="#d4d4d4" text-anchor="end" textLength="29.15" lengthAdjust="spacingAndGlyphs">0,55</text>
<text x="1374" y="138.3" font-size="14" fill="#d4d4d4" text-anchor="middle" textLength="86" lengthAdjust="spacingAndGlyphs">CIE 1976 u'v'</text>
<text x="1565" y="828" font-size="18.5" fill="#f0f0f0" textLength="170" lengthAdjust="spacingAndGlyphs">RGB Triplet: 0, 0, 0</text>
<g clip-path="url(#cp)"><path d="M1181.4 181.1h13.6v13.6h-13.6zM1195.2 185.2h13.6v13.6h-13.6zM1200 189h13.6v13.6h-13.6zM1202.8 192.4h13.6v13.6h-13.6zM1205.8 208.1h13.6v13.6h-13.6zM1187.5 220.5h13.6v13.6h-13.6zM1212.6 219.1h13.6v13.6h-13.6zM1208.2 230.8h13.6v13.6h-13.6zM1199.3 240.8h13.6v13.6h-13.6zM1217.8 258.3h13.6v13.6h-13.6zM1195.4 269.8h13.6v13.6h-13.6zM1239.9 200.3h13.6v13.6h-13.6zM1248.9 197.9h13.6v13.6h-13.6zM1254.9 197.9h13.6v13.6h-13.6zM1257.4 189.7h13.6v13.6h-13.6zM1264.6 188.7h13.6v13.6h-13.6zM1275.9 190.2h13.6v13.6h-13.6zM1282 193.5h13.6v13.6h-13.6zM1283.3 195.8h13.6v13.6h-13.6zM1293 194.2h13.6v13.6h-13.6zM1306.5 197.5h13.6v13.6h-13.6zM1323.3 197.8h13.6v13.6h-13.6zM1323.8 199.4h13.6v13.6h-13.6zM1330.8 199.4h13.6v13.6h-13.6zM1344.3 205.1h13.6v13.6h-13.6zM1355.9 207.6h13.6v13.6h-13.6zM1365.9 201.1h13.6v13.6h-13.6zM1358.8 221.5h13.6v13.6h-13.6zM1373.7 219.1h13.6v13.6h-13.6zM1386.8 226.4h13.6v13.6h-13.6zM1248 227.4h13.6v13.6h-13.6zM1277.6 229.1h13.6v13.6h-13.6zM1301.3 234.8h13.6v13.6h-13.6zM1338.1 232h13.6v13.6h-13.6zM1355.6 232.7h13.6v13.6h-13.6zM1364.4 234.4h13.6v13.6h-13.6zM1364.1 241h13.6v13.6h-13.6zM1346.9 242.8h13.6v13.6h-13.6zM1343.7 240.2h13.6v13.6h-13.6zM1336.9 239.5h13.6v13.6h-13.6zM1330.3 243.4h13.6v13.6h-13.6zM1332.2 249.4h13.6v13.6h-13.6zM1312.7 244.6h13.6v13.6h-13.6zM1314.5 260.2h13.6v13.6h-13.6zM1308.7 260.2h13.6v13.6h-13.6zM1306.7 266.5h13.6v13.6h-13.6zM1257.9 250.9h13.6v13.6h-13.6zM1249.2 263.1h13.6v13.6h-13.6zM1381.2 269h13.6v13.6h-13.6zM1253.1 274.2h13.6v13.6h-13.6zM1272 274.2h13.6v13.6h-13.6zM1286.4 273.2h13.6v13.6h-13.6zM1213.4 277.2h13.6v13.6h-13.6zM1396.3 210.8h13.6v13.6h-13.6zM1401.4 213.8h13.6v13.6h-13.6zM1390.1 223.6h13.6v13.6h-13.6zM1386.8 229.2h13.6v13.6h-13.6zM1429 210.6h13.6v13.6h-13.6zM1463.4 214.9h13.6v13.6h-13.6zM1528.7 227.7h13.6v13.6h-13.6zM1549.1 235.9h13.6v13.6h-13.6zM1553.3 229.7h13.6v13.6h-13.6zM1557.9 225.9h13.6v13.6h-13.6zM1393.8 248.5h13.6v13.6h-13.6zM1477.8 248.3h13.6v13.6h-13.6zM1494.7 249.8h13.6v13.6h-13.6zM1478.7 263.5h13.6v13.6h-13.6zM1514 265.2h13.6v13.6h-13.6zM1421.2 268.8h13.6v13.6h-13.6zM1195.5 275.5h13.6v13.6h-13.6zM1195.5 281.4h13.6v13.6h-13.6zM1198.6 305h13.6v13.6h-13.6zM1203.8 312.6h13.6v13.6h-13.6zM1201.5 326.8h13.6v13.6h-13.6zM1219.8 327.5h13.6v13.6h-13.6zM1241.6 327.1h13.6v13.6h-13.6zM1241.1 334.3h13.6v13.6h-13.6zM1275.9 332.3h13.6v13.6h-13.6zM1326.9 308.3h13.6v13.6h-13.6zM1204.1 342.2h13.6v13.6h-13.6zM1203.8 355.1h13.6v13.6h-13.6zM1239.9 352.4h13.6v13.6h-13.6zM1263.6 357.9h13.6v13.6h-13.6zM1327.2 353.4h13.6v13.6h-13.6zM1381.5 339.9h13.6v13.6h-13.6zM1420 308.1h13.6v13.6h-13.6zM1432 318.3h13.6v13.6h-13.6zM1469.9 316.3h13.6v13.6h-13.6zM1208.9 388.5h13.6v13.6h-13.6zM1285.2 378.8h13.6v13.6h-13.6zM1306.7 393.4h13.6v13.6h-13.6zM1352.1 398.3h13.6v13.6h-13.6zM1386.4 422.8h13.6v13.6h-13.6zM1392 450.1h13.6v13.6h-13.6zM1214.5 436.9h13.6v13.6h-13.6zM1241.9 441.4h13.6v13.6h-13.6zM1239.2 447.4h13.6v13.6h-13.6zM1242.9 521.1h13.6v13.6h-13.6zM1230.4 553.2h13.6v13.6h-13.6zM1242.1 649.4h13.6v13.6h-13.6z" fill="#fff" fill-opacity="0.1" stroke="#fff" stroke-opacity="0.88" stroke-width="1.5"/><rect x="1266.7" y="290.2" width="13.6" height="13.6" fill="none" stroke="#050505" stroke-width="2.4"/><rect x="1268.7" y="292.2" width="9.6" height="9.6" fill="none" stroke="#e8e8e8" stroke-width="1"/><g stroke="#141414" stroke-width="1.4"><circle cx="1188.7" cy="187.4" r="4.3" fill="#3df03d"/><circle cx="1201.5" cy="192.5" r="4.3" fill="#5a8a3a"/><circle cx="1206.8" cy="195.3" r="4.3" fill="#6a9a4a"/><circle cx="1209.6" cy="198.2" r="4.3" fill="#4a7a34"/><circle cx="1212.1" cy="215.9" r="4.3" fill="#5a9060"/><circle cx="1193.8" cy="228.3" r="4.3" fill="#2a8a6a"/><circle cx="1219.4" cy="225.9" r="4.3" fill="#6a9a68"/><circle cx="1214.5" cy="238.1" r="4.3" fill="#2a4a38"/><circle cx="1206.6" cy="246.6" r="4.3" fill="#4a9a78"/><circle cx="1224.6" cy="264.6" r="4.3" fill="#7ab8a0"/><circle cx="1201.7" cy="276.6" r="4.3" fill="#2a8a88"/><circle cx="1246.7" cy="206.1" r="4.3" fill="#7a9a48"/><circle cx="1256.2" cy="205.2" r="4.3" fill="#a0a860"/><circle cx="1260.7" cy="205.2" r="4.3" fill="#5a6830"/><circle cx="1263.7" cy="196.5" r="4.3" fill="#a8b030"/><circle cx="1270.4" cy="196.5" r="4.3" fill="#98a838"/><circle cx="1281.7" cy="198" r="4.3" fill="#f0e030"/><circle cx="1289.3" cy="199.8" r="4.3" fill="#90902c"/><circle cx="1291.1" cy="202.6" r="4.3" fill="#8a9a38"/><circle cx="1300.8" cy="201" r="4.3" fill="#c0b030"/><circle cx="1313.3" cy="203.8" r="4.3" fill="#e8c840"/><circle cx="1329.1" cy="204.6" r="4.3" fill="#b09030"/><circle cx="1329.6" cy="206.2" r="4.3" fill="#a88a30"/><circle cx="1337.6" cy="205.2" r="4.3" fill="#f0b828"/><circle cx="1350.6" cy="211.9" r="4.3" fill="#e0a038"/><circle cx="1363.2" cy="214.4" r="4.3" fill="#b08030"/><circle cx="1373.7" cy="208.9" r="4.3" fill="#f0a820"/><circle cx="1366.1" cy="228.3" r="4.3" fill="#8a5a30"/><circle cx="1381" cy="225.9" r="4.3" fill="#7a5030"/><circle cx="1392.6" cy="233.2" r="4.3" fill="#3a2a20"/><circle cx="1253.8" cy="234.2" r="4.3" fill="#5a6a40"/><circle cx="1284.4" cy="235.4" r="4.3" fill="#d8d088"/><circle cx="1308.1" cy="241.1" r="4.3" fill="#3a3428"/><circle cx="1344.9" cy="238.3" r="4.3" fill="#c08868"/><circle cx="1361.9" cy="239.5" r="4.3" fill="#c89070"/><circle cx="1370.7" cy="241.7" r="4.3" fill="#d89078"/><circle cx="1370.9" cy="246.8" r="4.3" fill="#e89880"/><circle cx="1354.7" cy="249.6" r="4.3" fill="#d88868"/><circle cx="1350" cy="246" r="4.3" fill="#c88058"/><circle cx="1342.7" cy="246.8" r="4.3" fill="#c89070"/><circle cx="1336.1" cy="250.2" r="4.3" fill="#b88060"/><circle cx="1338.5" cy="255.7" r="4.3" fill="#7a5838"/><circle cx="1319" cy="252.4" r="4.3" fill="#f0b8a0"/><circle cx="1320.3" cy="266" r="4.3" fill="#c8a088"/><circle cx="1316" cy="266" r="4.3" fill="#f0c0a8"/><circle cx="1313" cy="273.3" r="4.3" fill="#f8c8b8"/><circle cx="1264.7" cy="258.7" r="4.3" fill="#d0d8b0"/><circle cx="1257" cy="269.9" r="4.3" fill="#b0c8b0"/><circle cx="1387" cy="275.8" r="4.3" fill="#e07878"/><circle cx="1260.9" cy="281" r="4.3" fill="#c0c8b8"/><circle cx="1279.8" cy="281" r="4.3" fill="#d8d0c0"/><circle cx="1293.7" cy="281" r="4.3" fill="#e8c0b8"/><circle cx="1220.2" cy="284" r="4.3" fill="#70b8a0"/><circle cx="1403.1" cy="218.6" r="4.3" fill="#d09048"/><circle cx="1409.2" cy="220.1" r="4.3" fill="#b07040"/><circle cx="1396.4" cy="231.4" r="4.3" fill="#c08050"/><circle cx="1393.6" cy="235" r="4.3" fill="#3a2818"/><circle cx="1435.3" cy="217.4" r="4.3" fill="#f09830"/><circle cx="1469.7" cy="221.7" r="4.3" fill="#f89828"/><circle cx="1535" cy="235" r="4.3" fill="#e86050"/><circle cx="1556.9" cy="242.7" r="4.3" fill="#d02848"/><circle cx="1561.1" cy="237.5" r="4.3" fill="#d83040"/><circle cx="1565.7" cy="232.2" r="4.3" fill="#f83820"/><circle cx="1400.1" cy="256.3" r="4.3" fill="#e08080"/><circle cx="1485.1" cy="255.1" r="4.3" fill="#d86068"/><circle cx="1501.5" cy="256.1" r="4.3" fill="#c85060"/><circle cx="1485.5" cy="270.8" r="4.3" fill="#6a2038"/><circle cx="1519.8" cy="273" r="4.3" fill="#d03868"/><circle cx="1428" cy="275.6" r="4.3" fill="#d87088"/><circle cx="1202.3" cy="282.8" r="4.3" fill="#1e4a48"/><circle cx="1202.3" cy="288.2" r="4.3" fill="#3a9a90"/><circle cx="1205.4" cy="311.3" r="4.3" fill="#30e8f0"/><circle cx="1210.6" cy="318.4" r="4.3" fill="#4a9aa0"/><circle cx="1207.8" cy="332.6" r="4.3" fill="#2a808a"/><circle cx="1226.1" cy="335.3" r="4.3" fill="#5a90a8"/><circle cx="1247.9" cy="333.4" r="4.3" fill="#6a7888"/><circle cx="1247.9" cy="341.1" r="4.3" fill="#8098b0"/><circle cx="1281.7" cy="338.1" r="4.3" fill="#807890"/><circle cx="1332.7" cy="315.6" r="4.3" fill="#c890a0"/><circle cx="1210.9" cy="349" r="4.3" fill="#1e4a58"/><circle cx="1210.6" cy="361.4" r="4.3" fill="#3088a0"/><circle cx="1246.7" cy="358.7" r="4.3" fill="#6080a8"/><circle cx="1270.4" cy="365.7" r="4.3" fill="#8080b0"/><circle cx="1334" cy="359.7" r="4.3" fill="#4a3048"/><circle cx="1388.3" cy="347.7" r="4.3" fill="#c06080"/><circle cx="1426.8" cy="314.4" r="4.3" fill="#5a2838"/><circle cx="1438.3" cy="324.1" r="4.3" fill="#c85080"/><circle cx="1477.2" cy="324.1" r="4.3" fill="#a03060"/><circle cx="1214.7" cy="394.3" r="4.3" fill="#3090c0"/><circle cx="1292" cy="385.6" r="4.3" fill="#807098"/><circle cx="1313.5" cy="399.2" r="4.3" fill="#6a5078"/><circle cx="1358.9" cy="404.6" r="4.3" fill="#4a2848"/><circle cx="1392.2" cy="429.6" r="4.3" fill="#703070"/><circle cx="1397.8" cy="456.9" r="4.3" fill="#f030f0"/><circle cx="1222.3" cy="443.2" r="4.3" fill="#1e4a68"/><circle cx="1249.7" cy="447.2" r="4.3" fill="#5868a8"/><circle cx="1247" cy="454.2" r="4.3" fill="#5060a0"/><circle cx="1249.7" cy="526.9" r="4.3" fill="#384898"/><circle cx="1237.2" cy="560" r="4.3" fill="#182858"/><circle cx="1248.4" cy="655.7" r="4.3" fill="#1010f0"/><circle cx="1274" cy="297" r="4.3" fill="#303030"/></g></g>
<defs><linearGradient id="h0" gradientUnits="userSpaceOnUse" x1="308.3" y1="318.6" x2="41.5" y2="307"><stop offset="0" stop-color="#ffffff"/><stop offset="0.066" stop-color="#c2ffff"/><stop offset="0.148" stop-color="#8affff"/><stop offset="0.23" stop-color="#65ffff"/><stop offset="0.328" stop-color="#54fdff"/><stop offset="0.664" stop-color="#53fcff"/><stop offset="1" stop-color="#53fbff"/></linearGradient><linearGradient id="h1" gradientUnits="userSpaceOnUse" x1="308.3" y1="318.6" x2="46.8" y2="284.2"><stop offset="0" stop-color="#ffffff"/><stop offset="0.069" stop-color="#c0ffff"/><stop offset="0.154" stop-color="#87feff"/><stop offset="0.24" stop-color="#61f5ff"/><stop offset="0.343" stop-color="#4eeaff"/><stop offset="0.672" stop-color="#4adeff"/><stop offset="1" stop-color="#48d6ff"/></linearGradient><linearGradient id="h2" gradientUnits="userSpaceOnUse" x1="308.3" y1="318.6" x2="53.3" y2="262.1"><stop offset="0" stop-color="#ffffff"/><stop offset="0.072" stop-color="#bffdff"/><stop offset="0.163" stop-color="#84f3ff"/><stop offset="0.253" stop-color="#5de6ff"/><stop offset="0.361" stop-color="#48d8ff"/><stop offset="0.681" stop-color="#42c3ff"/><stop offset="1" stop-color="#3eb5ff"/></linearGradient><linearGradient id="h3" gradientUnits="userSpaceOnUse" x1="308.3" y1="318.6" x2="58.2" y2="239.8"><stop offset="0" stop-color="#ffffff"/><stop offset="0.076" stop-color="#bdf8ff"/><stop offset="0.171" stop-color="#81e8ff"/><stop offset="0.265" stop-color="#59d7ff"/><stop offset="0.379" stop-color="#43c5ff"/><stop offset="0.689" stop-color="#3baaff"/><stop offset="1" stop-color="#3598ff"/></linearGradient><linearGradient id="h4" gradientUnits="userSpaceOnUse" x1="308.3" y1="318.6" x2="62.7" y2="216.9"><stop offset="0" stop-color="#ffffff"/><stop offset="0.08" stop-color="#bbf2ff"/><stop offset="0.179" stop-color="#7eddff"/><stop offset="0.279" stop-color="#55c7ff"/><stop offset="0.398" stop-color="#3db1ff"/><stop offset="0.699" stop-color="#3392ff"/><stop offset="1" stop-color="#2d7eff"/></linearGradient><linearGradient id="h5" gradientUnits="userSpaceOnUse" x1="308.3" y1="318.6" x2="68.8" y2="193.9"><stop offset="0" stop-color="#ffffff"/><stop offset="0.084" stop-color="#b9ebff"/><stop offset="0.19" stop-color="#7ad0ff"/><stop offset="0.295" stop-color="#50b7ff"/><stop offset="0.422" stop-color="#379dff"/><stop offset="0.711" stop-color="#2d7cff"/><stop offset="1" stop-color="#2667ff"/></linearGradient><linearGradient id="h6" gradientUnits="userSpaceOnUse" x1="308.3" y1="318.6" x2="75.4" y2="170.3"><stop offset="0" stop-color="#ffffff"/><stop offset="0.09" stop-color="#b6e4ff"/><stop offset="0.203" stop-color="#76c2ff"/><stop offset="0.316" stop-color="#4ba5ff"/><stop offset="0.451" stop-color="#3088ff"/><stop offset="0.726" stop-color="#2667ff"/><stop offset="1" stop-color="#2051ff"/></linearGradient><linearGradient id="h7" gradientUnits="userSpaceOnUse" x1="308.3" y1="318.6" x2="82.4" y2="145.3"><stop offset="0" stop-color="#ffffff"/><stop offset="0.097" stop-color="#b3dbff"/><stop offset="0.219" stop-color="#71b2ff"/><stop offset="0.341" stop-color="#4591ff"/><stop offset="0.487" stop-color="#2a72ff"/><stop offset="0.743" stop-color="#2052ff"/><stop offset="1" stop-color="#1a3dff"/></linearGradient><linearGradient id="h8" gradientUnits="userSpaceOnUse" x1="308.3" y1="318.6" x2="91.2" y2="119.6"><stop offset="0" stop-color="#ffffff"/><stop offset="0.107" stop-color="#afd0ff"/><stop offset="0.24" stop-color="#6ba0ff"/><stop offset="0.374" stop-color="#3e7bff"/><stop offset="0.534" stop-color="#225aff"/><stop offset="0.767" stop-color="#1a3eff"/><stop offset="1" stop-color="#142cff"/></linearGradient><linearGradient id="h9" gradientUnits="userSpaceOnUse" x1="308.3" y1="318.6" x2="101" y2="92.4"><stop offset="0" stop-color="#ffffff"/><stop offset="0.12" stop-color="#aac3ff"/><stop offset="0.269" stop-color="#648aff"/><stop offset="0.419" stop-color="#3762ff"/><stop offset="0.599" stop-color="#1b41ff"/><stop offset="0.799" stop-color="#142bff"/><stop offset="1" stop-color="#101cff"/></linearGradient><linearGradient id="h10" gradientUnits="userSpaceOnUse" x1="308.3" y1="318.6" x2="113.5" y2="64.7"><stop offset="0" stop-color="#ffffff"/><stop offset="0.139" stop-color="#a4b2ff"/><stop offset="0.313" stop-color="#5a70ff"/><stop offset="0.487" stop-color="#2e45ff"/><stop offset="0.696" stop-color="#1326ff"/><stop offset="0.848" stop-color="#0f18ff"/><stop offset="1" stop-color="#0c0fff"/></linearGradient><linearGradient id="h11" gradientUnits="userSpaceOnUse" x1="308.3" y1="318.6" x2="128.1" y2="43.6"><stop offset="0" stop-color="#ffffff"/><stop offset="0.167" stop-color="#9c9dff"/><stop offset="0.375" stop-color="#5055ff"/><stop offset="0.583" stop-color="#252bff"/><stop offset="0.833" stop-color="#0c10ff"/><stop offset="0.916" stop-color="#0b0cff"/><stop offset="1" stop-color="#0a0aff"/></linearGradient><linearGradient id="h12" gradientUnits="userSpaceOnUse" x1="308.3" y1="318.6" x2="147.6" y2="19.4"><stop offset="0" stop-color="#ffffff"/><stop offset="0.163" stop-color="#a898ff"/><stop offset="0.366" stop-color="#614dff"/><stop offset="0.569" stop-color="#3524ff"/><stop offset="0.813" stop-color="#180dff"/><stop offset="0.907" stop-color="#120cff"/><stop offset="1" stop-color="#0d0bff"/></linearGradient><linearGradient id="h13" gradientUnits="userSpaceOnUse" x1="308.3" y1="318.6" x2="177.4" y2="2.6"><stop offset="0" stop-color="#ffffff"/><stop offset="0.141" stop-color="#c19eff"/><stop offset="0.316" stop-color="#8656ff"/><stop offset="0.492" stop-color="#5d2dff"/><stop offset="0.703" stop-color="#3d15ff"/><stop offset="0.851" stop-color="#3012ff"/><stop offset="1" stop-color="#2510ff"/></linearGradient><linearGradient id="h14" gradientUnits="userSpaceOnUse" x1="308.3" y1="318.6" x2="211.6" y2="12"><stop offset="0" stop-color="#ffffff"/><stop offset="0.135" stop-color="#d3a3ff"/><stop offset="0.304" stop-color="#a45dff"/><stop offset="0.474" stop-color="#7f34ff"/><stop offset="0.676" stop-color="#611cff"/><stop offset="0.838" stop-color="#5319ff"/><stop offset="1" stop-color="#4817ff"/></linearGradient><linearGradient id="h15" gradientUnits="userSpaceOnUse" x1="308.3" y1="318.6" x2="244.1" y2="28.8"><stop offset="0" stop-color="#ffffff"/><stop offset="0.135" stop-color="#e4a8ff"/><stop offset="0.303" stop-color="#c063ff"/><stop offset="0.472" stop-color="#a23bff"/><stop offset="0.674" stop-color="#8824ff"/><stop offset="0.837" stop-color="#7b21ff"/><stop offset="1" stop-color="#711fff"/></linearGradient><linearGradient id="h16" gradientUnits="userSpaceOnUse" x1="308.3" y1="318.6" x2="272.1" y2="43.3"><stop offset="0" stop-color="#ffffff"/><stop offset="0.134" stop-color="#f3abff"/><stop offset="0.302" stop-color="#db69ff"/><stop offset="0.47" stop-color="#c442ff"/><stop offset="0.671" stop-color="#af2cff"/><stop offset="0.836" stop-color="#a62aff"/><stop offset="1" stop-color="#9f29ff"/></linearGradient><linearGradient id="h17" gradientUnits="userSpaceOnUse" x1="308.3" y1="318.6" x2="296.8" y2="56.2"><stop offset="0" stop-color="#ffffff"/><stop offset="0.134" stop-color="#ffafff"/><stop offset="0.301" stop-color="#f66eff"/><stop offset="0.468" stop-color="#e748ff"/><stop offset="0.669" stop-color="#d935ff"/><stop offset="0.835" stop-color="#d434ff"/><stop offset="1" stop-color="#d033ff"/></linearGradient><linearGradient id="h18" gradientUnits="userSpaceOnUse" x1="308.3" y1="318.6" x2="319.3" y2="67.8"><stop offset="0" stop-color="#ffffff"/><stop offset="0.133" stop-color="#ffb1ff"/><stop offset="0.3" stop-color="#ff72ff"/><stop offset="0.467" stop-color="#ff4dff"/><stop offset="0.667" stop-color="#fc3cff"/><stop offset="1" stop-color="#fc3cff"/></linearGradient><linearGradient id="h19" gradientUnits="userSpaceOnUse" x1="308.3" y1="318.6" x2="339.9" y2="78.5"><stop offset="0" stop-color="#ffffff"/><stop offset="0.133" stop-color="#ffacff"/><stop offset="0.299" stop-color="#ff6eff"/><stop offset="0.466" stop-color="#ff4bff"/><stop offset="0.665" stop-color="#fb3af8"/><stop offset="0.833" stop-color="#fa3af2"/><stop offset="1" stop-color="#fa3aee"/></linearGradient><linearGradient id="h20" gradientUnits="userSpaceOnUse" x1="308.3" y1="318.6" x2="359.3" y2="88.6"><stop offset="0" stop-color="#ffffff"/><stop offset="0.133" stop-color="#ffa9fe"/><stop offset="0.299" stop-color="#ff6af3"/><stop offset="0.465" stop-color="#ff48e6"/><stop offset="0.664" stop-color="#f939db"/><stop offset="0.832" stop-color="#f939d2"/><stop offset="1" stop-color="#f939cb"/></linearGradient><linearGradient id="h21" gradientUnits="userSpaceOnUse" x1="308.3" y1="318.6" x2="377.8" y2="98.2"><stop offset="0" stop-color="#ffffff"/><stop offset="0.132" stop-color="#ffa5f5"/><stop offset="0.298" stop-color="#ff67e3"/><stop offset="0.464" stop-color="#ff47d2"/><stop offset="0.662" stop-color="#f938c3"/><stop offset="0.831" stop-color="#f838b9"/><stop offset="1" stop-color="#f838b1"/></linearGradient><linearGradient id="h22" gradientUnits="userSpaceOnUse" x1="308.3" y1="318.6" x2="395.8" y2="107.5"><stop offset="0" stop-color="#ffffff"/><stop offset="0.132" stop-color="#ffa2ed"/><stop offset="0.297" stop-color="#ff64d5"/><stop offset="0.463" stop-color="#ff45c0"/><stop offset="0.661" stop-color="#f837b0"/><stop offset="0.83" stop-color="#f737a4"/><stop offset="1" stop-color="#f7379c"/></linearGradient><linearGradient id="h23" gradientUnits="userSpaceOnUse" x1="308.3" y1="318.6" x2="413.9" y2="115.8"><stop offset="0" stop-color="#ffffff"/><stop offset="0.131" stop-color="#ff9fe6"/><stop offset="0.295" stop-color="#ff62c8"/><stop offset="0.46" stop-color="#fe44b1"/><stop offset="0.657" stop-color="#f7379f"/><stop offset="0.828" stop-color="#f73693"/><stop offset="1" stop-color="#f6368a"/></linearGradient><linearGradient id="h24" gradientUnits="userSpaceOnUse" x1="308.3" y1="318.6" x2="432.6" y2="123.4"><stop offset="0" stop-color="#ffffff"/><stop offset="0.13" stop-color="#ff9cdf"/><stop offset="0.292" stop-color="#ff5fbc"/><stop offset="0.455" stop-color="#fe42a4"/><stop offset="0.65" stop-color="#f73691"/><stop offset="0.825" stop-color="#f63684"/><stop offset="1" stop-color="#f6357a"/></linearGradient><linearGradient id="h25" gradientUnits="userSpaceOnUse" x1="308.3" y1="318.6" x2="452" y2="131.3"><stop offset="0" stop-color="#ffffff"/><stop offset="0.129" stop-color="#ff99d8"/><stop offset="0.289" stop-color="#ff5db1"/><stop offset="0.45" stop-color="#fd4197"/><stop offset="0.643" stop-color="#f63684"/><stop offset="0.822" stop-color="#f53577"/><stop offset="1" stop-color="#f5356d"/></linearGradient><linearGradient id="h26" gradientUnits="userSpaceOnUse" x1="308.3" y1="318.6" x2="472.3" y2="139.6"><stop offset="0" stop-color="#ffffff"/><stop offset="0.127" stop-color="#ff97d1"/><stop offset="0.286" stop-color="#ff5ba7"/><stop offset="0.445" stop-color="#fc408c"/><stop offset="0.636" stop-color="#f63578"/><stop offset="0.818" stop-color="#f5356b"/><stop offset="1" stop-color="#f53461"/></linearGradient><linearGradient id="h27" gradientUnits="userSpaceOnUse" x1="308.3" y1="318.6" x2="494" y2="148.4"><stop offset="0" stop-color="#ffffff"/><stop offset="0.126" stop-color="#ff94ca"/><stop offset="0.283" stop-color="#ff599d"/><stop offset="0.44" stop-color="#fc3f81"/><stop offset="0.629" stop-color="#f5356e"/><stop offset="0.814" stop-color="#f53460"/><stop offset="1" stop-color="#f43457"/></linearGradient><linearGradient id="h28" gradientUnits="userSpaceOnUse" x1="308.3" y1="318.6" x2="517.5" y2="158"><stop offset="0" stop-color="#ffffff"/><stop offset="0.124" stop-color="#ff91c3"/><stop offset="0.28" stop-color="#ff5794"/><stop offset="0.435" stop-color="#fb3e77"/><stop offset="0.621" stop-color="#f53464"/><stop offset="0.811" stop-color="#f43456"/><stop offset="1" stop-color="#f4344d"/></linearGradient><linearGradient id="h29" gradientUnits="userSpaceOnUse" x1="308.3" y1="318.6" x2="543.6" y2="168.7"><stop offset="0" stop-color="#ffffff"/><stop offset="0.123" stop-color="#ff8fbc"/><stop offset="0.276" stop-color="#ff558a"/><stop offset="0.429" stop-color="#fa3d6e"/><stop offset="0.613" stop-color="#f4345a"/><stop offset="0.806" stop-color="#f4344d"/><stop offset="1" stop-color="#f33344"/></linearGradient><linearGradient id="h30" gradientUnits="userSpaceOnUse" x1="308.3" y1="318.6" x2="573.2" y2="180.7"><stop offset="0" stop-color="#ffffff"/><stop offset="0.121" stop-color="#ff8cb5"/><stop offset="0.272" stop-color="#ff5381"/><stop offset="0.423" stop-color="#fa3c64"/><stop offset="0.604" stop-color="#f43451"/><stop offset="0.802" stop-color="#f33344"/><stop offset="1" stop-color="#f3333c"/></linearGradient><linearGradient id="h31" gradientUnits="userSpaceOnUse" x1="308.3" y1="318.6" x2="607.4" y2="194.7"><stop offset="0" stop-color="#ffffff"/><stop offset="0.119" stop-color="#ff89ad"/><stop offset="0.267" stop-color="#ff5177"/><stop offset="0.415" stop-color="#f93b5b"/><stop offset="0.594" stop-color="#f43349"/><stop offset="0.797" stop-color="#f3333c"/><stop offset="1" stop-color="#f33335"/></linearGradient><linearGradient id="h32" gradientUnits="userSpaceOnUse" x1="308.3" y1="318.6" x2="648.4" y2="211.4"><stop offset="0" stop-color="#ffffff"/><stop offset="0.116" stop-color="#ff85a4"/><stop offset="0.262" stop-color="#ff4f6d"/><stop offset="0.407" stop-color="#f93b52"/><stop offset="0.582" stop-color="#f33341"/><stop offset="0.791" stop-color="#f33335"/><stop offset="1" stop-color="#f3322e"/></linearGradient><linearGradient id="h33" gradientUnits="userSpaceOnUse" x1="308.3" y1="318.6" x2="698.9" y2="232"><stop offset="0" stop-color="#ffffff"/><stop offset="0.114" stop-color="#ff819b"/><stop offset="0.255" stop-color="#ff4d63"/><stop offset="0.397" stop-color="#f83a48"/><stop offset="0.568" stop-color="#f33339"/><stop offset="0.784" stop-color="#f3322e"/><stop offset="1" stop-color="#f23228"/></linearGradient><linearGradient id="h34" gradientUnits="userSpaceOnUse" x1="308.3" y1="318.6" x2="734.3" y2="262.5"><stop offset="0" stop-color="#ffffff"/><stop offset="0.118" stop-color="#ff7d90"/><stop offset="0.265" stop-color="#ff4b58"/><stop offset="0.412" stop-color="#f7393f"/><stop offset="0.589" stop-color="#f33231"/><stop offset="0.795" stop-color="#f23229"/><stop offset="1" stop-color="#f23226"/></linearGradient><linearGradient id="h35" gradientUnits="userSpaceOnUse" x1="308.3" y1="318.6" x2="717.8" y2="300.7"><stop offset="0" stop-color="#ffffff"/><stop offset="0.141" stop-color="#ff7885"/><stop offset="0.317" stop-color="#fe484c"/><stop offset="0.493" stop-color="#f73836"/><stop offset="0.704" stop-color="#f2322a"/><stop offset="0.852" stop-color="#f23226"/><stop offset="1" stop-color="#f23226"/></linearGradient><linearGradient id="h36" gradientUnits="userSpaceOnUse" x1="308.3" y1="318.6" x2="681.1" y2="325"><stop offset="0" stop-color="#ffffff"/><stop offset="0.172" stop-color="#ff747b"/><stop offset="0.388" stop-color="#fd4644"/><stop offset="0.603" stop-color="#f6372f"/><stop offset="0.861" stop-color="#f23227"/><stop offset="0.931" stop-color="#f23226"/><stop offset="1" stop-color="#f23226"/></linearGradient><linearGradient id="h37" gradientUnits="userSpaceOnUse" x1="308.3" y1="318.6" x2="668.2" y2="340.5"><stop offset="0" stop-color="#ffffff"/><stop offset="0.179" stop-color="#ff777a"/><stop offset="0.402" stop-color="#fe4943"/><stop offset="0.625" stop-color="#f7392e"/><stop offset="0.893" stop-color="#f33326"/><stop offset="0.946" stop-color="#f23226"/><stop offset="1" stop-color="#f23226"/></linearGradient><linearGradient id="h38" gradientUnits="userSpaceOnUse" x1="308.3" y1="318.6" x2="649.1" y2="363.5"><stop offset="0" stop-color="#ffffff"/><stop offset="0.174" stop-color="#ff8280"/><stop offset="0.392" stop-color="#ff5247"/><stop offset="0.61" stop-color="#f94031"/><stop offset="0.871" stop-color="#f43827"/><stop offset="0.936" stop-color="#f33627"/><stop offset="1" stop-color="#f33527"/></linearGradient><linearGradient id="h39" gradientUnits="userSpaceOnUse" x1="308.3" y1="318.6" x2="622" y2="388.1"><stop offset="0" stop-color="#ffffff"/><stop offset="0.172" stop-color="#ff8e86"/><stop offset="0.388" stop-color="#ff5f4c"/><stop offset="0.604" stop-color="#fc4b34"/><stop offset="0.862" stop-color="#f7402a"/><stop offset="0.931" stop-color="#f63e29"/><stop offset="1" stop-color="#f53b28"/></linearGradient><linearGradient id="h40" gradientUnits="userSpaceOnUse" x1="308.3" y1="318.6" x2="598.1" y2="410"><stop offset="0" stop-color="#ffffff"/><stop offset="0.171" stop-color="#ff9b8c"/><stop offset="0.385" stop-color="#ff6c51"/><stop offset="0.598" stop-color="#ff5738"/><stop offset="0.855" stop-color="#fa4b2c"/><stop offset="0.927" stop-color="#f9472b"/><stop offset="1" stop-color="#f8452b"/></linearGradient><linearGradient id="h41" gradientUnits="userSpaceOnUse" x1="308.3" y1="318.6" x2="576.5" y2="429.7"><stop offset="0" stop-color="#ffffff"/><stop offset="0.17" stop-color="#ffa792"/><stop offset="0.382" stop-color="#ff7a56"/><stop offset="0.593" stop-color="#ff643c"/><stop offset="0.848" stop-color="#fd572f"/><stop offset="0.924" stop-color="#fc532e"/><stop offset="1" stop-color="#fb502d"/></linearGradient><linearGradient id="h42" gradientUnits="userSpaceOnUse" x1="308.3" y1="318.6" x2="556.6" y2="447.9"><stop offset="0" stop-color="#ffffff"/><stop offset="0.168" stop-color="#ffb397"/><stop offset="0.379" stop-color="#ff895c"/><stop offset="0.589" stop-color="#ff7340"/><stop offset="0.842" stop-color="#ff6533"/><stop offset="0.921" stop-color="#ff6132"/><stop offset="1" stop-color="#ff5d31"/></linearGradient><linearGradient id="h43" gradientUnits="userSpaceOnUse" x1="308.3" y1="318.6" x2="537.9" y2="464.9"><stop offset="0" stop-color="#ffffff"/><stop offset="0.167" stop-color="#ffc09d"/><stop offset="0.376" stop-color="#ff9961"/><stop offset="0.585" stop-color="#ff8445"/><stop offset="0.836" stop-color="#ff7637"/><stop offset="0.918" stop-color="#ff7136"/><stop offset="1" stop-color="#ff6d35"/></linearGradient><linearGradient id="h44" gradientUnits="userSpaceOnUse" x1="308.3" y1="318.6" x2="520.1" y2="481.2"><stop offset="0" stop-color="#ffffff"/><stop offset="0.166" stop-color="#ffcda2"/><stop offset="0.374" stop-color="#ffab67"/><stop offset="0.582" stop-color="#ff984a"/><stop offset="0.831" stop-color="#ff8a3c"/><stop offset="0.915" stop-color="#ff853b"/><stop offset="1" stop-color="#ff813a"/></linearGradient><linearGradient id="h45" gradientUnits="userSpaceOnUse" x1="308.3" y1="318.6" x2="502.9" y2="496.9"><stop offset="0" stop-color="#ffffff"/><stop offset="0.165" stop-color="#ffdaa8"/><stop offset="0.372" stop-color="#ffbf6e"/><stop offset="0.578" stop-color="#ffaf50"/><stop offset="0.826" stop-color="#ffa342"/><stop offset="0.913" stop-color="#ff9e41"/><stop offset="1" stop-color="#ff9940"/></linearGradient><linearGradient id="h46" gradientUnits="userSpaceOnUse" x1="308.3" y1="318.6" x2="486.6" y2="513.2"><stop offset="0" stop-color="#ffffff"/><stop offset="0.163" stop-color="#ffe9ae"/><stop offset="0.368" stop-color="#ffd675"/><stop offset="0.572" stop-color="#ffca57"/><stop offset="0.817" stop-color="#ffc14a"/><stop offset="0.909" stop-color="#ffbc49"/><stop offset="1" stop-color="#ffb848"/></linearGradient><linearGradient id="h47" gradientUnits="userSpaceOnUse" x1="308.3" y1="318.6" x2="470.8" y2="530.4"><stop offset="0" stop-color="#ffffff"/><stop offset="0.161" stop-color="#fff8b4"/><stop offset="0.363" stop-color="#fff17d"/><stop offset="0.564" stop-color="#ffec60"/><stop offset="0.806" stop-color="#ffe753"/><stop offset="0.903" stop-color="#ffe452"/><stop offset="1" stop-color="#ffe152"/></linearGradient><linearGradient id="h48" gradientUnits="userSpaceOnUse" x1="308.3" y1="318.6" x2="454.6" y2="548.2"><stop offset="0" stop-color="#ffffff"/><stop offset="0.159" stop-color="#ffffba"/><stop offset="0.358" stop-color="#ffff86"/><stop offset="0.556" stop-color="#ffff6a"/><stop offset="0.795" stop-color="#ffff60"/><stop offset="1" stop-color="#ffff60"/></linearGradient><linearGradient id="h49" gradientUnits="userSpaceOnUse" x1="308.3" y1="318.6" x2="437.5" y2="566.7"><stop offset="0" stop-color="#ffffff"/><stop offset="0.157" stop-color="#ffffb8"/><stop offset="0.353" stop-color="#ffff83"/><stop offset="0.548" stop-color="#ffff67"/><stop offset="0.784" stop-color="#ffff5c"/><stop offset="0.892" stop-color="#ffff5b"/><stop offset="1" stop-color="#ffff5b"/></linearGradient><linearGradient id="h50" gradientUnits="userSpaceOnUse" x1="308.3" y1="318.6" x2="419.3" y2="586.5"><stop offset="0" stop-color="#ffffff"/><stop offset="0.154" stop-color="#f3ffb4"/><stop offset="0.347" stop-color="#e8ff7e"/><stop offset="0.54" stop-color="#e1ff60"/><stop offset="0.772" stop-color="#dcff54"/><stop offset="0.886" stop-color="#d5ff53"/><stop offset="1" stop-color="#d0ff52"/></linearGradient><linearGradient id="h51" gradientUnits="userSpaceOnUse" x1="308.3" y1="318.6" x2="399.5" y2="607.8"><stop offset="0" stop-color="#ffffff"/><stop offset="0.152" stop-color="#e1ffb1"/><stop offset="0.342" stop-color="#cbff79"/><stop offset="0.532" stop-color="#bcff5b"/><stop offset="0.76" stop-color="#b1ff4d"/><stop offset="0.88" stop-color="#a9ff4c"/><stop offset="1" stop-color="#a1ff4b"/></linearGradient><linearGradient id="h52" gradientUnits="userSpaceOnUse" x1="308.3" y1="318.6" x2="377.6" y2="631.2"><stop offset="0" stop-color="#ffffff"/><stop offset="0.15" stop-color="#d0ffad"/><stop offset="0.336" stop-color="#afff73"/><stop offset="0.523" stop-color="#9bff55"/><stop offset="0.748" stop-color="#8dff48"/><stop offset="0.874" stop-color="#83ff46"/><stop offset="1" stop-color="#7bff45"/></linearGradient><linearGradient id="h53" gradientUnits="userSpaceOnUse" x1="308.3" y1="318.6" x2="352.9" y2="657.3"><stop offset="0" stop-color="#ffffff"/><stop offset="0.147" stop-color="#beffa8"/><stop offset="0.331" stop-color="#94ff6e"/><stop offset="0.514" stop-color="#7dff50"/><stop offset="0.735" stop-color="#6ffc43"/><stop offset="0.867" stop-color="#65fa41"/><stop offset="1" stop-color="#5df940"/></linearGradient><linearGradient id="h54" gradientUnits="userSpaceOnUse" x1="308.3" y1="318.6" x2="319.2" y2="697"><stop offset="0" stop-color="#ffffff"/><stop offset="0.142" stop-color="#a9ffa3"/><stop offset="0.319" stop-color="#77ff68"/><stop offset="0.497" stop-color="#60fc4b"/><stop offset="0.71" stop-color="#53f73f"/><stop offset="0.855" stop-color="#4cf53d"/><stop offset="1" stop-color="#4af53d"/></linearGradient><linearGradient id="h55" gradientUnits="userSpaceOnUse" x1="308.3" y1="318.6" x2="284.9" y2="719.8"><stop offset="0" stop-color="#ffffff"/><stop offset="0.128" stop-color="#9fffa7"/><stop offset="0.288" stop-color="#6aff6d"/><stop offset="0.449" stop-color="#52fa50"/><stop offset="0.641" stop-color="#4af541"/><stop offset="0.82" stop-color="#4af53d"/><stop offset="1" stop-color="#4af53d"/></linearGradient><linearGradient id="h56" gradientUnits="userSpaceOnUse" x1="308.3" y1="318.6" x2="250.6" y2="757"><stop offset="0" stop-color="#ffffff"/><stop offset="0.096" stop-color="#a4ffb6"/><stop offset="0.217" stop-color="#6dff80"/><stop offset="0.337" stop-color="#54fb62"/><stop offset="0.482" stop-color="#4bf54e"/><stop offset="0.741" stop-color="#4af53d"/><stop offset="1" stop-color="#4af53d"/></linearGradient><linearGradient id="h57" gradientUnits="userSpaceOnUse" x1="308.3" y1="318.6" x2="202.7" y2="794.8"><stop offset="0" stop-color="#ffffff"/><stop offset="0.073" stop-color="#a9ffc4"/><stop offset="0.164" stop-color="#71ff93"/><stop offset="0.254" stop-color="#56fc75"/><stop offset="0.364" stop-color="#4bf65f"/><stop offset="0.682" stop-color="#4af53e"/><stop offset="1" stop-color="#4af53d"/></linearGradient><linearGradient id="h58" gradientUnits="userSpaceOnUse" x1="308.3" y1="318.6" x2="147.2" y2="829.5"><stop offset="0" stop-color="#ffffff"/><stop offset="0.057" stop-color="#acffce"/><stop offset="0.128" stop-color="#74ffa3"/><stop offset="0.2" stop-color="#57fd86"/><stop offset="0.285" stop-color="#4cf770"/><stop offset="0.643" stop-color="#4af540"/><stop offset="1" stop-color="#4af53d"/></linearGradient><linearGradient id="h59" gradientUnits="userSpaceOnUse" x1="308.3" y1="318.6" x2="91.9" y2="841.1"><stop offset="0" stop-color="#ffffff"/><stop offset="0.048" stop-color="#afffd6"/><stop offset="0.108" stop-color="#76ffb0"/><stop offset="0.167" stop-color="#58fe95"/><stop offset="0.239" stop-color="#4df77f"/><stop offset="0.62" stop-color="#4af543"/><stop offset="1" stop-color="#4af53d"/></linearGradient><linearGradient id="h60" gradientUnits="userSpaceOnUse" x1="308.3" y1="318.6" x2="47.6" y2="819.4"><stop offset="0" stop-color="#ffffff"/><stop offset="0.043" stop-color="#b1ffdd"/><stop offset="0.097" stop-color="#78ffbc"/><stop offset="0.151" stop-color="#5affa2"/><stop offset="0.216" stop-color="#4df88d"/><stop offset="0.608" stop-color="#4af54a"/><stop offset="1" stop-color="#4af53d"/></linearGradient><linearGradient id="h61" gradientUnits="userSpaceOnUse" x1="308.3" y1="318.6" x2="12.2" y2="783.3"><stop offset="0" stop-color="#ffffff"/><stop offset="0.041" stop-color="#b3ffe3"/><stop offset="0.092" stop-color="#7affc6"/><stop offset="0.142" stop-color="#5bffae"/><stop offset="0.203" stop-color="#4ef99b"/><stop offset="0.602" stop-color="#4bf652"/><stop offset="1" stop-color="#4af540"/></linearGradient><linearGradient id="h62" gradientUnits="userSpaceOnUse" x1="308.3" y1="318.6" x2="-4.9" y2="726.8"><stop offset="0" stop-color="#ffffff"/><stop offset="0.041" stop-color="#b5ffe9"/><stop offset="0.091" stop-color="#7bffcf"/><stop offset="0.142" stop-color="#5cffba"/><stop offset="0.203" stop-color="#4ef9a8"/><stop offset="0.601" stop-color="#4bf65d"/><stop offset="1" stop-color="#4af548"/></linearGradient><linearGradient id="h63" gradientUnits="userSpaceOnUse" x1="308.3" y1="318.6" x2="-8.7" y2="664.6"><stop offset="0" stop-color="#ffffff"/><stop offset="0.042" stop-color="#b6ffed"/><stop offset="0.094" stop-color="#7dffd8"/><stop offset="0.147" stop-color="#5dffc5"/><stop offset="0.209" stop-color="#4ffab4"/><stop offset="0.605" stop-color="#4cf76b"/><stop offset="1" stop-color="#4bf653"/></linearGradient><linearGradient id="h64" gradientUnits="userSpaceOnUse" x1="308.3" y1="318.6" x2="-7.5" y2="608"><stop offset="0" stop-color="#ffffff"/><stop offset="0.044" stop-color="#b7fff2"/><stop offset="0.098" stop-color="#7effe0"/><stop offset="0.153" stop-color="#5dffcf"/><stop offset="0.218" stop-color="#4ffac0"/><stop offset="0.609" stop-color="#4cf77a"/><stop offset="1" stop-color="#4bf661"/></linearGradient><linearGradient id="h65" gradientUnits="userSpaceOnUse" x1="308.3" y1="318.6" x2="-3.5" y2="557.8"><stop offset="0" stop-color="#ffffff"/><stop offset="0.046" stop-color="#b9fff6"/><stop offset="0.103" stop-color="#80ffe7"/><stop offset="0.16" stop-color="#5effd9"/><stop offset="0.229" stop-color="#50fbcc"/><stop offset="0.614" stop-color="#4df88a"/><stop offset="1" stop-color="#4cf770"/></linearGradient><linearGradient id="h66" gradientUnits="userSpaceOnUse" x1="308.3" y1="318.6" x2="0.9" y2="514.4"><stop offset="0" stop-color="#ffffff"/><stop offset="0.048" stop-color="#bafffa"/><stop offset="0.108" stop-color="#81ffef"/><stop offset="0.167" stop-color="#5fffe3"/><stop offset="0.239" stop-color="#50fbd8"/><stop offset="0.62" stop-color="#4ef99b"/><stop offset="1" stop-color="#4df881"/></linearGradient><linearGradient id="h67" gradientUnits="userSpaceOnUse" x1="308.3" y1="318.6" x2="7.5" y2="475.2"><stop offset="0" stop-color="#ffffff"/><stop offset="0.05" stop-color="#bbfffd"/><stop offset="0.113" stop-color="#82fff6"/><stop offset="0.176" stop-color="#60ffed"/><stop offset="0.251" stop-color="#51fbe4"/><stop offset="0.626" stop-color="#4ef9ae"/><stop offset="1" stop-color="#4df894"/></linearGradient><linearGradient id="h68" gradientUnits="userSpaceOnUse" x1="308.3" y1="318.6" x2="13.2" y2="440.8"><stop offset="0" stop-color="#ffffff"/><stop offset="0.053" stop-color="#bcffff"/><stop offset="0.118" stop-color="#83fffe"/><stop offset="0.184" stop-color="#61fff7"/><stop offset="0.263" stop-color="#51fcf1"/><stop offset="0.631" stop-color="#4ffac1"/><stop offset="1" stop-color="#4ef9a9"/></linearGradient><linearGradient id="h69" gradientUnits="userSpaceOnUse" x1="308.3" y1="318.6" x2="18.3" y2="410"><stop offset="0" stop-color="#ffffff"/><stop offset="0.055" stop-color="#bdffff"/><stop offset="0.123" stop-color="#85ffff"/><stop offset="0.192" stop-color="#62ffff"/><stop offset="0.274" stop-color="#52fdfe"/><stop offset="0.637" stop-color="#50fbd6"/><stop offset="1" stop-color="#4ffac0"/></linearGradient><linearGradient id="h70" gradientUnits="userSpaceOnUse" x1="308.3" y1="318.6" x2="24.2" y2="381.6"><stop offset="0" stop-color="#ffffff"/><stop offset="0.057" stop-color="#bfffff"/><stop offset="0.129" stop-color="#86ffff"/><stop offset="0.201" stop-color="#62ffff"/><stop offset="0.287" stop-color="#52fdff"/><stop offset="0.643" stop-color="#51fcec"/><stop offset="1" stop-color="#50fbda"/></linearGradient><linearGradient id="h71" gradientUnits="userSpaceOnUse" x1="308.3" y1="318.6" x2="30.3" y2="355.2"><stop offset="0" stop-color="#ffffff"/><stop offset="0.06" stop-color="#c0ffff"/><stop offset="0.135" stop-color="#87ffff"/><stop offset="0.21" stop-color="#63ffff"/><stop offset="0.3" stop-color="#53feff"/><stop offset="0.65" stop-color="#52fdff"/><stop offset="1" stop-color="#51fcf7"/></linearGradient><linearGradient id="h72" gradientUnits="userSpaceOnUse" x1="308.3" y1="318.6" x2="36.1" y2="330.5"><stop offset="0" stop-color="#ffffff"/><stop offset="0.063" stop-color="#c1ffff"/><stop offset="0.141" stop-color="#89ffff"/><stop offset="0.22" stop-color="#64ffff"/><stop offset="0.314" stop-color="#53feff"/><stop offset="1" stop-color="#53feff"/></linearGradient><clipPath id="ic"><rect x="1550.7" y="643.6" width="180.7" height="152.2"/></clipPath><clipPath id="ilc"><path d="M174.1 5L174 5L173.8 4.9L173.6 4.9L173.3 4.8L173 4.8L172.6 4.8L172.1 4.8L171.4 5.1L170.3 5.8L168.9 6.9L166.9 8.6L164.4 10.9L161.1 13.8L156.6 17.7L151 22.7L144 29.7L135.5 39.9L124.1 57.8L109.6 86.8L91.3 132.7L68.7 200.7L45.4 295L23.5 412.7L8.2 538.4L3.9 654.8L13.9 750.2L38.9 812L74.3 833.8L114.2 826.2L154.7 805.9L192.9 781.6L229.6 754.3L265.8 724.3L301.6 692.3L337.3 658.9L373.1 624.5L408.7 589.6L444.1 554.7L478.8 520.2L512.5 486.6L544.8 454.4L575.2 424.2L602.9 396.5L627 372.5L648.2 351.4L665.8 334L680.1 319.7L691.5 308.3L700.6 299.3L707.9 292L714 285.9L719 280.9L723 277L726 274L728.3 271.7L730 270L731.1 268.9L732 268L732.7 267.3L733.4 266.6L734 266L734.4 265.6L734.6 265.4L734.7 265.3z"/></clipPath></defs><rect x="1550.7" y="643.6" width="180.7" height="152.2" fill="#282827"/><g clip-path="url(#ic)"><g transform="translate(1533.45 811.10) scale(0.3450 -0.2780)"><filter id="bl2" x="-5%" y="-5%" width="110%" height="110%"><feGaussianBlur stdDeviation="7"/></filter><g clip-path="url(#ilc)"><g filter="url(#bl2)" shape-rendering="crispEdges"><path fill="url(#h0)" d="M308.3 318.6L25 318.6L26.2 292.8z"/><path fill="url(#h1)" d="M308.3 318.6L29.5 294.2L32.9 268.9z"/><path fill="url(#h2)" d="M308.3 318.6L35.3 270.5L40.9 245.8z"/><path fill="url(#h3)" d="M308.3 318.6L39.5 246.6L47.2 222.4z"/><path fill="url(#h4)" d="M308.3 318.6L43.3 222.1L53.2 198.4z"/><path fill="url(#h5)" d="M308.3 318.6L48.6 197.5L60.7 174.3z"/><path fill="url(#h6)" d="M308.3 318.6L54.6 172.1L69 149.6z"/><path fill="url(#h7)" d="M308.3 318.6L60.8 145.3L77.6 123.5z"/><path fill="url(#h8)" d="M308.3 318.6L68.9 117.7L88.2 96.7z"/><path fill="url(#h9)" d="M308.3 318.6L78 88.3L100 68.3z"/><path fill="url(#h10)" d="M308.3 318.6L90 58.5L114.6 39.7z"/><path fill="url(#h11)" d="M308.3 318.6L108.3 32.9L127.4 20.4z"/><path fill="url(#h12)" d="M308.3 318.6L120 11L157.2 -8.9z"/><path fill="url(#h13)" d="M308.3 318.6L155.1 -10L185.6 -22.6z"/><path fill="url(#h14)" d="M308.3 318.6L191.6 -1.9L221.3 -11.2z"/><path fill="url(#h15)" d="M308.3 318.6L226.8 14.4L254.9 8.2z"/><path fill="url(#h16)" d="M308.3 318.6L257.1 28.5L283.8 25z"/><path fill="url(#h17)" d="M308.3 318.6L284 41L309.4 39.9z"/><path fill="url(#h18)" d="M308.3 318.6L308.3 52.2L332.6 53.3z"/><path fill="url(#h19)" d="M308.3 318.6L330.7 62.6L353.9 65.7z"/><path fill="url(#h20)" d="M308.3 318.6L351.7 72.4L374 77.4z"/><path fill="url(#h21)" d="M308.3 318.6L371.8 81.7L393.1 88.5z"/><path fill="url(#h22)" d="M308.3 318.6L391.2 90.7L411.7 99.2z"/><path fill="url(#h23)" d="M308.3 318.6L410.8 98.7L430.5 109z"/><path fill="url(#h24)" d="M308.3 318.6L431.1 105.9L450 118z"/><path fill="url(#h25)" d="M308.3 318.6L452 113.4L470.1 127.4z"/><path fill="url(#h26)" d="M308.3 318.6L473.9 121.2L491.2 137.2z"/><path fill="url(#h27)" d="M308.3 318.6L497.3 129.6L513.7 147.6z"/><path fill="url(#h28)" d="M308.3 318.6L522.7 138.7L538.2 159z"/><path fill="url(#h29)" d="M308.3 318.6L550.9 148.8L565.3 171.6z"/><path fill="url(#h30)" d="M308.3 318.6L582.7 160.2L596 185.8z"/><path fill="url(#h31)" d="M308.3 318.6L619.7 173.4L631.6 202.4z"/><path fill="url(#h32)" d="M308.3 318.6L663.9 189.2L674.2 222.1z"/><path fill="url(#h33)" d="M308.3 318.6L718.5 208.7L726.8 246.5z"/><path fill="url(#h34)" d="M308.3 318.6L756.9 239.5L762.2 280.7z"/><path fill="url(#h35)" d="M308.3 318.6L741.6 280.7L743.2 320.3z"/><path fill="url(#h36)" d="M308.3 318.6L703.6 318.6L703.3 333.8z"/><path fill="url(#h37)" d="M308.3 318.6L690.4 331.7L689.1 353.4z"/><path fill="url(#h38)" d="M308.3 318.6L671.6 350.4L667.2 383.4z"/><path fill="url(#h39)" d="M308.3 318.6L644 377.8L637.3 408.2z"/><path fill="url(#h40)" d="M308.3 318.6L619.7 402L610.8 430.1z"/><path fill="url(#h41)" d="M308.3 318.6L597.8 424L587 449.9z"/><path fill="url(#h42)" d="M308.3 318.6L577.5 444.1L565 468.2z"/><path fill="url(#h43)" d="M308.3 318.6L558.5 463L544.3 485.2z"/><path fill="url(#h44)" d="M308.3 318.6L540.4 481.1L524.6 501.6z"/><path fill="url(#h45)" d="M308.3 318.6L522.8 498.6L505.5 517.4z"/><path fill="url(#h46)" d="M308.3 318.6L506.3 516.6L487.5 533.9z"/><path fill="url(#h47)" d="M308.3 318.6L490.4 535.6L469.9 551.3z"/><path fill="url(#h48)" d="M308.3 318.6L474 555.2L451.7 569.4z"/><path fill="url(#h49)" d="M308.3 318.6L456.7 575.7L432.7 588.2z"/><path fill="url(#h50)" d="M308.3 318.6L438.3 597.5L412.4 608.2z"/><path fill="url(#h51)" d="M308.3 318.6L418.4 621L390.3 629.8z"/><path fill="url(#h52)" d="M308.3 318.6L396.2 646.8L366 653.4z"/><path fill="url(#h53)" d="M308.3 318.6L371.3 675.6L338.5 679.9z"/><path fill="url(#h54)" d="M308.3 318.6L343.3 719.1L294.8 720.4z"/><path fill="url(#h55)" d="M308.3 318.6L295.7 744.7L269.4 743.1z"/><path fill="url(#h56)" d="M308.3 318.6L267.4 786L225 780.4z"/><path fill="url(#h57)" d="M308.3 318.6L218.4 828.4L172.3 818.1z"/><path fill="url(#h58)" d="M308.3 318.6L161.2 867.8L111.7 852.1z"/><path fill="url(#h59)" d="M308.3 318.6L103.2 882.2L52.6 861.2z"/><path fill="url(#h60)" d="M308.3 318.6L55.1 861.5L6.7 836.2z"/><path fill="url(#h61)" d="M308.3 318.6L16 824.9L-28.9 796.2z"/><path fill="url(#h62)" d="M308.3 318.6L-4.8 765.8L-44.3 735.4z"/><path fill="url(#h63)" d="M308.3 318.6L-11.7 700L-45.2 669.3z"/><path fill="url(#h64)" d="M308.3 318.6L-13.1 640L-41 609.3z"/><path fill="url(#h65)" d="M308.3 318.6L-11.1 586.6L-34.2 556.4z"/><path fill="url(#h66)" d="M308.3 318.6L-8.4 540.4L-27.3 510.6z"/><path fill="url(#h67)" d="M308.3 318.6L-3.3 498.5L-18.4 469.4z"/><path fill="url(#h68)" d="M308.3 318.6L1.1 461.8L-10.7 433.2z"/><path fill="url(#h69)" d="M308.3 318.6L5.1 428.9L-3.7 400.9z"/><path fill="url(#h70)" d="M308.3 318.6L10.1 398.5L4.1 371z"/><path fill="url(#h71)" d="M308.3 318.6L15.4 370.3L11.9 343.3z"/><path fill="url(#h72)" d="M308.3 318.6L20.3 343.8L19.2 317.4z"/></g></g><path d="M174.1 5L174 5L173.8 4.9L173.6 4.9L173.3 4.8L173 4.8L172.6 4.8L172.1 4.8L171.4 5.1L170.3 5.8L168.9 6.9L166.9 8.6L164.4 10.9L161.1 13.8L156.6 17.7L151 22.7L144 29.7L135.5 39.9L124.1 57.8L109.6 86.8L91.3 132.7L68.7 200.7L45.4 295L23.5 412.7L8.2 538.4L3.9 654.8L13.9 750.2L38.9 812L74.3 833.8L114.2 826.2L154.7 805.9L192.9 781.6L229.6 754.3L265.8 724.3L301.6 692.3L337.3 658.9L373.1 624.5L408.7 589.6L444.1 554.7L478.8 520.2L512.5 486.6L544.8 454.4L575.2 424.2L602.9 396.5L627 372.5L648.2 351.4L665.8 334L680.1 319.7L691.5 308.3L700.6 299.3L707.9 292L714 285.9L719 280.9L723 277L726 274L728.3 271.7L730 270L731.1 268.9L732 268L732.7 267.3L733.4 266.6L734 266L734.4 265.6L734.6 265.4L734.7 265.3zM640 330L300 600L150 60z" fill-rule="evenodd" fill="#000" fill-opacity="0.355"/></g><path d="M1630.3 636.4h12.6v12.6h-12.6zM1635.6 643.6h12.6v12.6h-12.6zM1637.4 647.5h12.6v12.6h-12.6zM1638.3 650.3h12.6v12.6h-12.6zM1632.6 663.7h12.6v12.6h-12.6zM1618.4 668h12.6v12.6h-12.6zM1633.4 672.5h12.6v12.6h-12.6zM1627.7 677.8h12.6v12.6h-12.6zM1620.4 682.6h12.6v12.6h-12.6zM1623.2 695h12.6v12.6h-12.6zM1610.6 696.8h12.6v12.6h-12.6zM1653.2 662.5h12.6v12.6h-12.6zM1659 664h12.6v12.6h-12.6zM1661.1 665.7h12.6v12.6h-12.6zM1664.3 658.3h12.6v12.6h-12.6zM1668.9 660.5h12.6v12.6h-12.6zM1672.8 664.5h12.6v12.6h-12.6zM1674.8 665.9h12.6v12.6h-12.6zM1674.3 667h12.6v12.6h-12.6zM1679.6 669.5h12.6v12.6h-12.6zM1684.5 671.7h12.6v12.6h-12.6zM1689.9 675h12.6v12.6h-12.6zM1688.9 675.5h12.6v12.6h-12.6zM1691.5 675.5h12.6v12.6h-12.6zM1694.7 681.5h12.6v12.6h-12.6zM1697.6 685.4h12.6v12.6h-12.6zM1703.5 683.4h12.6v12.6h-12.6zM1692.3 693.3h12.6v12.6h-12.6zM1697.6 693.3h12.6v12.6h-12.6zM1699.2 697.9h12.6v12.6h-12.6zM1645.4 681.5h12.6v12.6h-12.6zM1658.4 686.7h12.6v12.6h-12.6zM1665.7 691.9h12.6v12.6h-12.6zM1680.6 695.7h12.6v12.6h-12.6zM1686.1 697.1h12.6v12.6h-12.6zM1688.2 699.5h12.6v12.6h-12.6zM1686.2 700.3h12.6v12.6h-12.6zM1679.6 700.4h12.6v12.6h-12.6zM1678.8 697.8h12.6v12.6h-12.6zM1676.4 698.9h12.6v12.6h-12.6zM1673.3 699.3h12.6v12.6h-12.6zM1672.1 703h12.6v12.6h-12.6zM1665.2 697.5h12.6v12.6h-12.6zM1662.4 704.7h12.6v12.6h-12.6zM1660.9 705.3h12.6v12.6h-12.6zM1656.9 707.1h12.6v12.6h-12.6zM1642.9 695.7h12.6v12.6h-12.6zM1635.4 699.1h12.6v12.6h-12.6zM1681.1 714.3h12.6v12.6h-12.6zM1633.4 705h12.6v12.6h-12.6zM1640.7 706.2h12.6v12.6h-12.6zM1647.9 709h12.6v12.6h-12.6zM1616.4 702.8h12.6v12.6h-12.6zM1709.9 690.7h12.6v12.6h-12.6zM1709.7 693.1h12.6v12.6h-12.6zM1702.3 696h12.6v12.6h-12.6zM1698.3 698.8h12.6v12.6h-12.6zM1720.3 694.2h12.6v12.6h-12.6zM1729.5 699h12.6v12.6h-12.6zM1740.3 711.5h12.6v12.6h-12.6zM1741.7 714.3h12.6v12.6h-12.6zM1745.7 712.8h12.6v12.6h-12.6zM1748.8 711.8h12.6v12.6h-12.6zM1692 708.4h12.6v12.6h-12.6zM1717.6 713.4h12.6v12.6h-12.6zM1721.6 715.4h12.6v12.6h-12.6zM1710.7 718.8h12.6v12.6h-12.6zM1719.8 721.8h12.6v12.6h-12.6zM1692.7 716.8h12.6v12.6h-12.6zM1609.5 699.9h12.6v12.6h-12.6zM1607.3 702.9h12.6v12.6h-12.6zM1605.9 713.6h12.6v12.6h-12.6zM1605.6 715.3h12.6v12.6h-12.6zM1601.9 720.9h12.6v12.6h-12.6zM1608.5 724.2h12.6v12.6h-12.6zM1617.5 725.1h12.6v12.6h-12.6zM1615.4 726.1h12.6v12.6h-12.6zM1628 728.3h12.6v12.6h-12.6zM1649.6 723.3h12.6v12.6h-12.6zM1599.8 726.3h12.6v12.6h-12.6zM1597.2 730.3h12.6v12.6h-12.6zM1610.6 732.7h12.6v12.6h-12.6zM1617.5 737.1h12.6v12.6h-12.6zM1639.1 738.2h12.6v12.6h-12.6zM1659.6 737.2h12.6v12.6h-12.6zM1679.6 729.3h12.6v12.6h-12.6zM1679.8 732.2h12.6v12.6h-12.6zM1690.1 735.3h12.6v12.6h-12.6zM1595.8 741.2h12.6v12.6h-12.6zM1622.2 742.6h12.6v12.6h-12.6zM1625.7 746.9h12.6v12.6h-12.6zM1637.2 750h12.6v12.6h-12.6zM1641.7 755.4h12.6v12.6h-12.6zM1637.5 762.3h12.6v12.6h-12.6zM1590 754.7h12.6v12.6h-12.6zM1600 755.5h12.6v12.6h-12.6zM1596.3 757.4h12.6v12.6h-12.6zM1589.4 769.5h12.6v12.6h-12.6zM1583.6 775.4h12.6v12.6h-12.6zM1579.5 789h12.6v12.6h-12.6z" fill="#fff" fill-opacity="0.1" stroke="#fff" stroke-opacity="0.88" stroke-width="1.5"/><rect x="1634.9" y="713.2" width="12.6" height="12.6" fill="none" stroke="#050505" stroke-width="2.4"/><rect x="1636.9" y="715.2" width="8.6" height="8.6" fill="none" stroke="#e8e8e8" stroke-width="1"/><g stroke="#141414" stroke-width="1.4"><circle cx="1636.6" cy="643.2" r="3.9" fill="#3df03d"/><circle cx="1641.9" cy="650.4" r="3.9" fill="#5a8a3a"/><circle cx="1643.7" cy="653.8" r="3.9" fill="#6a9a4a"/><circle cx="1644.1" cy="656.6" r="3.9" fill="#4a7a34"/><circle cx="1638.9" cy="670" r="3.9" fill="#5a9060"/><circle cx="1625.7" cy="675.3" r="3.9" fill="#2a8a6a"/><circle cx="1639.2" cy="677.8" r="3.9" fill="#6a9a68"/><circle cx="1633" cy="684.6" r="3.9" fill="#2a4a38"/><circle cx="1626.7" cy="688.4" r="3.9" fill="#4a9a78"/><circle cx="1630" cy="700.3" r="3.9" fill="#7ab8a0"/><circle cx="1616.9" cy="703.6" r="3.9" fill="#2a8a88"/><circle cx="1659.5" cy="669.3" r="3.9" fill="#7a9a48"/><circle cx="1664.3" cy="670.3" r="3.9" fill="#a0a860"/><circle cx="1666.4" cy="671" r="3.9" fill="#5a6830"/><circle cx="1671.6" cy="665.6" r="3.9" fill="#a8b030"/><circle cx="1674.7" cy="666.8" r="3.9" fill="#98a838"/><circle cx="1679.1" cy="669.8" r="3.9" fill="#f0e030"/><circle cx="1681.6" cy="672.2" r="3.9" fill="#90902c"/><circle cx="1681.1" cy="674.3" r="3.9" fill="#8a9a38"/><circle cx="1685.9" cy="674.8" r="3.9" fill="#c0b030"/><circle cx="1689.8" cy="678.5" r="3.9" fill="#e8c840"/><circle cx="1695.7" cy="681.3" r="3.9" fill="#b09030"/><circle cx="1695.2" cy="682.3" r="3.9" fill="#a88a30"/><circle cx="1698.8" cy="682.8" r="3.9" fill="#f0b828"/><circle cx="1700.5" cy="688.3" r="3.9" fill="#e0a038"/><circle cx="1703.9" cy="691.2" r="3.9" fill="#b08030"/><circle cx="1710.3" cy="689.7" r="3.9" fill="#f0a820"/><circle cx="1698.6" cy="698.6" r="3.9" fill="#8a5a30"/><circle cx="1704.9" cy="699.1" r="3.9" fill="#7a5030"/><circle cx="1705.5" cy="703.7" r="3.9" fill="#3a2a20"/><circle cx="1652.2" cy="687.8" r="3.9" fill="#5a6a40"/><circle cx="1664.7" cy="692.5" r="3.9" fill="#d8d088"/><circle cx="1672" cy="698.2" r="3.9" fill="#3a3428"/><circle cx="1686.9" cy="701" r="3.9" fill="#c08868"/><circle cx="1692.4" cy="703.4" r="3.9" fill="#c89070"/><circle cx="1694.5" cy="705.3" r="3.9" fill="#d89078"/><circle cx="1692.5" cy="707.6" r="3.9" fill="#e89880"/><circle cx="1685.9" cy="707.2" r="3.9" fill="#d88868"/><circle cx="1685.6" cy="705.1" r="3.9" fill="#c88058"/><circle cx="1682.7" cy="704.7" r="3.9" fill="#c89070"/><circle cx="1679.1" cy="705.6" r="3.9" fill="#b88060"/><circle cx="1677.9" cy="708.3" r="3.9" fill="#7a5838"/><circle cx="1672" cy="704.8" r="3.9" fill="#f0b8a0"/><circle cx="1667.7" cy="711" r="3.9" fill="#c8a088"/><circle cx="1666.2" cy="710.6" r="3.9" fill="#f0c0a8"/><circle cx="1662.7" cy="713.4" r="3.9" fill="#f8c8b8"/><circle cx="1648.7" cy="702" r="3.9" fill="#d0d8b0"/><circle cx="1642.2" cy="706.4" r="3.9" fill="#b0c8b0"/><circle cx="1686.9" cy="720.6" r="3.9" fill="#e07878"/><circle cx="1640.7" cy="711.8" r="3.9" fill="#c0c8b8"/><circle cx="1648" cy="713.5" r="3.9" fill="#d8d0c0"/><circle cx="1653.2" cy="714.8" r="3.9" fill="#e8c0b8"/><circle cx="1623.2" cy="709.1" r="3.9" fill="#70b8a0"/><circle cx="1715.7" cy="698" r="3.9" fill="#d09048"/><circle cx="1717" cy="699.4" r="3.9" fill="#b07040"/><circle cx="1707.6" cy="703.3" r="3.9" fill="#c08050"/><circle cx="1705.1" cy="704.6" r="3.9" fill="#3a2818"/><circle cx="1726.6" cy="701" r="3.9" fill="#f09830"/><circle cx="1734.8" cy="706.3" r="3.9" fill="#f89828"/><circle cx="1746.1" cy="717.3" r="3.9" fill="#e86050"/><circle cx="1748" cy="721.6" r="3.9" fill="#d02848"/><circle cx="1751.5" cy="720.1" r="3.9" fill="#d83040"/><circle cx="1755.1" cy="718.6" r="3.9" fill="#f83820"/><circle cx="1698.3" cy="714.2" r="3.9" fill="#e08080"/><circle cx="1723.9" cy="720.7" r="3.9" fill="#d86068"/><circle cx="1727.9" cy="722.2" r="3.9" fill="#c85060"/><circle cx="1717.5" cy="726.1" r="3.9" fill="#6a2038"/><circle cx="1725.6" cy="729.1" r="3.9" fill="#d03868"/><circle cx="1699.5" cy="723.6" r="3.9" fill="#d87088"/><circle cx="1615.8" cy="706.7" r="3.9" fill="#1e4a48"/><circle cx="1614.6" cy="709.2" r="3.9" fill="#3a9a90"/><circle cx="1611.2" cy="719.4" r="3.9" fill="#30e8f0"/><circle cx="1611.9" cy="722.6" r="3.9" fill="#4a9aa0"/><circle cx="1608.2" cy="727.7" r="3.9" fill="#2a808a"/><circle cx="1614.8" cy="730" r="3.9" fill="#5a90a8"/><circle cx="1623.3" cy="730.9" r="3.9" fill="#6a7888"/><circle cx="1621.7" cy="733.4" r="3.9" fill="#8098b0"/><circle cx="1634.3" cy="734.6" r="3.9" fill="#807890"/><circle cx="1656.9" cy="730.6" r="3.9" fill="#c890a0"/><circle cx="1606.6" cy="733.6" r="3.9" fill="#1e4a58"/><circle cx="1604.5" cy="737.6" r="3.9" fill="#3088a0"/><circle cx="1617.9" cy="739" r="3.9" fill="#6080a8"/><circle cx="1624.8" cy="742.4" r="3.9" fill="#8080b0"/><circle cx="1646.4" cy="744" r="3.9" fill="#4a3048"/><circle cx="1665.4" cy="743.5" r="3.9" fill="#c06080"/><circle cx="1685.9" cy="736.1" r="3.9" fill="#5a2838"/><circle cx="1686.1" cy="739.5" r="3.9" fill="#c85080"/><circle cx="1696.4" cy="741.6" r="3.9" fill="#a03060"/><circle cx="1601.1" cy="747.5" r="3.9" fill="#3090c0"/><circle cx="1628" cy="748.9" r="3.9" fill="#807098"/><circle cx="1632" cy="753.2" r="3.9" fill="#6a5078"/><circle cx="1644" cy="756.3" r="3.9" fill="#4a2848"/><circle cx="1648" cy="762.7" r="3.9" fill="#703070"/><circle cx="1644.3" cy="768.1" r="3.9" fill="#f030f0"/><circle cx="1597.3" cy="760" r="3.9" fill="#1e4a68"/><circle cx="1605.3" cy="761.8" r="3.9" fill="#5868a8"/><circle cx="1603.6" cy="763.2" r="3.9" fill="#5060a0"/><circle cx="1596.2" cy="776.8" r="3.9" fill="#384898"/><circle cx="1589.9" cy="781.7" r="3.9" fill="#182858"/><circle cx="1585.3" cy="794.3" r="3.9" fill="#1010f0"/><circle cx="1641.7" cy="719.5" r="3.9" fill="#303030"/></g><circle cx="1728.5" cy="790" r="4.2" fill="#050505"/></g><rect x="1550.7" y="643.6" width="180.7" height="152.2" fill="none" stroke="#909090" stroke-width="1.4"/>
<rect x="0" y="867.5" width="1810" height="57.5" fill="#323231"/>
<rect x="0" y="914.7" width="1510" height="10.3" fill="#585857"/>
<rect x="14" y="915.7" width="366" height="9.3" fill="#3b3b3a" rx="4.5"/>
<rect x="2" y="915.6" width="10" height="9.4" fill="#838382" rx="2"/>
<path d="M8.7 917.2L4.2 920.6L8.7 924z" fill="#454545"/>
<rect x="1497.6" y="915.6" width="9.4" height="9.4" fill="#7c7c7b" rx="2"/>
<path d="M1500.6 917.2L1505 920.6L1500.6 924z" fill="#3c3c3c"/>
<g clip-path="url(#thc)">
<path d="M2.1 914.7V873Q2.1 868.5 6.6 868.5H44.6Q49.1 868.5 49.1 873V914.7z" fill="url(#v17)"/>
<path d="M2.6 914V873Q2.6 869 6.6 869H44.6Q48.6 869 48.6 873" fill="none" stroke="#a8a8a8" stroke-opacity="0.55" stroke-width="1"/>
<rect x="7.1" y="873.5" width="37.2" height="22.2" fill="#ffffff" rx="2.5" stroke="#505050" stroke-width="0.8" stroke-opacity="0.5"/>
<text x="25.6" y="909.7" font-size="10" fill="#2a2a2a" text-anchor="middle" font-weight="bold" textLength="25.31" lengthAdjust="spacingAndGlyphs">White</text>
<path d="M51.18 914.7V873Q51.18 868.5 55.68 868.5H93.68Q98.18 868.5 98.18 873V914.7z" fill="url(#v17)"/>
<path d="M51.68 914V873Q51.68 869 55.68 869H93.68Q97.68 869 97.68 873" fill="none" stroke="#a8a8a8" stroke-opacity="0.55" stroke-width="1"/>
<rect x="56.18" y="873.5" width="37.2" height="22.2" fill="#e6e6e6" rx="2.5" stroke="#505050" stroke-width="0.8" stroke-opacity="0.5"/>
<text x="74.68" y="909.7" font-size="10" fill="#2a2a2a" text-anchor="middle" font-weight="bold" textLength="34.12" lengthAdjust="spacingAndGlyphs">Gray 80</text>
<path d="M100.26 914.7V873Q100.26 868.5 104.76 868.5H142.76Q147.26 868.5 147.26 873V914.7z" fill="url(#v17)"/>
<path d="M100.76 914V873Q100.76 869 104.76 869H142.76Q146.76 869 146.76 873" fill="none" stroke="#a8a8a8" stroke-opacity="0.55" stroke-width="1"/>
<rect x="105.26" y="873.5" width="37.2" height="22.2" fill="#dedede" rx="2.5" stroke="#505050" stroke-width="0.8" stroke-opacity="0.5"/>
<text x="123.76" y="909.7" font-size="10" fill="#2a2a2a" text-anchor="middle" font-weight="bold" textLength="10.34" lengthAdjust="spacingAndGlyphs">6J</text>
<path d="M149.34 914.7V873Q149.34 868.5 153.84 868.5H191.84Q196.34 868.5 196.34 873V914.7z" fill="url(#v17)"/>
<path d="M149.84 914V873Q149.84 869 153.84 869H191.84Q195.84 869 195.84 873" fill="none" stroke="#a8a8a8" stroke-opacity="0.55" stroke-width="1"/>
<rect x="154.34" y="873.5" width="37.2" height="22.2" fill="#d0d0d0" rx="2.5" stroke="#505050" stroke-width="0.8" stroke-opacity="0.5"/>
<text x="172.84" y="909.7" font-size="10" fill="#2a2a2a" text-anchor="middle" font-weight="bold" textLength="34.12" lengthAdjust="spacingAndGlyphs">Gray 65</text>
<path d="M198.42 914.7V873Q198.42 868.5 202.92 868.5H240.92Q245.42 868.5 245.42 873V914.7z" fill="url(#v17)"/>
<path d="M198.92 914V873Q198.92 869 202.92 869H240.92Q244.92 869 244.92 873" fill="none" stroke="#a8a8a8" stroke-opacity="0.55" stroke-width="1"/>
<rect x="203.42" y="873.5" width="37.2" height="22.2" fill="#c4c4c4" rx="2.5" stroke="#505050" stroke-width="0.8" stroke-opacity="0.5"/>
<text x="221.92" y="909.7" font-size="10" fill="#2a2a2a" text-anchor="middle" font-weight="bold" textLength="10.85" lengthAdjust="spacingAndGlyphs">5F</text>
<path d="M247.5 914.7V873Q247.5 868.5 252 868.5H290Q294.5 868.5 294.5 873V914.7z" fill="url(#v17)"/>
<path d="M248 914V873Q248 869 252 869H290Q294 869 294 873" fill="none" stroke="#a8a8a8" stroke-opacity="0.55" stroke-width="1"/>
<rect x="252.5" y="873.5" width="37.2" height="22.2" fill="#bababa" rx="2.5" stroke="#505050" stroke-width="0.8" stroke-opacity="0.5"/>
<text x="271" y="909.7" font-size="10" fill="#2a2a2a" text-anchor="middle" font-weight="bold" textLength="34.12" lengthAdjust="spacingAndGlyphs">Gray 50</text>
<path d="M296.58 914.7V873Q296.58 868.5 301.08 868.5H339.08Q343.58 868.5 343.58 873V914.7z" fill="url(#v17)"/>
<path d="M297.08 914V873Q297.08 869 301.08 869H339.08Q343.08 869 343.08 873" fill="none" stroke="#a8a8a8" stroke-opacity="0.55" stroke-width="1"/>
<rect x="301.58" y="873.5" width="37.2" height="22.2" fill="#b6b6b6" rx="2.5" stroke="#505050" stroke-width="0.8" stroke-opacity="0.5"/>
<text x="320.08" y="909.7" font-size="10" fill="#2a2a2a" text-anchor="middle" font-weight="bold" textLength="7.76" lengthAdjust="spacingAndGlyphs">6I</text>
<path d="M345.66 914.7V873Q345.66 868.5 350.16 868.5H388.16Q392.66 868.5 392.66 873V914.7z" fill="url(#v17)"/>
<path d="M346.16 914V873Q346.16 869 350.16 869H388.16Q392.16 869 392.16 873" fill="none" stroke="#a8a8a8" stroke-opacity="0.55" stroke-width="1"/>
<rect x="350.66" y="873.5" width="37.2" height="22.2" fill="#a6a6a6" rx="2.5" stroke="#505050" stroke-width="0.8" stroke-opacity="0.5"/>
<text x="369.16" y="909.7" font-size="10" fill="#2a2a2a" text-anchor="middle" font-weight="bold" textLength="11.89" lengthAdjust="spacingAndGlyphs">6K</text>
<path d="M394.74 914.7V873Q394.74 868.5 399.24 868.5H437.24Q441.74 868.5 441.74 873V914.7z" fill="url(#v17)"/>
<path d="M395.24 914V873Q395.24 869 399.24 869H437.24Q441.24 869 441.24 873" fill="none" stroke="#a8a8a8" stroke-opacity="0.55" stroke-width="1"/>
<rect x="399.74" y="873.5" width="37.2" height="22.2" fill="#9e9e9e" rx="2.5" stroke="#505050" stroke-width="0.8" stroke-opacity="0.5"/>
<text x="418.24" y="909.7" font-size="10" fill="#2a2a2a" text-anchor="middle" font-weight="bold" textLength="34.12" lengthAdjust="spacingAndGlyphs">Gray 35</text>
<path d="M443.82 914.7V873Q443.82 868.5 448.32 868.5H486.32Q490.82 868.5 490.82 873V914.7z" fill="url(#v17)"/>
<path d="M444.32 914V873Q444.32 869 448.32 869H486.32Q490.32 869 490.32 873" fill="none" stroke="#a8a8a8" stroke-opacity="0.55" stroke-width="1"/>
<rect x="448.82" y="873.5" width="37.2" height="22.2" fill="#969696" rx="2.5" stroke="#505050" stroke-width="0.8" stroke-opacity="0.5"/>
<text x="467.32" y="909.7" font-size="10" fill="#2a2a2a" text-anchor="middle" font-weight="bold" textLength="12.41" lengthAdjust="spacingAndGlyphs">5G</text>
<path d="M492.9 914.7V873Q492.9 868.5 497.4 868.5H535.4Q539.9 868.5 539.9 873V914.7z" fill="url(#v17)"/>
<path d="M493.4 914V873Q493.4 869 497.4 869H535.4Q539.4 869 539.4 873" fill="none" stroke="#a8a8a8" stroke-opacity="0.55" stroke-width="1"/>
<rect x="497.9" y="873.5" width="37.2" height="22.2" fill="#8e8e8e" rx="2.5" stroke="#505050" stroke-width="0.8" stroke-opacity="0.5"/>
<text x="516.4" y="909.7" font-size="10" fill="#2a2a2a" text-anchor="middle" font-weight="bold" textLength="11.89" lengthAdjust="spacingAndGlyphs">6H</text>
<path d="M541.98 914.7V873Q541.98 868.5 546.48 868.5H584.48Q588.98 868.5 588.98 873V914.7z" fill="url(#v17)"/>
<path d="M542.48 914V873Q542.48 869 546.48 869H584.48Q588.48 869 588.48 873" fill="none" stroke="#a8a8a8" stroke-opacity="0.55" stroke-width="1"/>
<rect x="546.98" y="873.5" width="37.2" height="22.2" fill="#7c7c7c" rx="2.5" stroke="#505050" stroke-width="0.8" stroke-opacity="0.5"/>
<text x="565.48" y="909.7" font-size="10" fill="#2a2a2a" text-anchor="middle" font-weight="bold" textLength="11.89" lengthAdjust="spacingAndGlyphs">5H</text>
<path d="M591.06 914.7V873Q591.06 868.5 595.56 868.5H633.56Q638.06 868.5 638.06 873V914.7z" fill="url(#v17)"/>
<path d="M591.56 914V873Q591.56 869 595.56 869H633.56Q637.56 869 637.56 873" fill="none" stroke="#a8a8a8" stroke-opacity="0.55" stroke-width="1"/>
<rect x="596.06" y="873.5" width="37.2" height="22.2" fill="#747474" rx="2.5" stroke="#505050" stroke-width="0.8" stroke-opacity="0.5"/>
<text x="614.56" y="909.7" font-size="10" fill="#2a2a2a" text-anchor="middle" font-weight="bold" textLength="11.89" lengthAdjust="spacingAndGlyphs">7K</text>
<path d="M640.14 914.7V873Q640.14 868.5 644.64 868.5H682.64Q687.14 868.5 687.14 873V914.7z" fill="url(#v17)"/>
<path d="M640.64 914V873Q640.64 869 644.64 869H682.64Q686.64 869 686.64 873" fill="none" stroke="#a8a8a8" stroke-opacity="0.55" stroke-width="1"/>
<rect x="645.14" y="873.5" width="37.2" height="22.2" fill="#6c6c6c" rx="2.5" stroke="#505050" stroke-width="0.8" stroke-opacity="0.5"/>
<text x="663.64" y="909.7" font-size="10" fill="#2a2a2a" text-anchor="middle" font-weight="bold" textLength="12.41" lengthAdjust="spacingAndGlyphs">6G</text>
<path d="M689.22 914.7V873Q689.22 868.5 693.72 868.5H731.72Q736.22 868.5 736.22 873V914.7z" fill="url(#v17)"/>
<path d="M689.72 914V873Q689.72 869 693.72 869H731.72Q735.72 869 735.72 873" fill="none" stroke="#a8a8a8" stroke-opacity="0.55" stroke-width="1"/>
<rect x="694.22" y="873.5" width="37.2" height="22.2" fill="#646464" rx="2.5" stroke="#505050" stroke-width="0.8" stroke-opacity="0.5"/>
<text x="712.72" y="909.7" font-size="10" fill="#2a2a2a" text-anchor="middle" font-weight="bold" textLength="7.76" lengthAdjust="spacingAndGlyphs">5I</text>
<path d="M738.3 914.7V873Q738.3 868.5 742.8 868.5H780.8Q785.3 868.5 785.3 873V914.7z" fill="url(#v17)"/>
<path d="M738.8 914V873Q738.8 869 742.8 869H780.8Q784.8 869 784.8 873" fill="none" stroke="#a8a8a8" stroke-opacity="0.55" stroke-width="1"/>
<rect x="743.3" y="873.5" width="37.2" height="22.2" fill="#5c5c5c" rx="2.5" stroke="#505050" stroke-width="0.8" stroke-opacity="0.5"/>
<text x="761.8" y="909.7" font-size="10" fill="#2a2a2a" text-anchor="middle" font-weight="bold" textLength="10.85" lengthAdjust="spacingAndGlyphs">6F</text>
<path d="M787.38 914.7V873Q787.38 868.5 791.88 868.5H829.88Q834.38 868.5 834.38 873V914.7z" fill="url(#v17)"/>
<path d="M787.88 914V873Q787.88 869 791.88 869H829.88Q833.88 869 833.88 873" fill="none" stroke="#a8a8a8" stroke-opacity="0.55" stroke-width="1"/>
<rect x="792.38" y="873.5" width="37.2" height="22.2" fill="#444444" rx="2.5" stroke="#505050" stroke-width="0.8" stroke-opacity="0.5"/>
<text x="810.88" y="909.7" font-size="10" fill="#2a2a2a" text-anchor="middle" font-weight="bold" textLength="11.89" lengthAdjust="spacingAndGlyphs">8K</text>
<path d="M836.46 914.7V873Q836.46 868.5 840.96 868.5H878.96Q883.46 868.5 883.46 873V914.7z" fill="url(#v17)"/>
<path d="M836.96 914V873Q836.96 869 840.96 869H878.96Q882.96 869 882.96 873" fill="none" stroke="#a8a8a8" stroke-opacity="0.55" stroke-width="1"/>
<rect x="841.46" y="873.5" width="37.2" height="22.2" fill="#343434" rx="2.5" stroke="#505050" stroke-width="0.8" stroke-opacity="0.5"/>
<text x="859.96" y="909.7" font-size="10" fill="#2a2a2a" text-anchor="middle" font-weight="bold" textLength="10.34" lengthAdjust="spacingAndGlyphs">5J</text>
<path d="M885.54 914.7V873Q885.54 868.5 890.04 868.5H928.04Q932.54 868.5 932.54 873V914.7z" fill="url(#v18)"/>
<rect x="890.54" y="873.5" width="37.2" height="22.2" fill="#000000" rx="2.5" stroke="#222" stroke-width="0.8" stroke-opacity="0.5"/>
<text x="909.04" y="909.7" font-size="10" fill="#fff" text-anchor="middle" font-weight="bold" textLength="24.82" lengthAdjust="spacingAndGlyphs">Black</text>
<path d="M934.62 914.7V873Q934.62 868.5 939.12 868.5H977.12Q981.62 868.5 981.62 873V914.7z" fill="url(#v17)"/>
<path d="M935.12 914V873Q935.12 869 939.12 869H977.12Q981.12 869 981.12 873" fill="none" stroke="#a8a8a8" stroke-opacity="0.55" stroke-width="1"/>
<rect x="939.62" y="873.5" width="37.2" height="22.2" fill="#7a5444" rx="2.5" stroke="#505050" stroke-width="0.8" stroke-opacity="0.5"/>
<text x="958.12" y="909.7" font-size="10" fill="#2a2a2a" text-anchor="middle" font-weight="bold" textLength="42.9" lengthAdjust="spacingAndGlyphs">Dark Skin</text>
<path d="M983.7 914.7V873Q983.7 868.5 988.2 868.5H1026.2Q1030.7 868.5 1030.7 873V914.7z" fill="url(#v17)"/>
<path d="M984.2 914V873Q984.2 869 988.2 869H1026.2Q1030.2 869 1030.2 873" fill="none" stroke="#a8a8a8" stroke-opacity="0.55" stroke-width="1"/>
<rect x="988.7" y="873.5" width="37.2" height="22.2" fill="#cf9d86" rx="2.5" stroke="#505050" stroke-width="0.8" stroke-opacity="0.5"/>
<text x="1007.2" y="909.7" font-size="10" fill="#2a2a2a" text-anchor="middle" font-weight="bold" textLength="44.94" lengthAdjust="spacingAndGlyphs">Light Skin</text>
<path d="M1032.78 914.7V873Q1032.78 868.5 1037.28 868.5H1075.28Q1079.78 868.5 1079.78 873V914.7z" fill="url(#v17)"/>
<path d="M1033.28 914V873Q1033.28 869 1037.28 869H1075.28Q1079.28 869 1079.28 873" fill="none" stroke="#a8a8a8" stroke-opacity="0.55" stroke-width="1"/>
<rect x="1037.78" y="873.5" width="37.2" height="22.2" fill="#5f82b4" rx="2.5" stroke="#505050" stroke-width="0.8" stroke-opacity="0.5"/>
<text x="1056.28" y="909.7" font-size="10" fill="#2a2a2a" text-anchor="middle" font-weight="bold" textLength="39.28" lengthAdjust="spacingAndGlyphs">Blue Sky</text>
<path d="M1081.86 914.7V873Q1081.86 868.5 1086.36 868.5H1124.36Q1128.86 868.5 1128.86 873V914.7z" fill="url(#v17)"/>
<path d="M1082.36 914V873Q1082.36 869 1086.36 869H1124.36Q1128.36 869 1128.36 873" fill="none" stroke="#a8a8a8" stroke-opacity="0.55" stroke-width="1"/>
<rect x="1086.86" y="873.5" width="37.2" height="22.2" fill="#5a7342" rx="2.5" stroke="#505050" stroke-width="0.8" stroke-opacity="0.5"/>
<text x="1105.36" y="909.7" font-size="10" fill="#2a2a2a" text-anchor="middle" font-weight="bold" textLength="32.55" lengthAdjust="spacingAndGlyphs">Foliage</text>
<path d="M1130.94 914.7V873Q1130.94 868.5 1135.44 868.5H1173.44Q1177.94 868.5 1177.94 873V914.7z" fill="url(#v17)"/>
<path d="M1131.44 914V873Q1131.44 869 1135.44 869H1173.44Q1177.44 869 1177.44 873" fill="none" stroke="#a8a8a8" stroke-opacity="0.55" stroke-width="1"/>
<rect x="1135.94" y="873.5" width="37.2" height="11.3" fill="#8a84c4" rx="2.5" stroke="#505050" stroke-width="0.8" stroke-opacity="0.5"/>
<text x="1139.46" y="898.7" font-size="10" fill="#2a2a2a" font-weight="bold" textLength="20.15" lengthAdjust="spacingAndGlyphs">Blue</text>
<text x="1139.46" y="909.6" font-size="10" fill="#2a2a2a" font-weight="bold" textLength="29.97" lengthAdjust="spacingAndGlyphs">Flower</text>
<path d="M1180.02 914.7V873Q1180.02 868.5 1184.52 868.5H1222.52Q1227.02 868.5 1227.02 873V914.7z" fill="url(#v17)"/>
<path d="M1180.52 914V873Q1180.52 869 1184.52 869H1222.52Q1226.52 869 1226.52 873" fill="none" stroke="#a8a8a8" stroke-opacity="0.55" stroke-width="1"/>
<rect x="1185.02" y="873.5" width="37.2" height="11.3" fill="#66c4ae" rx="2.5" stroke="#505050" stroke-width="0.8" stroke-opacity="0.5"/>
<text x="1189.31" y="898.7" font-size="10" fill="#2a2a2a" font-weight="bold" textLength="28.42" lengthAdjust="spacingAndGlyphs">Bluish</text>
<text x="1189.31" y="909.6" font-size="10" fill="#2a2a2a" font-weight="bold" textLength="26.88" lengthAdjust="spacingAndGlyphs">Green</text>
<path d="M1229.1 914.7V873Q1229.1 868.5 1233.6 868.5H1271.6Q1276.1 868.5 1276.1 873V914.7z" fill="url(#v17)"/>
<path d="M1229.6 914V873Q1229.6 869 1233.6 869H1271.6Q1275.6 869 1275.6 873" fill="none" stroke="#a8a8a8" stroke-opacity="0.55" stroke-width="1"/>
<rect x="1234.1" y="873.5" width="37.2" height="22.2" fill="#e2812e" rx="2.5" stroke="#505050" stroke-width="0.8" stroke-opacity="0.5"/>
<text x="1252.6" y="909.7" font-size="10" fill="#2a2a2a" text-anchor="middle" font-weight="bold" textLength="32.56" lengthAdjust="spacingAndGlyphs">Orange</text>
<path d="M1278.18 914.7V873Q1278.18 868.5 1282.68 868.5H1320.68Q1325.18 868.5 1325.18 873V914.7z" fill="url(#v17)"/>
<path d="M1278.68 914V873Q1278.68 869 1282.68 869H1320.68Q1324.68 869 1324.68 873" fill="none" stroke="#a8a8a8" stroke-opacity="0.55" stroke-width="1"/>
<rect x="1283.18" y="873.5" width="37.2" height="11.3" fill="#4a5cb4" rx="2.5" stroke="#505050" stroke-width="0.8" stroke-opacity="0.5"/>
<text x="1283.08" y="898.7" font-size="10" fill="#2a2a2a" font-weight="bold" textLength="37.2" lengthAdjust="spacingAndGlyphs">Purplish</text>
<text x="1283.08" y="909.6" font-size="10" fill="#2a2a2a" font-weight="bold" textLength="20.15" lengthAdjust="spacingAndGlyphs">Blue</text>
<path d="M1327.26 914.7V873Q1327.26 868.5 1331.76 868.5H1369.76Q1374.26 868.5 1374.26 873V914.7z" fill="url(#v17)"/>
<path d="M1327.76 914V873Q1327.76 869 1331.76 869H1369.76Q1373.76 869 1373.76 873" fill="none" stroke="#a8a8a8" stroke-opacity="0.55" stroke-width="1"/>
<rect x="1332.26" y="873.5" width="37.2" height="11.3" fill="#d0565f" rx="2.5" stroke="#505050" stroke-width="0.8" stroke-opacity="0.5"/>
<text x="1330.09" y="898.7" font-size="10" fill="#2a2a2a" font-weight="bold" textLength="41.34" lengthAdjust="spacingAndGlyphs">Moderate</text>
<text x="1330.09" y="909.6" font-size="10" fill="#2a2a2a" font-weight="bold" textLength="17.57" lengthAdjust="spacingAndGlyphs">Red</text>
<path d="M1376.34 914.7V873Q1376.34 868.5 1380.84 868.5H1418.84Q1423.34 868.5 1423.34 873V914.7z" fill="url(#v17)"/>
<path d="M1376.84 914V873Q1376.84 869 1380.84 869H1418.84Q1422.84 869 1422.84 873" fill="none" stroke="#a8a8a8" stroke-opacity="0.55" stroke-width="1"/>
<rect x="1381.34" y="873.5" width="37.2" height="22.2" fill="#5e3a74" rx="2.5" stroke="#505050" stroke-width="0.8" stroke-opacity="0.5"/>
<text x="1399.84" y="909.7" font-size="10" fill="#2a2a2a" text-anchor="middle" font-weight="bold" textLength="28.94" lengthAdjust="spacingAndGlyphs">Purple</text>
<path d="M1425.42 914.7V873Q1425.42 868.5 1429.92 868.5H1467.92Q1472.42 868.5 1472.42 873V914.7z" fill="url(#v17)"/>
<path d="M1425.92 914V873Q1425.92 869 1429.92 869H1467.92Q1471.92 869 1471.92 873" fill="none" stroke="#a8a8a8" stroke-opacity="0.55" stroke-width="1"/>
<rect x="1430.42" y="873.5" width="37.2" height="11.3" fill="#a6c843" rx="2.5" stroke="#505050" stroke-width="0.8" stroke-opacity="0.5"/>
<text x="1434.45" y="898.7" font-size="10" fill="#2a2a2a" font-weight="bold" textLength="28.94" lengthAdjust="spacingAndGlyphs">Yellow</text>
<text x="1434.45" y="909.6" font-size="10" fill="#2a2a2a" font-weight="bold" textLength="26.88" lengthAdjust="spacingAndGlyphs">Green</text>
<path d="M1474.5 914.7V873Q1474.5 868.5 1479 868.5H1517Q1521.5 868.5 1521.5 873V914.7z" fill="url(#v17)"/>
<path d="M1475 914V873Q1475 869 1479 869H1517Q1521 869 1521 873" fill="none" stroke="#a8a8a8" stroke-opacity="0.55" stroke-width="1"/>
<rect x="1479.5" y="873.5" width="37.2" height="11.3" fill="#eda92e" rx="2.5" stroke="#505050" stroke-width="0.8" stroke-opacity="0.5"/>
<text x="1481.72" y="898.7" font-size="10" fill="#2a2a2a" font-weight="bold" textLength="32.56" lengthAdjust="spacingAndGlyphs">Orange</text>
<text x="1481.72" y="909.6" font-size="10" fill="#2a2a2a" font-weight="bold" textLength="28.94" lengthAdjust="spacingAndGlyphs">Yellow</text>
</g>
<rect x="1508" y="868" width="45.5" height="17" fill="url(#v21)"/>
<rect x="1508" y="885.5" width="45.5" height="39.5" fill="url(#v22)"/>
<path d="M1508 885.2L1553.5 885.2" stroke="#444" stroke-width="1"/>
<circle cx="1530.5" cy="876.5" r="6.5" fill="#8a8a8a"/>
<path d="M1526.5 878.8L1530.5 874L1534.5 878.8z" fill="#3a3a3a"/>
<rect x="1517.8" y="893" width="26" height="26" fill="url(#v23)" rx="4" stroke="#2e2e2e" stroke-width="2.6"/>
<rect x="1524.3" y="899.6" width="13.4" height="13" fill="#060606"/>
<rect x="1553.6" y="868" width="44.6" height="28.5" fill="url(#v19)"/>
<circle cx="1575.9" cy="882.6" r="10" fill="url(#v24)"/>
<rect x="1598.2" y="868" width="42.4" height="28.5" fill="url(#v19)"/>
<path d="M1598.2 868L1598.2 896.5" stroke="#4a4a4a" stroke-width="1"/>
<circle cx="1619.4" cy="882.6" r="10" fill="url(#v24)"/>
<rect x="1640.6" y="868" width="43" height="28.5" fill="url(#v19)"/>
<path d="M1640.6 868L1640.6 896.5" stroke="#4a4a4a" stroke-width="1"/>
<circle cx="1662.1" cy="882.6" r="10" fill="url(#v24)"/>
<rect x="1683.6" y="868" width="41.9" height="28.5" fill="url(#v19)"/>
<path d="M1683.6 868L1683.6 896.5" stroke="#4a4a4a" stroke-width="1"/>
<circle cx="1704.55" cy="882.6" r="10" fill="url(#v24)"/>
<rect x="1725.5" y="868" width="43" height="28.5" fill="url(#v20)"/>
<path d="M1725.5 868L1725.5 896.5" stroke="#4a4a4a" stroke-width="1"/>
<circle cx="1747" cy="882.6" r="10" fill="url(#v25)"/>
<rect x="1768.5" y="868" width="41.5" height="28.5" fill="url(#v20)"/>
<path d="M1768.5 868L1768.5 896.5" stroke="#2a2a2a" stroke-width="1"/>
<circle cx="1789.25" cy="882.6" r="10" fill="url(#v25)"/>
<rect x="1571.9" y="878.6" width="8" height="8" fill="#333"/>
<path d="M1615.9 877.2L1623.9 882.6L1615.9 888z" fill="#333"/>
<path d="M1658.6 877.5H1656.6V887.5H1658.6M1665.6 877.5H1667.6V887.5H1665.6" stroke="#333" stroke-width="1.6" fill="none"/>
<path d="M1659.6 882.6H1664.6" stroke="#333" stroke-width="1.4" stroke-dasharray="1.5 1.2"/>
<path d="M1704.55 882.6C1702.55 879.5 1698.55 879.5 1698.55 882.6C1698.55 885.7 1702.55 885.7 1704.55 882.6C1706.55 879.5 1710.55 879.5 1710.55 882.6C1710.55 885.7 1706.55 885.7 1704.55 882.6z" stroke="#333" stroke-width="1.7" fill="none"/>
<path d="M1742 881A5.2 5.2 0 0 1 1751.5 880M1752 884.5A5.2 5.2 0 0 1 1742.5 885.5" stroke="#242424" stroke-width="2" fill="none"/>
<path d="M1749 880.5H1753V876.5zM1745 885H1741V889z" fill="#242424"/>
<path d="M1784.25 882.5L1787.75 886.5L1794.75 878.5" stroke="#242424" stroke-width="2.4" fill="none"/>
<rect x="1553.6" y="898" width="256.4" height="27" fill="url(#v26)"/>
<path d="M1553.6 897.3L1810 897.3" stroke="#3a3a3a" stroke-width="1.4"/>
<path d="M1683.6 898L1683.6 925" stroke="#4a4a4a" stroke-width="1"/>
<path d="M1553.6 898.6L1810 898.6" stroke="#c0c0c0" stroke-width="1"/>
<circle cx="1582.8" cy="912.2" r="9" fill="url(#v24)"/><circle cx="1785.3" cy="912.2" r="9" fill="url(#v24)"/>
<path d="M1582 908.2L1578.5 912.2L1582 916.2M1586.5 908.2L1583 912.2L1586.5 916.2" stroke="#333" stroke-width="1.6" fill="none"/>
<path d="M1781.5 908.2L1785 912.2L1781.5 916.2M1786 908.2L1789.500 912.2L1786 916.2" stroke="#333" stroke-width="1.6" fill="none"/>
<text x="1609" y="919.3" font-size="20" fill="#2e2e2e" textLength="47.5" lengthAdjust="spacingAndGlyphs" stroke="#2e2e2e" stroke-width="0.5">Back</text>
<text x="1709.5" y="919.3" font-size="20" fill="#2e2e2e" textLength="48.5" lengthAdjust="spacingAndGlyphs" stroke="#2e2e2e" stroke-width="0.5">Next</text>
</svg>
</body></html>
